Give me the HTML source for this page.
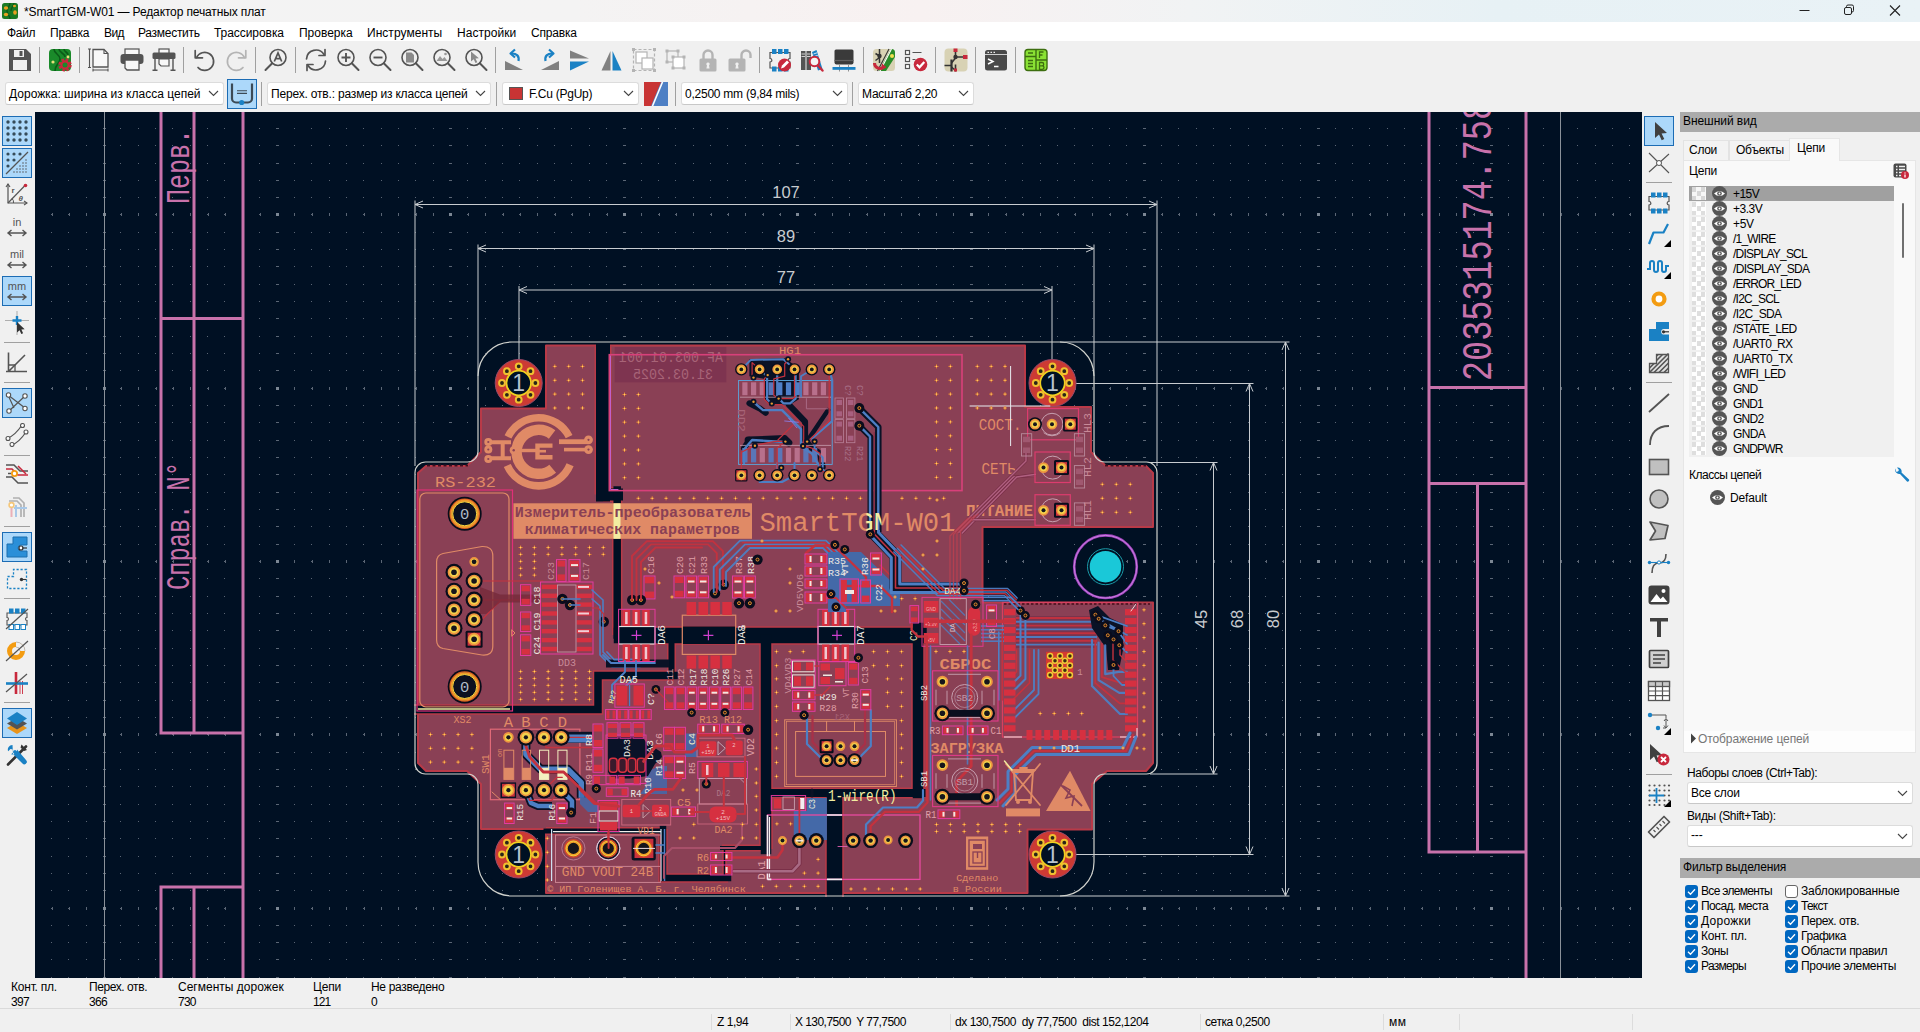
<!DOCTYPE html>
<html lang="ru"><head><meta charset="utf-8"><title>SmartTGM-W01</title>
<style>
*{box-sizing:border-box;margin:0;padding:0}
html,body{width:1920px;height:1032px;overflow:hidden;background:#f0f0f0;font-family:"Liberation Sans",sans-serif;font-size:12px;color:#000}
.abs{position:absolute}
#title{position:absolute;left:0;top:0;width:1920px;height:22px;background:linear-gradient(90deg,#f3f3f3 0%,#f4f3f3 30%,#f8f1f1 48%,#f1f3f4 62%,#e7f1f5 78%,#e9f2f6 100%)}
#title .t{position:absolute;left:24px;top:5px;font-size:12px;letter-spacing:-0.1px;white-space:nowrap}
#menu{position:absolute;left:0;top:22px;width:1920px;height:19px;background:#fff}
#menu span{position:absolute;top:4px;font-size:12px;white-space:nowrap;letter-spacing:-0.15px}
#tb1{position:absolute;left:0;top:41px;width:1920px;height:37px;background:#f0f0f0}
#tb2{position:absolute;left:0;top:78px;width:1920px;height:34px;background:#f0f0f0}
.sep{position:absolute;width:1px;background:#a0a0a0}
.ico{position:absolute;width:24px;height:24px}
.combo{position:absolute;top:4px;height:23px;background:#fff;border:1px solid #dcdcdc;border-bottom-color:#c8c8c8;border-radius:3px;font-size:12px;line-height:22px;padding-left:3px;white-space:nowrap;letter-spacing:-0.15px}
.combo svg{position:absolute;right:4px;top:7px}
#ltb{position:absolute;left:0;top:112px;width:35px;height:866px;background:#f0f0f0}
#rtb{position:absolute;left:1642px;top:112px;width:35px;height:866px;background:#f0f0f0}
.tbtn{position:absolute;width:30px;height:30px;border:1px solid #1c6cb4;background:#acd8fa}
#canvas{position:absolute;left:35px;top:112px;width:1607px;height:866px;background:#001023;overflow:hidden}
#rp{position:absolute;left:1677px;top:112px;width:243px;height:866px;background:#f0f0f0}
.hdr{position:absolute;left:3px;width:240px;height:20px;background:#ababab;font-size:12px;line-height:19px;padding-left:3px;letter-spacing:-0.1px}
.row{position:absolute;left:0;height:15px;width:205px;font-size:12px;line-height:15px;white-space:nowrap;letter-spacing:-0.2px}
.row .sw{position:absolute;left:3px;top:1px;width:14px;height:13px;background:
 conic-gradient(#fff 25%,#dcdcdc 0 50%,#fff 0 75%,#dcdcdc 0) 0 0/9px 9px;opacity:.9}
.row .eye{position:absolute;left:23px;top:0}
.row .tx{position:absolute;left:44px;top:1px}
#msg{position:absolute;left:0;top:978px;width:1920px;height:32px;background:#f0f0f0;font-size:12px;letter-spacing:-0.15px}
#msg span{position:absolute;white-space:nowrap}
#status{position:absolute;left:0;top:1008px;width:1920px;height:24px;background:#f0f0f0;border-top:1px solid #dadada;font-size:12px;letter-spacing:-0.15px}
#status span{position:absolute;top:6px;white-space:nowrap}
.cb{position:absolute;width:13px;height:13px;border-radius:3px;background:#0067c0}
.cb.off{background:#fff;border:1px solid #666}
.cbl{position:absolute;font-size:12px;white-space:nowrap;letter-spacing:-0.1px}
</style></head><body>
<div id="title">
<svg class="abs" style="left:2px;top:3px" width="16" height="16" viewBox="0 0 16 16"><rect x="0" y="0" width="16" height="16" rx="2.500" fill="#1b7a25"/><path d="M8 0c0 4-3 4-3 8s3 4 3 8M12 0c0 3-3 4-3 8" stroke="#0e5a18" stroke-width="1.300" fill="none"/><ellipse cx="4" cy="5" rx="2.200" ry="1.800" fill="#e8a020"/><ellipse cx="4" cy="11.500" rx="2.200" ry="1.800" fill="#e8a020"/><ellipse cx="13" cy="9.500" rx="1.800" ry="2.200" fill="#e8a020"/><ellipse cx="12.500" cy="3" rx="1.500" ry="1.300" fill="#e8a020"/></svg>
<div class="t" style="letter-spacing:-0.13px">*SmartTGM-W01 — Редактор печатных плат</div>
<svg class="abs" style="left:1795px;top:0" width="125" height="22" viewBox="0 0 125 22"><path d="M4.500 10.500h10" stroke="#222" stroke-width="1"/><rect x="49.500" y="7.500" width="7" height="7" rx="1.500" fill="none" stroke="#222" stroke-width="1"/><path d="M51.500 7.500v-1a1.500 1.500 0 0 1 1.500-1.500h4a1.500 1.500 0 0 1 1.500 1.500v4a1.500 1.500 0 0 1-1.500 1.500h-.5" fill="none" stroke="#222" stroke-width="1"/><path d="M95 5.500l10 10M105 5.500l-10 10" stroke="#222" stroke-width="1.100"/></svg>
</div>
<div id="menu">
<span style="left:7px;letter-spacing:-0.3px">Файл</span>
<span style="left:50px;letter-spacing:-0.21px">Правка</span>
<span style="left:104px;letter-spacing:-0.57px">Вид</span>
<span style="left:138px;letter-spacing:-0.28px">Разместить</span>
<span style="left:214px;letter-spacing:-0.06px">Трассировка</span>
<span style="left:299px;letter-spacing:-0.01px">Проверка</span>
<span style="left:367px;letter-spacing:0.04px">Инструменты</span>
<span style="left:457px;letter-spacing:0.05px">Настройки</span>
<span style="left:531px;letter-spacing:-0.2px">Справка</span>
</div>
<div id="tb1">
<svg class="abs" style="left:8px;top:7px" width="24" height="24" viewBox="0 0 24 24"><path d="M1 1h17l5 5v17H1z" fill="#545454"/><rect x="6" y="2" width="10" height="7" fill="#f0f0f0"/><rect x="11.5" y="3" width="3" height="5" fill="#545454"/><rect x="5" y="12" width="14" height="10" fill="#f0f0f0"/></svg>
<svg class="abs" style="left:48px;top:7px" width="24" height="24" viewBox="0 0 24 24"><rect x="1" y="1" width="22" height="22" rx="4" fill="#1a8a2a"/><path d="M6 1c0 5 6 5 6 10s-5 5-5 12M11 1c0 4 6 4 6 8M16 1c0 3 4 3 4 6" stroke="#0b5a18" stroke-width="1.6" fill="none"/><circle cx="5" cy="14" r="1.6" fill="#e8e07a"/><circle cx="20" cy="9" r="1.4" fill="#e8e07a"/><circle cx="17" cy="17" r="5.2" fill="none" stroke="#c8283c" stroke-width="3" stroke-dasharray="2.4 1.7"/><circle cx="17" cy="17" r="3.6" fill="none" stroke="#c8283c" stroke-width="2.2"/><circle cx="17" cy="17" r="1.6" fill="#1a8a2a"/></svg>
<svg class="abs" style="left:87px;top:7px" width="24" height="24" viewBox="0 0 24 24"><path d="M6 1.5h11l4 4V19H6z" fill="#f8f8f8" stroke="#545454" stroke-width="1.3"/><path d="M17 1.5v4h4" fill="none" stroke="#545454" stroke-width="1.1"/><path d="M2.5 1v18.5M1 1h3M1 19.5h3M6 22h15M6 20.5v3M21 20.5v3" stroke="#545454" stroke-width="1.1"/></svg>
<svg class="abs" style="left:120px;top:7px" width="24" height="24" viewBox="0 0 24 24"><rect x="5" y="1" width="14" height="6" fill="#f8f8f8" stroke="#545454" stroke-width="1.2"/><rect x="0.5" y="6" width="23" height="10" rx="3" fill="#545454"/><path d="M5 12h14v10h-12l-2-2z" fill="#f8f8f8" stroke="#545454" stroke-width="1.3"/></svg>
<svg class="abs" style="left:152px;top:7px" width="24" height="24" viewBox="0 0 24 24"><rect x="7" y="1" width="10" height="5" fill="#f8f8f8" stroke="#545454" stroke-width="1.2"/><rect x="0.5" y="4.5" width="23" height="6.5" rx="1.5" fill="#545454"/><path d="M7 11h10v7h-8l-2-2z" fill="#f8f8f8" stroke="#545454" stroke-width="1.2"/><path d="M3 11v11M21 11v11M0.5 22.3h5M18.5 22.3h5" stroke="#545454" stroke-width="1.4"/></svg>
<svg class="abs" style="left:192px;top:7px" width="24" height="24" viewBox="0 0 24 24"><path d="M4.5 9.5A9 9 0 1 1 6 19.5" fill="none" stroke="#545454" stroke-width="1.7" stroke-linecap="round"/><path d="M3.2 2.5v7.3h7.3" fill="none" stroke="#545454" stroke-width="1.7" stroke-linecap="round" stroke-linejoin="round"/></svg>
<svg class="abs" style="left:225px;top:7px" width="24" height="24" viewBox="0 0 24 24"><path d="M19.5 9.5A9 9 0 1 0 18 19.5" fill="none" stroke="#b4b4b4" stroke-width="1.7" stroke-linecap="round"/><path d="M20.8 2.5v7.3h-7.3" fill="none" stroke="#b4b4b4" stroke-width="1.7" stroke-linecap="round" stroke-linejoin="round"/></svg>
<svg class="abs" style="left:264px;top:7px" width="24" height="24" viewBox="0 0 24 24"><circle cx="14" cy="9.5" r="8" fill="none" stroke="#545454" stroke-width="1.6"/><path d="M8.2 15.3L1.5 22" stroke="#545454" stroke-width="2" stroke-linecap="round"/><path d="M10.3 13.5L14 5l3.7 8.5M11.6 10.6h4.8" fill="none" stroke="#545454" stroke-width="1.7"/></svg>
<svg class="abs" style="left:304px;top:7px" width="24" height="24" viewBox="0 0 24 24"><path d="M2.5 11A9.5 9.5 0 0 1 20 6.5M21.5 13A9.5 9.5 0 0 1 4 17.5" fill="none" stroke="#545454" stroke-width="1.7" stroke-linecap="round"/><path d="M21 1.5v6h-6M3 22.5v-6h6" fill="none" stroke="#545454" stroke-width="1.7" stroke-linecap="round" stroke-linejoin="round"/></svg>
<svg class="abs" style="left:336px;top:7px" width="24" height="24" viewBox="0 0 24 24"><circle cx="10" cy="9.5" r="8" fill="none" stroke="#545454" stroke-width="1.6"/><path d="M15.8 15.3L22.5 22" stroke="#545454" stroke-width="2" stroke-linecap="round"/><path d="M5.5 9.5h9M10 5v9" stroke="#545454" stroke-width="1.9"/></svg>
<svg class="abs" style="left:368px;top:7px" width="24" height="24" viewBox="0 0 24 24"><circle cx="10" cy="9.5" r="8" fill="none" stroke="#545454" stroke-width="1.6"/><path d="M15.8 15.3L22.5 22" stroke="#545454" stroke-width="2" stroke-linecap="round"/><path d="M5.5 9.5h9" stroke="#545454" stroke-width="1.9"/></svg>
<svg class="abs" style="left:400px;top:7px" width="24" height="24" viewBox="0 0 24 24"><circle cx="10" cy="9.5" r="8" fill="none" stroke="#545454" stroke-width="1.6"/><path d="M15.8 15.3L22.5 22" stroke="#545454" stroke-width="2" stroke-linecap="round"/><path d="M6 4.5h5.5l2.5 2.5v7.5H6z" fill="#8a8a8a"/></svg>
<svg class="abs" style="left:432px;top:7px" width="24" height="24" viewBox="0 0 24 24"><circle cx="10" cy="9.5" r="8" fill="none" stroke="#545454" stroke-width="1.6"/><path d="M15.8 15.3L22.5 22" stroke="#545454" stroke-width="2" stroke-linecap="round"/><path d="M4.5 13l3.5-5 2.5 3 2-2 3 4z" fill="#9a9a9a"/><circle cx="13.5" cy="6" r="1.3" fill="#9a9a9a"/></svg>
<svg class="abs" style="left:464px;top:7px" width="24" height="24" viewBox="0 0 24 24"><circle cx="10" cy="9.5" r="8" fill="none" stroke="#545454" stroke-width="1.6"/><path d="M15.8 15.3L22.5 22" stroke="#545454" stroke-width="2" stroke-linecap="round"/><path d="M7 3.5v10l2.7-2.2 1.8 3.7 1.8-.8-1.8-3.6 3.4-.3z" fill="#8a8a8a"/></svg>
<svg class="abs" style="left:504px;top:7px" width="24" height="24" viewBox="0 0 24 24"><path d="M1 13l18 9H1z" fill="#808080"/><path d="M14.5 13c1-5-2-7.5-6.5-7.5" fill="none" stroke="#1a81c4" stroke-width="2.2"/><path d="M11 1.5L6.5 5.5 11 9.5" fill="none" stroke="#1a81c4" stroke-width="2.2" stroke-linejoin="round"/></svg>
<svg class="abs" style="left:536px;top:7px" width="24" height="24" viewBox="0 0 24 24"><path d="M23 13L5 22h18z" fill="#808080"/><path d="M9.5 13c-1-5 2-7.5 6.5-7.5" fill="none" stroke="#1a81c4" stroke-width="2.2"/><path d="M13 1.5l4.500 4L13 9.5" fill="none" stroke="#1a81c4" stroke-width="2.2" stroke-linejoin="round"/></svg>
<svg class="abs" style="left:568px;top:7px" width="24" height="24" viewBox="0 0 24 24"><path d="M2 2.500l19 8H2z" fill="#808080"/><path d="M2 22.500l19-9H2z" fill="#1a81c4"/></svg>
<svg class="abs" style="left:600px;top:7px" width="24" height="24" viewBox="0 0 24 24"><path d="M10.5 3v19.500H1.500z" fill="#808080"/><path d="M12.500 3v19.500h9z" fill="#1a81c4"/></svg>
<svg class="abs" style="left:632px;top:7px" width="24" height="24" viewBox="0 0 24 24"><rect x="1.5" y="1.5" width="21" height="21" fill="none" stroke="#b4b4b4" stroke-width="1.2" stroke-dasharray="3 2"/><rect x="0" y="0" width="3" height="3" fill="#b4b4b4"/><rect x="21" y="0" width="3" height="3" fill="#b4b4b4"/><rect x="0" y="21" width="3" height="3" fill="#b4b4b4"/><rect x="21" y="21" width="3" height="3" fill="#b4b4b4"/><rect x="4" y="4" width="11" height="11" fill="#fff" stroke="#b4b4b4" stroke-width="1.2"/><rect x="10" y="10" width="11" height="11" fill="#fff" stroke="#b4b4b4" stroke-width="1.2"/></svg>
<svg class="abs" style="left:664px;top:7px" width="24" height="24" viewBox="0 0 24 24"><rect x="3" y="3" width="11" height="11" fill="none" stroke="#b4b4b4" stroke-width="1.2"/><rect x="9" y="9" width="11" height="11" fill="#fff" stroke="#b4b4b4" stroke-width="1.2"/><rect x="1.5" y="1.5" width="3" height="3" fill="#b4b4b4"/><rect x="12.5" y="1.5" width="3" height="3" fill="#b4b4b4"/><rect x="1.5" y="12.5" width="3" height="3" fill="#b4b4b4"/><rect x="7.5" y="7.5" width="3" height="3" fill="#b4b4b4"/><rect x="18.5" y="7.5" width="3" height="3" fill="#b4b4b4"/><rect x="7.5" y="18.5" width="3" height="3" fill="#b4b4b4"/><rect x="18.5" y="18.5" width="3" height="3" fill="#b4b4b4"/></svg>
<svg class="abs" style="left:696px;top:7px" width="24" height="24" viewBox="0 0 24 24"><path d="M7.500 11V7a4.500 4.500 0 0 1 9 0v4" fill="none" stroke="#b4b4b4" stroke-width="2.400"/><rect x="3.500" y="10.500" width="17" height="13" rx="1.500" fill="#b4b4b4"/><path d="M12 14.500a1.600 1.600 0 0 1 1 2.900l.6 3h-3.200l.6-3a1.600 1.600 0 0 1 1-2.900z" fill="#f0f0f0"/></svg>
<svg class="abs" style="left:728px;top:7px" width="24" height="24" viewBox="0 0 24 24"><path d="M13.500 11V7a4.500 4.500 0 0 1 9 0v3" fill="none" stroke="#b4b4b4" stroke-width="2.400"/><rect x="0.500" y="10.500" width="17" height="13" rx="1.500" fill="#b4b4b4"/><path d="M9 14.500a1.600 1.600 0 0 1 1 2.900l.6 3H7.400l.6-3a1.600 1.600 0 0 1 1-2.900z" fill="#f0f0f0"/></svg>
<svg class="abs" style="left:768px;top:7px" width="24" height="24" viewBox="0 0 24 24"><path d="M2 4.500h20v6c-2.500 0-2.500 3.500 0 3.500v6H2v-6c2.500 0 2.500-3.500 0-3.500z" fill="none" stroke="#545454" stroke-width="1.200"/><rect x="4" y="1" width="4.500" height="5" fill="#1a81c4"/><rect x="4" y="18.5" width="4.500" height="5" fill="#1a81c4"/><rect x="10" y="1" width="4.500" height="5" fill="#1a81c4"/><rect x="10" y="18.5" width="4.500" height="5" fill="#1a81c4"/><rect x="16" y="1" width="4.500" height="5" fill="#1a81c4"/><rect x="16" y="18.5" width="4.500" height="5" fill="#1a81c4"/><circle cx="16.500" cy="17" r="6.500" fill="#c8283c"/><path d="M13 20.500l1-3 5-5 2 2-5 5z" fill="#fff"/></svg>
<svg class="abs" style="left:800px;top:7px" width="24" height="24" viewBox="0 0 24 24"><rect x="1" y="3" width="4.500" height="19" fill="#545454"/><rect x="6.500" y="3" width="4.500" height="19" fill="#545454"/><path d="M1.500 6h3.500M1.500 8.500h3.500M7 6h3.500M7 8.500h3.500" stroke="#d0d0d0" stroke-width="1"/><path d="M12 4l4.500-2 6 19-4.500 1.500z" fill="#1a81c4"/><path d="M13.500 6l3.500-1.200M14.300 8.500l3.500-1.200" stroke="#cfe4f4" stroke-width="1"/><circle cx="14.500" cy="13.500" r="4.800" fill="#f4f4f4" stroke="#c8283c" stroke-width="2"/><path d="M18 17.500l4.500 5" stroke="#c8283c" stroke-width="2.400" stroke-linecap="round"/></svg>
<svg class="abs" style="left:832px;top:7px" width="24" height="24" viewBox="0 0 24 24"><path d="M4 1.500h16a1.500 1.500 0 0 1 1.500 1.500v11.500a2 2 0 0 1-2 2h-15a2 2 0 0 1-2-2V3a1.500 1.500 0 0 1 1.500-1.500z" fill="#3a3a3a"/><path d="M2.500 12.500h19" stroke="#606060" stroke-width="1.200"/><path d="M7.500 16.500v7M16.500 16.500v7" stroke="#909090" stroke-width="1"/><rect x="0.500" y="19" width="23" height="2.800" fill="#1a81c4"/></svg>
<svg class="abs" style="left:872px;top:7px" width="24" height="24" viewBox="0 0 24 24"><rect x="1" y="1" width="22" height="22" rx="3.500" fill="#d8d2b4"/><path d="M14 23L23 9V4.500a3.500 3.500 0 0 0-3.500-3.500H19L7 23z" fill="#2a8c2a"/><path d="M19.500 1L8 23" stroke="#fff" stroke-width="1.100"/><path d="M17 1L5.500 23" stroke="#333" stroke-width="1.100"/><circle cx="20" cy="8" r="2" fill="#f0e050"/><circle cx="7.500" cy="8" r="2.200" fill="#333"/><path d="M7.500 1v14M3.500 5.500l4 2.500M3.500 12.500l4-3" stroke="#333" stroke-width="1.500"/><path d="M2.500 15c0 5 5 6.500 9 4.500" fill="none" stroke="#c8283c" stroke-width="3"/><path d="M10 15.500l4.500 3.800-5.500 3z" fill="#c8283c"/></svg>
<svg class="abs" style="left:904px;top:7px" width="24" height="24" viewBox="0 0 24 24"><rect x="1.500" y="2.500" width="4" height="4" fill="#fff" stroke="#545454" stroke-width="1.200"/><rect x="1.500" y="9.500" width="4" height="4" fill="#fff" stroke="#545454" stroke-width="1.200"/><rect x="1.500" y="16.500" width="4" height="4" fill="#fff" stroke="#545454" stroke-width="1.200"/><path d="M8.500 4.500h9M8.500 11.500h3" stroke="#545454" stroke-width="1.200"/><circle cx="16.500" cy="16.500" r="6.800" fill="#c8283c"/><path d="M12.800 16.500l2.700 2.800 4.800-5.300" fill="none" stroke="#fff" stroke-width="2.200"/></svg>
<svg class="abs" style="left:944px;top:7px" width="24" height="24" viewBox="0 0 24 24"><rect x="0.500" y="0.500" width="23" height="23" rx="4" fill="#d8d2b4"/><path d="M0.500 17.500h7M11.500 1v7M11.500 16.500v7M11.500 9h10" stroke="#333" stroke-width="1.600"/><path d="M7.500 11.500v12" stroke="#333" stroke-width="2.200"/><path d="M7.500 15l4-5M7.500 19l4 3.500" stroke="#333" stroke-width="1.500"/><circle cx="11.500" cy="9" r="2.200" fill="#333"/><rect x="9.500" y="0.500" width="4" height="3.500" fill="#c8283c"/><rect x="19" y="7" width="4.500" height="4" fill="#c8283c"/><rect x="10" y="20.500" width="3" height="3" fill="#c8283c"/></svg>
<svg class="abs" style="left:984px;top:7px" width="24" height="24" viewBox="0 0 24 24"><rect x="1" y="2" width="22" height="20.500" rx="2.500" fill="#4a4a4a"/><path d="M1 6.500h22" stroke="#f0f0f0" stroke-width="0.800"/><path d="M3.500 4.300h1.500M6.500 4.300H8M9.500 4.300H11" stroke="#eee" stroke-width="1.200"/><path d="M4 11l5 2.500L4 16M10 18.500h4.500" fill="none" stroke="#fff" stroke-width="1.500"/></svg>
<svg class="abs" style="left:1024px;top:7px" width="24" height="24" viewBox="0 0 24 24"><rect x="1" y="1.500" width="22" height="21" rx="3" fill="#8ae234" stroke="#3d6e10" stroke-width="1.400"/><path d="M12 1.500v21M1 8.500h11M12 12h11" stroke="#3d6e10" stroke-width="1.400"/><path d="M4 5h5M4 12.500h5M4 15.500h5M4 18.500h5" stroke="#3d6e10" stroke-width="1.300"/><path d="M15.500 10V4h4M15.500 7h3" fill="none" stroke="#3d6e10" stroke-width="1.300"/><path d="M15.500 14.500h2.500a1.700 1.700 0 0 1 0 3.400h-2.500zM15.500 17.900h2.800a1.700 1.700 0 0 1 0 3.400h-2.800z" fill="none" stroke="#3d6e10" stroke-width="1.300"/></svg>
<div class="sep" style="left:39.0px;top:6px;height:26px"></div>
<div class="sep" style="left:79.0px;top:6px;height:26px"></div>
<div class="sep" style="left:183.0px;top:6px;height:26px"></div>
<div class="sep" style="left:255.0px;top:6px;height:26px"></div>
<div class="sep" style="left:295.0px;top:6px;height:26px"></div>
<div class="sep" style="left:495.0px;top:6px;height:26px"></div>
<div class="sep" style="left:759.0px;top:6px;height:26px"></div>
<div class="sep" style="left:863.0px;top:6px;height:26px"></div>
<div class="sep" style="left:935.0px;top:6px;height:26px"></div>
<div class="sep" style="left:975.0px;top:6px;height:26px"></div>
<div class="sep" style="left:1015.0px;top:6px;height:26px"></div>
</div>
<div id="tb2">
<div class="combo" style="left:5px;width:219px;letter-spacing:0.01px">Дорожка: ширина из класса цепей<svg width="11" height="7" viewBox="0 0 11 7"><path d="M1 1l4.500 4.500L10 1" fill="none" stroke="#444" stroke-width="1.100"/></svg></div>
<div class="tbtn" style="left:227px;top:1px"></div>
<svg class="abs" style="left:230px;top:4px" width="24" height="24" viewBox="0 0 24 24"><path d="M2 1.500v15a4 4 0 0 0 4 4h12a4 4 0 0 0 4-4V1.500" fill="none" stroke="#3c4a56" stroke-width="2.200"/><path d="M7 8.700h10M7 11.400h10" stroke="#3c4a56" stroke-width="1.100"/><circle cx="11.700" cy="20.500" r="2.600" fill="#1a81c4"/></svg>
<div class="sep" style="left:261px;top:4px;height:24px"></div>
<div class="combo" style="left:267px;width:224px;letter-spacing:-0.18px">Перех. отв.: размер из класса цепей<svg width="11" height="7" viewBox="0 0 11 7"><path d="M1 1l4.500 4.500L10 1" fill="none" stroke="#444" stroke-width="1.100"/></svg></div>
<div class="sep" style="left:496px;top:4px;height:24px"></div>
<div class="combo" style="left:502px;width:137px;letter-spacing:-0.25px"><span style="display:inline-block;width:14px;height:13px;background:#c83434;border:1px solid #555;vertical-align:-2px;margin:0 6px 0 3px"></span>F.Cu (PgUp)<svg width="11" height="7" viewBox="0 0 11 7"><path d="M1 1l4.500 4.500L10 1" fill="none" stroke="#444" stroke-width="1.100"/></svg></div>
<svg class="abs" style="left:644px;top:3px" width="24" height="26" viewBox="0 0 24 24"><rect x="0" y="0" width="24" height="24" fill="#4d7fc4"/><path d="M0 0h17L7 24H0z" fill="#c83434"/><path d="M18.500 0L8.500 24" stroke="#fff" stroke-width="1.600"/></svg>
<div class="sep" style="left:675px;top:4px;height:24px"></div>
<div class="combo" style="left:681px;width:167px;letter-spacing:-0.24px">0,2500 mm (9,84 mils)<svg width="11" height="7" viewBox="0 0 11 7"><path d="M1 1l4.500 4.500L10 1" fill="none" stroke="#444" stroke-width="1.100"/></svg></div>
<div class="sep" style="left:852px;top:4px;height:24px"></div>
<div class="combo" style="left:858px;width:116px;letter-spacing:-0.23px">Масштаб 2,20<svg width="11" height="7" viewBox="0 0 11 7"><path d="M1 1l4.500 4.500L10 1" fill="none" stroke="#444" stroke-width="1.100"/></svg></div>
</div>
<div id="ltb">
<div class="tbtn" style="left:2px;top:4px"></div>
<svg class="abs" style="left:5px;top:7px" width="24" height="24" viewBox="0 0 24 24"><circle cx="3" cy="3" r="1.7" fill="#364c5a"/><circle cx="3" cy="9" r="1.7" fill="#364c5a"/><circle cx="3" cy="15" r="1.7" fill="#364c5a"/><circle cx="3" cy="21" r="1.7" fill="#364c5a"/><circle cx="9" cy="3" r="1.7" fill="#364c5a"/><circle cx="9" cy="9" r="1.7" fill="#364c5a"/><circle cx="9" cy="15" r="1.7" fill="#364c5a"/><circle cx="9" cy="21" r="1.7" fill="#364c5a"/><circle cx="15" cy="3" r="1.7" fill="#364c5a"/><circle cx="15" cy="9" r="1.7" fill="#364c5a"/><circle cx="15" cy="15" r="1.7" fill="#364c5a"/><circle cx="15" cy="21" r="1.7" fill="#364c5a"/><circle cx="21" cy="3" r="1.7" fill="#364c5a"/><circle cx="21" cy="9" r="1.7" fill="#364c5a"/><circle cx="21" cy="15" r="1.7" fill="#364c5a"/><circle cx="21" cy="21" r="1.7" fill="#364c5a"/></svg>
<div class="tbtn" style="left:2px;top:36px"></div>
<svg class="abs" style="left:5px;top:39px" width="24" height="24" viewBox="0 0 24 24"><path d="M1 23L23 1" stroke="#545454" stroke-width="1.2"/><circle cx="3" cy="3" r="1.6" fill="#364c5a"/><circle cx="3" cy="9" r="1.6" fill="#364c5a"/><circle cx="3" cy="15" r="1.6" fill="#364c5a"/><circle cx="9" cy="3" r="1.6" fill="#364c5a"/><circle cx="9" cy="9" r="1.6" fill="#364c5a"/><circle cx="15" cy="3" r="1.6" fill="#364c5a"/><circle cx="9" cy="21" r="0.75" fill="#545454"/><circle cx="12" cy="18" r="0.75" fill="#545454"/><circle cx="12" cy="21" r="0.75" fill="#545454"/><circle cx="15" cy="15" r="0.75" fill="#545454"/><circle cx="15" cy="18" r="0.75" fill="#545454"/><circle cx="15" cy="21" r="0.75" fill="#545454"/><circle cx="18" cy="12" r="0.75" fill="#545454"/><circle cx="18" cy="15" r="0.75" fill="#545454"/><circle cx="18" cy="18" r="0.75" fill="#545454"/><circle cx="18" cy="21" r="0.75" fill="#545454"/><circle cx="21" cy="9" r="0.75" fill="#545454"/><circle cx="21" cy="12" r="0.75" fill="#545454"/><circle cx="21" cy="15" r="0.75" fill="#545454"/><circle cx="21" cy="18" r="0.75" fill="#545454"/><circle cx="21" cy="21" r="0.75" fill="#545454"/></svg>
<svg class="abs" style="left:5px;top:71px" width="24" height="24" viewBox="0 0 24 24"><path d="M3 1v19h19" fill="none" stroke="#545454" stroke-width="1.2"/><path d="M1 4l2-3 2 3M19 18l3 2-3 2" fill="none" stroke="#545454" stroke-width="1.1"/><path d="M3 20L19.500 3" stroke="#545454" stroke-width="1.200"/><circle cx="20.500" cy="2.500" r="1.800" fill="#c8283c"/><path d="M7 15.500a5 5 0 0 1 1.500 4.500" fill="none" stroke="#545454" stroke-width="1"/><text x="6.500" y="9.500" font-size="8" font-family="Liberation Sans" font-weight="bold" fill="#545454">r</text><text x="13.500" y="17.500" font-size="8" font-style="italic" font-family="Liberation Sans" font-weight="bold" fill="#545454">θ</text></svg>
<svg class="abs" style="left:5px;top:103px" width="24" height="24" viewBox="0 0 24 24"><text x="12" y="11" font-size="11" text-anchor="middle" font-family="Liberation Sans" fill="#545454">in</text><path d="M3 18h18M6.500 15L3 18l3.500 3M17.500 15l3.500 3-3.500 3" fill="none" stroke="#545454" stroke-width="1.400"/></svg>
<svg class="abs" style="left:5px;top:135px" width="24" height="24" viewBox="0 0 24 24"><text x="12" y="11" font-size="11" text-anchor="middle" font-family="Liberation Sans" fill="#545454">mil</text><path d="M3 18h18M6.500 15L3 18l3.500 3M17.500 15l3.500 3-3.500 3" fill="none" stroke="#545454" stroke-width="1.400"/></svg>
<div class="tbtn" style="left:2px;top:164px"></div>
<svg class="abs" style="left:5px;top:167px" width="24" height="24" viewBox="0 0 24 24"><text x="12" y="10.500" font-size="11" text-anchor="middle" font-family="Liberation Sans" fill="#545454">mm</text><path d="M3 18h18M6.500 15L3 18l3.500 3M17.500 15l3.500 3-3.500 3" fill="none" stroke="#545454" stroke-width="1.400"/></svg>
<svg class="abs" style="left:5px;top:199px" width="24" height="24" viewBox="0 0 24 24"><path d="M12 0v24M0 9.500h24" stroke="#909090" stroke-width="0.700"/><path d="M12 5v9M7.500 9.500h9" stroke="#1a81c4" stroke-width="2.400"/><path d="M12 11v10.500l2.600-2.200 1.700 3.700 1.800-.8-1.700-3.600 3.300-.3z" fill="#333"/></svg>
<svg class="abs" style="left:5px;top:239px" width="24" height="24" viewBox="0 0 24 24"><path d="M3.500 1.500v19M1 20.500h21M3.500 20.500L20 4" fill="none" stroke="#545454" stroke-width="1.600"/><path d="M3.500 14h6.500v6.500" fill="none" stroke="#545454" stroke-width="1.300"/></svg>
<div class="tbtn" style="left:2px;top:276px"></div>
<svg class="abs" style="left:5px;top:279px" width="24" height="24" viewBox="0 0 24 24"><path d="M3 4l17 13M4 20L20 5M3 4l6 13" stroke="#545454" stroke-width="1.200"/><circle cx="3.500" cy="4" r="2.200" fill="#fff" stroke="#545454" stroke-width="1.100"/><circle cx="20" cy="5" r="2.200" fill="#fff" stroke="#545454" stroke-width="1.100"/><circle cx="4" cy="20" r="2.200" fill="#fff" stroke="#545454" stroke-width="1.100"/><circle cx="20" cy="17.500" r="2.200" fill="#fff" stroke="#545454" stroke-width="1.100"/></svg>
<svg class="abs" style="left:5px;top:311px" width="24" height="24" viewBox="0 0 24 24"><path d="M3 15C8 13 13 8 17 2M7 22c5-2 10-7 14-13" fill="none" stroke="#545454" stroke-width="1.200"/><circle cx="3" cy="15.500" r="2" fill="#fff" stroke="#545454" stroke-width="1.100"/><circle cx="17.500" cy="2.500" r="2" fill="#fff" stroke="#545454" stroke-width="1.100"/><circle cx="7" cy="21.500" r="2" fill="#fff" stroke="#545454" stroke-width="1.100"/><circle cx="21" cy="9" r="2" fill="#fff" stroke="#545454" stroke-width="1.100"/></svg>
<svg class="abs" style="left:5px;top:351px" width="24" height="24" viewBox="0 0 24 24"><path d="M1 6h6l6 6h10" fill="none" stroke="#c8283c" stroke-width="1.600"/><path d="M1 2h8l6 6h8" fill="none" stroke="#545454" stroke-width="1.500"/><path d="M1 14h6l6 6h10M3 10.500h3" fill="none" stroke="#545454" stroke-width="1.500"/><path d="M13 3l8 8" stroke="#c8283c" stroke-width="1.600"/><circle cx="9.500" cy="10.500" r="2.600" fill="#fff" stroke="#f39c12" stroke-width="1.800"/></svg>
<svg class="abs" style="left:5px;top:383px" width="24" height="24" viewBox="0 0 24 24"><path d="M8 3h6l5 5v14M4 6h8l4 4v12" fill="none" stroke="#b0b0b0" stroke-width="1.700"/><path d="M6.500 12v10" stroke="#eab0b8" stroke-width="2"/><path d="M11 10v12M9 13h13" stroke="#a8c8e8" stroke-width="2"/><circle cx="6.500" cy="10" r="2.400" fill="#fff" stroke="#f5c77a" stroke-width="1.600"/></svg>
<div class="tbtn" style="left:2px;top:420px"></div>
<svg class="abs" style="left:5px;top:423px" width="24" height="24" viewBox="0 0 24 24"><path d="M2 22V9h6V2h14v8h-6a3 3 0 0 0 0 6h6v6z" fill="#2a8fd8" stroke="#1a6fae" stroke-width="1"/><circle cx="16" cy="13" r="2" fill="#fff" stroke="#333" stroke-width="1.200"/><path d="M17 13h5" stroke="#333" stroke-width="1.200"/></svg>
<svg class="abs" style="left:5px;top:455px" width="24" height="24" viewBox="0 0 24 24"><path d="M2.500 21.500V9.500h6v-7h13v19z" fill="none" stroke="#1a81c4" stroke-width="1.300" stroke-dasharray="2.200 1.800"/><circle cx="16.500" cy="12.500" r="1.700" fill="#333"/><path d="M17 12.500h4.500" stroke="#333" stroke-width="1.100"/></svg>
<svg class="abs" style="left:5px;top:495px" width="24" height="24" viewBox="0 0 24 24"><path d="M2 6h20v4.500c-2 0-2 3 0 3V18H2v-4.500c2 0 2-3 0-3z" fill="none" stroke="#545454" stroke-width="1.100"/><rect x="4" y="1.500" width="4.500" height="5" fill="#1a81c4"/><rect x="10" y="1.500" width="4.500" height="5" fill="#1a81c4"/><rect x="16" y="1.500" width="4.500" height="5" fill="#1a81c4"/><rect x="4" y="17.500" width="4.500" height="5" fill="#fff" stroke="#1a81c4" stroke-width="1"/><rect x="10" y="17.500" width="4.500" height="5" fill="#fff" stroke="#1a81c4" stroke-width="1"/><rect x="16" y="17.500" width="4.500" height="5" fill="#fff" stroke="#1a81c4" stroke-width="1"/><path d="M1 22L23 2" stroke="#545454" stroke-width="1.200"/></svg>
<svg class="abs" style="left:5px;top:527px" width="24" height="24" viewBox="0 0 24 24"><circle cx="11" cy="12" r="6.500" fill="none" stroke="#f39c12" stroke-width="5"/><path d="M11 12m0-9a9 9 0 0 1 9 9l-5 0a4 4 0 0 0-4-4z" fill="#f0f0f0"/><path d="M20 12a9 9 0 0 0-9-9M15 12a4 4 0 0 0-4-4" fill="none" stroke="#b0b0b0" stroke-width="0.800"/><path d="M1 22L23 2" stroke="#545454" stroke-width="1.200"/></svg>
<svg class="abs" style="left:5px;top:559px" width="24" height="24" viewBox="0 0 24 24"><path d="M11 1v22" stroke="#c8283c" stroke-width="2.600"/><path d="M15 10v13M17.500 10v13" stroke="#c8283c" stroke-width="0.900"/><path d="M1 12.500h22" stroke="#1a81c4" stroke-width="2.600"/><path d="M1 21L22 3" stroke="#545454" stroke-width="1.200"/></svg>
<div class="tbtn" style="left:2px;top:596px"></div>
<svg class="abs" style="left:5px;top:599px" width="24" height="24" viewBox="0 0 24 24"><path d="M12 11l10 6-10 6L2 17z" fill="#e8941a"/><path d="M12 6.500l10 6-10 6-10-6z" fill="#545454"/><path d="M12 1l10 6.500L12 14 2 7.500z" fill="#1a81c4"/></svg>
<svg class="abs" style="left:5px;top:631px" width="24" height="24" viewBox="0 0 24 24"><path d="M3 21.500l8.500-8.500M21 3.500l-8 8" stroke="#333" stroke-width="2.600" stroke-linecap="round"/><path d="M16.500 1.500l5.500 5.500-3 1-3.500-3.500z" fill="#333"/><path d="M7.500 2a4.500 4.500 0 0 0-4.300 6.300L5.500 6l2.500.5.500 2.500L6.200 11.300A4.500 4.500 0 0 0 12 6.500L21 17a2.300 2.300 0 0 1-3.500 3.500L8 11" fill="#1a81c4"/><path d="M10 9l9.500 10" stroke="#1a81c4" stroke-width="3.600" stroke-linecap="round"/></svg>
<div class="abs" style="left:4px;top:230px;width:26px;height:1px;background:#a0a0a0"></div>
<div class="abs" style="left:4px;top:270px;width:26px;height:1px;background:#a0a0a0"></div>
<div class="abs" style="left:4px;top:343px;width:26px;height:1px;background:#a0a0a0"></div>
<div class="abs" style="left:4px;top:414px;width:26px;height:1px;background:#a0a0a0"></div>
<div class="abs" style="left:4px;top:486px;width:26px;height:1px;background:#a0a0a0"></div>
<div class="abs" style="left:4px;top:590px;width:26px;height:1px;background:#a0a0a0"></div>
</div>
<div id="rtb">
<div class="tbtn" style="left:2px;top:4px"></div>
<svg class="abs" style="left:5px;top:7px" width="24" height="24" viewBox="0 0 24 24"><path d="M8 3v16l4-3.500 2.700 5.800 2.600-1.200-2.700-5.700 5.400-.4z" fill="#404040"/></svg>
<svg class="abs" style="left:5px;top:39px" width="24" height="24" viewBox="0 0 24 24"><path d="M2 2l20 20M22 3L2 21" stroke="#545454" stroke-width="1.100"/><circle cx="12" cy="12" r="2.500" fill="#fff" stroke="#545454" stroke-width="1"/></svg>
<svg class="abs" style="left:5px;top:79px" width="24" height="24" viewBox="0 0 24 24"><path d="M2 5.500h20v5c-2.500 0-2.500 3.500 0 3.500v5H2v-5c2.500 0 2.500-3.500 0-3.500z" fill="none" stroke="#545454" stroke-width="1.200"/><rect x="4" y="1.5" width="4.500" height="5" fill="#1a81c4"/><rect x="4" y="17.5" width="4.500" height="5" fill="#1a81c4"/><rect x="10" y="1.5" width="4.500" height="5" fill="#1a81c4"/><rect x="10" y="17.5" width="4.500" height="5" fill="#1a81c4"/><rect x="16" y="1.5" width="4.500" height="5" fill="#1a81c4"/><rect x="16" y="17.5" width="4.500" height="5" fill="#1a81c4"/></svg>
<svg class="abs" style="left:5px;top:111px" width="24" height="24" viewBox="0 0 24 24"><path d="M2 21L6.500 9.500h10L21 1" fill="none" stroke="#1a81c4" stroke-width="2.200" stroke-linejoin="round"/><path d="M24 17v7h-7z" fill="#000"/></svg>
<svg class="abs" style="left:5px;top:143px" width="24" height="24" viewBox="0 0 24 24"><path d="M0 14h3V8a2 2 0 0 1 4 0v7a2 2 0 0 0 4 0V8a2 2 0 0 1 4 0v7a2 2 0 0 0 4 0v-4h3" fill="none" stroke="#1a81c4" stroke-width="2"/><path d="M24 17v7h-7z" fill="#000"/></svg>
<svg class="abs" style="left:5px;top:175px" width="24" height="24" viewBox="0 0 24 24"><circle cx="12" cy="12" r="5.500" fill="#fff" stroke="#f39c12" stroke-width="4.200"/></svg>
<svg class="abs" style="left:5px;top:207px" width="24" height="24" viewBox="0 0 24 24"><path d="M2 22V10h7V3h13v7h-5a2.800 2.800 0 0 0 0 5.600h5V22z" fill="#1a81c4"/><circle cx="16.500" cy="12.800" r="1.600" fill="#333"/><path d="M17 12.800h5" stroke="#333" stroke-width="1.200"/></svg>
<svg class="abs" style="left:5px;top:239px" width="24" height="24" viewBox="0 0 24 24"><path d="M2.500 21.500v-9h7v-9h12v18z" fill="#e0e0e0" stroke="#545454" stroke-width="1.300"/><path d="M2.500 17l4.500-4.500M2.500 21.500l19-19M7 21.500L21.500 7M12 21.500l9.500-9.500M17 21.500l4.500-4.500M9.500 9.500l6-6M9.500 5l1.500-1.500" stroke="#545454" stroke-width="1.600"/></svg>
<svg class="abs" style="left:5px;top:279px" width="24" height="24" viewBox="0 0 24 24"><path d="M2 21L22 3" stroke="#545454" stroke-width="1.800"/></svg>
<svg class="abs" style="left:5px;top:311px" width="24" height="24" viewBox="0 0 24 24"><path d="M3 22C3 10 10 3 22 3" fill="none" stroke="#545454" stroke-width="1.800"/></svg>
<svg class="abs" style="left:5px;top:343px" width="24" height="24" viewBox="0 0 24 24"><rect x="2.500" y="4.500" width="19" height="15" fill="#c0c0c0" stroke="#545454" stroke-width="1.600"/></svg>
<svg class="abs" style="left:5px;top:375px" width="24" height="24" viewBox="0 0 24 24"><circle cx="12" cy="12" r="9" fill="#c0c0c0" stroke="#545454" stroke-width="1.600"/></svg>
<svg class="abs" style="left:5px;top:407px" width="24" height="24" viewBox="0 0 24 24"><path d="M3 3l18 3.500-3 13L3 21l5.500-9z" fill="#c0c0c0" stroke="#545454" stroke-width="1.700" stroke-linejoin="round"/></svg>
<svg class="abs" style="left:5px;top:439px" width="24" height="24" viewBox="0 0 24 24"><path d="M5 22c0-8 3-10 7-10s7-3 7-9" fill="none" stroke="#545454" stroke-width="1.600"/><path d="M1 11.500h22" stroke="#1a81c4" stroke-width="1.100"/><circle cx="2.500" cy="11.500" r="1.700" fill="#1a81c4"/><circle cx="21.500" cy="11.500" r="1.700" fill="#1a81c4"/><circle cx="12" cy="11.500" r="1.600" fill="#fff" stroke="#1a81c4" stroke-width="1"/></svg>
<svg class="abs" style="left:5px;top:471px" width="24" height="24" viewBox="0 0 24 24"><rect x="1.500" y="2.500" width="21" height="19" rx="3" fill="#404040"/><path d="M3.500 19l6-8 4 5 2.500-2.500 4.500 5.500z" fill="#fff"/><circle cx="16.500" cy="8" r="2" fill="#fff"/></svg>
<svg class="abs" style="left:5px;top:503px" width="24" height="24" viewBox="0 0 24 24"><path d="M3 3h18v3.500H14V22h-4V6.500H3z" fill="#404040"/></svg>
<svg class="abs" style="left:5px;top:535px" width="24" height="24" viewBox="0 0 24 24"><rect x="2.500" y="3.500" width="19" height="17" rx="1" fill="#d0d0d0" stroke="#404040" stroke-width="1.700"/><path d="M6 8h12M6 12h12M6 16h8" stroke="#404040" stroke-width="1.400"/></svg>
<svg class="abs" style="left:5px;top:567px" width="24" height="24" viewBox="0 0 24 24"><rect x="1.500" y="2.500" width="21" height="19" fill="#fff" stroke="#545454" stroke-width="1.300"/><rect x="1.500" y="2.500" width="21" height="5" fill="#c8c8c8" stroke="#545454" stroke-width="1.300"/><path d="M1.500 12h21M1.500 16.700h21M8.500 2.500v19M15.500 2.500v19" stroke="#545454" stroke-width="1.200"/></svg>
<svg class="abs" style="left:5px;top:599px" width="24" height="24" viewBox="0 0 24 24"><path d="M3 4h16v3M19 17h-3" fill="none" stroke="#545454" stroke-width="1"/><path d="M19 8v8M17 10l2-2.500 2 2.500M17 14.500l2 2.500 2-2.500" fill="none" stroke="#545454" stroke-width="1"/><circle cx="3" cy="4" r="2.200" fill="#1a81c4"/><circle cx="11" cy="17" r="2.200" fill="#1a81c4"/><path d="M24 17v7h-7z" fill="#000"/></svg>
<svg class="abs" style="left:5px;top:631px" width="24" height="24" viewBox="0 0 24 24"><path d="M3 1v16l4-3.500 2.700 5.800 2.600-1.200-2.700-5.700 5.400-.4z" fill="#404040"/><circle cx="16.500" cy="16.500" r="6" fill="#c8283c"/><path d="M14 14l5 5M19 14l-5 5" stroke="#fff" stroke-width="1.800"/></svg>
<svg class="abs" style="left:5px;top:671px" width="24" height="24" viewBox="0 0 24 24"><circle cx="2.5" cy="2.5" r="1.1" fill="#545454"/><circle cx="2.5" cy="7.5" r="1.1" fill="#545454"/><circle cx="2.5" cy="17.5" r="1.1" fill="#545454"/><circle cx="2.5" cy="22" r="1.1" fill="#545454"/><circle cx="7.5" cy="2.5" r="1.1" fill="#545454"/><circle cx="7.5" cy="7.5" r="1.1" fill="#545454"/><circle cx="7.5" cy="17.5" r="1.1" fill="#545454"/><circle cx="7.5" cy="22" r="1.1" fill="#545454"/><circle cx="12.5" cy="2.5" r="1.1" fill="#545454"/><circle cx="12.5" cy="7.5" r="1.1" fill="#545454"/><circle cx="12.5" cy="17.5" r="1.1" fill="#545454"/><circle cx="12.5" cy="22" r="1.1" fill="#545454"/><circle cx="17.5" cy="2.5" r="1.1" fill="#545454"/><circle cx="17.5" cy="7.5" r="1.1" fill="#545454"/><circle cx="17.5" cy="17.5" r="1.1" fill="#545454"/><circle cx="17.5" cy="22" r="1.1" fill="#545454"/><circle cx="22" cy="2.5" r="1.1" fill="#545454"/><circle cx="22" cy="7.5" r="1.1" fill="#545454"/><circle cx="22" cy="17.5" r="1.1" fill="#545454"/><circle cx="22" cy="22" r="1.1" fill="#545454"/><circle cx="2.5" cy="12.5" r="1.1" fill="#545454"/><circle cx="17.5" cy="12.5" r="1.1" fill="#545454"/><circle cx="22" cy="12.5" r="1.1" fill="#545454"/><path d="M9.500 5v15M2 12.500h15" stroke="#1a81c4" stroke-width="1.800"/><path d="M24 17v7h-7z" fill="#000"/></svg>
<svg class="abs" style="left:5px;top:703px" width="24" height="24" viewBox="0 0 24 24"><path d="M1.500 17L17 1.500l5.500 5.500L7 22.500z" fill="none" stroke="#545454" stroke-width="1.700" stroke-linejoin="round"/><path d="M6.500 15l2 2M9.500 12l2.500 2.500M12.500 9l2 2M15.500 6l2.500 2.500" stroke="#545454" stroke-width="1.200"/></svg>
<div class="abs" style="left:4px;top:70px;width:26px;height:1px;background:#a0a0a0"></div>
<div class="abs" style="left:4px;top:270px;width:26px;height:1px;background:#a0a0a0"></div>
<div class="abs" style="left:4px;top:662px;width:26px;height:1px;background:#a0a0a0"></div>
</div>
<div id="rp">
<div class="hdr" style="top:0;letter-spacing:-0.06px">Внешний вид</div>
<div class="abs" style="left:6px;top:48px;width:233px;height:593px;background:#f9f9f9;border:1px solid #e6e6e6"></div>
<div class="abs" style="left:6px;top:28px;width:46px;height:20px;background:#f3f3f3;border:1px solid #e3e3e3;border-bottom:none"></div>
<div class="abs" style="left:52px;top:28px;width:61px;height:20px;background:#f3f3f3;border:1px solid #e3e3e3;border-bottom:none"></div>
<div class="abs" style="left:112px;top:26px;width:51px;height:23px;background:#f9f9f9;border:1px solid #e6e6e6;border-bottom:none"></div>
<div class="abs" style="left:12px;top:31px;letter-spacing:-0.29px">Слои</div><div class="abs" style="left:59px;top:31px;letter-spacing:-0.21px">Объекты</div><div class="abs" style="left:120px;top:29px;letter-spacing:-0.19px">Цепи</div>
<div class="abs" style="left:12px;top:52px;letter-spacing:-0.19px">Цепи</div>
<svg class="abs" style="left:216px;top:51px" width="16" height="16" viewBox="0 0 16 16"><rect x="0.500" y="0.500" width="13" height="14" rx="2" fill="#4a4a4a"/><path d="M3 3.500h1.500M6 3.500h6M3 6.500h1.500M6 6.500h6M3 9.500h1.500M6 9.500h4M3 12.500h1.500M6 12.500h3" stroke="#f0f0f0" stroke-width="1.300"/><circle cx="12" cy="12" r="4" fill="#c8283c"/><path d="M12 9.500v1M12 11.500v3" stroke="#fff" stroke-width="1.300"/></svg>
<div class="abs" style="left:12px;top:74px;width:205px;height:271px;background:#f0f0f0;overflow:hidden">
<div class="row" style="top:0px;background:#a0a0a0"><div class="sw"></div><svg class="eye" width="15" height="15" viewBox="0 0 15 15"><circle cx="7.500" cy="7.500" r="7.500" fill="#555"/><path d="M2 7.500Q7.500 2.300 13 7.500Q7.500 12.700 2 7.500z" fill="#fff"/><circle cx="7.500" cy="7.500" r="2.300" fill="#555"/><circle cx="7.500" cy="7.500" r="1" fill="#fff"/></svg><div class="tx" style="letter-spacing:-0.54px">+15V</div></div>
<div class="row" style="top:15px"><div class="sw"></div><svg class="eye" width="15" height="15" viewBox="0 0 15 15"><circle cx="7.500" cy="7.500" r="7.500" fill="#555"/><path d="M2 7.500Q7.500 2.300 13 7.500Q7.500 12.700 2 7.500z" fill="#fff"/><circle cx="7.500" cy="7.500" r="2.300" fill="#555"/><circle cx="7.500" cy="7.500" r="1" fill="#fff"/></svg><div class="tx" style="letter-spacing:-0.48px">+3.3V</div></div>
<div class="row" style="top:30px"><div class="sw"></div><svg class="eye" width="15" height="15" viewBox="0 0 15 15"><circle cx="7.500" cy="7.500" r="7.500" fill="#555"/><path d="M2 7.500Q7.500 2.300 13 7.500Q7.500 12.700 2 7.500z" fill="#fff"/><circle cx="7.500" cy="7.500" r="2.300" fill="#555"/><circle cx="7.500" cy="7.500" r="1" fill="#fff"/></svg><div class="tx" style="letter-spacing:-0.36px">+5V</div></div>
<div class="row" style="top:45px"><div class="sw"></div><svg class="eye" width="15" height="15" viewBox="0 0 15 15"><circle cx="7.500" cy="7.500" r="7.500" fill="#555"/><path d="M2 7.500Q7.500 2.300 13 7.500Q7.500 12.700 2 7.500z" fill="#fff"/><circle cx="7.500" cy="7.500" r="2.300" fill="#555"/><circle cx="7.500" cy="7.500" r="1" fill="#fff"/></svg><div class="tx" style="letter-spacing:-0.79px">/1_WIRE</div></div>
<div class="row" style="top:60px"><div class="sw"></div><svg class="eye" width="15" height="15" viewBox="0 0 15 15"><circle cx="7.500" cy="7.500" r="7.500" fill="#555"/><path d="M2 7.500Q7.500 2.300 13 7.500Q7.500 12.700 2 7.500z" fill="#fff"/><circle cx="7.500" cy="7.500" r="2.300" fill="#555"/><circle cx="7.500" cy="7.500" r="1" fill="#fff"/></svg><div class="tx" style="letter-spacing:-0.77px">/DISPLAY_SCL</div></div>
<div class="row" style="top:75px"><div class="sw"></div><svg class="eye" width="15" height="15" viewBox="0 0 15 15"><circle cx="7.500" cy="7.500" r="7.500" fill="#555"/><path d="M2 7.500Q7.500 2.300 13 7.500Q7.500 12.700 2 7.500z" fill="#fff"/><circle cx="7.500" cy="7.500" r="2.300" fill="#555"/><circle cx="7.500" cy="7.500" r="1" fill="#fff"/></svg><div class="tx" style="letter-spacing:-0.67px">/DISPLAY_SDA</div></div>
<div class="row" style="top:90px"><div class="sw"></div><svg class="eye" width="15" height="15" viewBox="0 0 15 15"><circle cx="7.500" cy="7.500" r="7.500" fill="#555"/><path d="M2 7.500Q7.500 2.300 13 7.500Q7.500 12.700 2 7.500z" fill="#fff"/><circle cx="7.500" cy="7.500" r="2.300" fill="#555"/><circle cx="7.500" cy="7.500" r="1" fill="#fff"/></svg><div class="tx" style="letter-spacing:-0.9px">/ERROR_LED</div></div>
<div class="row" style="top:105px"><div class="sw"></div><svg class="eye" width="15" height="15" viewBox="0 0 15 15"><circle cx="7.500" cy="7.500" r="7.500" fill="#555"/><path d="M2 7.500Q7.500 2.300 13 7.500Q7.500 12.700 2 7.500z" fill="#fff"/><circle cx="7.500" cy="7.500" r="2.300" fill="#555"/><circle cx="7.500" cy="7.500" r="1" fill="#fff"/></svg><div class="tx" style="letter-spacing:-0.75px">/I2C_SCL</div></div>
<div class="row" style="top:120px"><div class="sw"></div><svg class="eye" width="15" height="15" viewBox="0 0 15 15"><circle cx="7.500" cy="7.500" r="7.500" fill="#555"/><path d="M2 7.500Q7.500 2.300 13 7.500Q7.500 12.700 2 7.500z" fill="#fff"/><circle cx="7.500" cy="7.500" r="2.300" fill="#555"/><circle cx="7.500" cy="7.500" r="1" fill="#fff"/></svg><div class="tx" style="letter-spacing:-0.61px">/I2C_SDA</div></div>
<div class="row" style="top:135px"><div class="sw"></div><svg class="eye" width="15" height="15" viewBox="0 0 15 15"><circle cx="7.500" cy="7.500" r="7.500" fill="#555"/><path d="M2 7.500Q7.500 2.300 13 7.500Q7.500 12.700 2 7.500z" fill="#fff"/><circle cx="7.500" cy="7.500" r="2.300" fill="#555"/><circle cx="7.500" cy="7.500" r="1" fill="#fff"/></svg><div class="tx" style="letter-spacing:-0.67px">/STATE_LED</div></div>
<div class="row" style="top:150px"><div class="sw"></div><svg class="eye" width="15" height="15" viewBox="0 0 15 15"><circle cx="7.500" cy="7.500" r="7.500" fill="#555"/><path d="M2 7.500Q7.500 2.300 13 7.500Q7.500 12.700 2 7.500z" fill="#fff"/><circle cx="7.500" cy="7.500" r="2.300" fill="#555"/><circle cx="7.500" cy="7.500" r="1" fill="#fff"/></svg><div class="tx" style="letter-spacing:-0.72px">/UART0_RX</div></div>
<div class="row" style="top:165px"><div class="sw"></div><svg class="eye" width="15" height="15" viewBox="0 0 15 15"><circle cx="7.500" cy="7.500" r="7.500" fill="#555"/><path d="M2 7.500Q7.500 2.300 13 7.500Q7.500 12.700 2 7.500z" fill="#fff"/><circle cx="7.500" cy="7.500" r="2.300" fill="#555"/><circle cx="7.500" cy="7.500" r="1" fill="#fff"/></svg><div class="tx" style="letter-spacing:-0.57px">/UART0_TX</div></div>
<div class="row" style="top:180px"><div class="sw"></div><svg class="eye" width="15" height="15" viewBox="0 0 15 15"><circle cx="7.500" cy="7.500" r="7.500" fill="#555"/><path d="M2 7.500Q7.500 2.300 13 7.500Q7.500 12.700 2 7.500z" fill="#fff"/><circle cx="7.500" cy="7.500" r="2.300" fill="#555"/><circle cx="7.500" cy="7.500" r="1" fill="#fff"/></svg><div class="tx" style="letter-spacing:-0.71px">/WIFI_LED</div></div>
<div class="row" style="top:195px"><div class="sw"></div><svg class="eye" width="15" height="15" viewBox="0 0 15 15"><circle cx="7.500" cy="7.500" r="7.500" fill="#555"/><path d="M2 7.500Q7.500 2.300 13 7.500Q7.500 12.700 2 7.500z" fill="#fff"/><circle cx="7.500" cy="7.500" r="2.300" fill="#555"/><circle cx="7.500" cy="7.500" r="1" fill="#fff"/></svg><div class="tx" style="letter-spacing:-0.76px">GND</div></div>
<div class="row" style="top:210px"><div class="sw"></div><svg class="eye" width="15" height="15" viewBox="0 0 15 15"><circle cx="7.500" cy="7.500" r="7.500" fill="#555"/><path d="M2 7.500Q7.500 2.300 13 7.500Q7.500 12.700 2 7.500z" fill="#fff"/><circle cx="7.500" cy="7.500" r="2.300" fill="#555"/><circle cx="7.500" cy="7.500" r="1" fill="#fff"/></svg><div class="tx" style="letter-spacing:-0.9px">GND1</div></div>
<div class="row" style="top:225px"><div class="sw"></div><svg class="eye" width="15" height="15" viewBox="0 0 15 15"><circle cx="7.500" cy="7.500" r="7.500" fill="#555"/><path d="M2 7.500Q7.500 2.300 13 7.500Q7.500 12.700 2 7.500z" fill="#fff"/><circle cx="7.500" cy="7.500" r="2.300" fill="#555"/><circle cx="7.500" cy="7.500" r="1" fill="#fff"/></svg><div class="tx" style="letter-spacing:-0.76px">GND2</div></div>
<div class="row" style="top:240px"><div class="sw"></div><svg class="eye" width="15" height="15" viewBox="0 0 15 15"><circle cx="7.500" cy="7.500" r="7.500" fill="#555"/><path d="M2 7.500Q7.500 2.300 13 7.500Q7.500 12.700 2 7.500z" fill="#fff"/><circle cx="7.500" cy="7.500" r="2.300" fill="#555"/><circle cx="7.500" cy="7.500" r="1" fill="#fff"/></svg><div class="tx" style="letter-spacing:-0.67px">GNDA</div></div>
<div class="row" style="top:255px"><div class="sw"></div><svg class="eye" width="15" height="15" viewBox="0 0 15 15"><circle cx="7.500" cy="7.500" r="7.500" fill="#555"/><path d="M2 7.500Q7.500 2.300 13 7.500Q7.500 12.700 2 7.500z" fill="#fff"/><circle cx="7.500" cy="7.500" r="2.300" fill="#555"/><circle cx="7.500" cy="7.500" r="1" fill="#fff"/></svg><div class="tx" style="letter-spacing:-0.86px">GNDPWR</div></div>
</div>
<div class="abs" style="left:225px;top:91px;width:2px;height:55px;background:#707070;border-radius:1px"></div>
<div class="abs" style="left:12px;top:356px;letter-spacing:-0.48px">Классы цепей</div>
<svg class="abs" style="left:217px;top:355px" width="16" height="16" viewBox="0 0 16 16"><path d="M1.500 1.500a4 4 0 0 0 4.500 5.500l7 7.500a1.500 1.500 0 0 0 2-2L7.500 5.500A4 4 0 0 0 3 .500l2 2.500-1 1.500-2 .2z" fill="#1a81c4"/></svg>
<div class="abs" style="left:10px;top:378px;width:200px;height:15px"><div class="row" style="top:0;letter-spacing:-0.1px"><svg class="eye" style="left:23px" width="15" height="15" viewBox="0 0 15 15"><circle cx="7.500" cy="7.500" r="7.500" fill="#555"/><path d="M2 7.500Q7.500 2.300 13 7.500Q7.500 12.700 2 7.500z" fill="#fff"/><circle cx="7.500" cy="7.500" r="2.300" fill="#555"/><circle cx="7.500" cy="7.500" r="1" fill="#fff"/></svg><div class="tx" style="left:43px;letter-spacing:-0.15px">Default</div></div></div>
<div class="abs" style="left:7px;top:619px;width:231px;height:21px;background:#fdfdfd"></div>
<svg class="abs" style="left:13px;top:621px" width="7" height="11" viewBox="0 0 7 11"><path d="M1 0.500l5 5-5 5z" fill="#444"/></svg>
<div class="abs" style="left:21px;top:620px;color:#777;letter-spacing:-0.1px">Отображение цепей</div>
<div class="abs" style="left:10px;top:654px;letter-spacing:-0.41px">Наборы слоев (Ctrl+Tab):</div>
<div class="combo" style="left:10px;top:670px;width:226px;height:22px;line-height:20px;letter-spacing:-0.24px">Все слои<svg width="11" height="7" viewBox="0 0 11 7"><path d="M1 1l4.500 4.500L10 1" fill="none" stroke="#444" stroke-width="1.100"/></svg></div>
<div class="abs" style="left:10px;top:697px;letter-spacing:-0.4px">Виды (Shift+Tab):</div>
<div class="combo" style="left:10px;top:713px;width:226px;height:22px;line-height:19px">---<svg width="11" height="7" viewBox="0 0 11 7"><path d="M1 1l4.500 4.500L10 1" fill="none" stroke="#444" stroke-width="1.100"/></svg></div>
<div class="hdr" style="top:746px;letter-spacing:-0.15px">Фильтр выделения</div>
<div class="cb" style="left:8px;top:773px"><svg width="13" height="13" viewBox="0 0 13 13"><path d="M3 6.700l2.500 2.500L10 4.300" fill="none" stroke="#fff" stroke-width="1.300"/></svg></div><div class="cbl" style="left:24px;top:772px;letter-spacing:-0.68px">Все элементы</div>
<div class="cb off" style="left:108px;top:773px"></div><div class="cbl" style="left:124px;top:772px;letter-spacing:-0.16px">Заблокированные</div>
<div class="cb" style="left:8px;top:788px"><svg width="13" height="13" viewBox="0 0 13 13"><path d="M3 6.700l2.500 2.500L10 4.300" fill="none" stroke="#fff" stroke-width="1.300"/></svg></div><div class="cbl" style="left:24px;top:787px;letter-spacing:-0.63px">Посад. места</div>
<div class="cb" style="left:108px;top:788px"><svg width="13" height="13" viewBox="0 0 13 13"><path d="M3 6.700l2.500 2.500L10 4.300" fill="none" stroke="#fff" stroke-width="1.300"/></svg></div><div class="cbl" style="left:124px;top:787px;letter-spacing:-0.74px">Текст</div>
<div class="cb" style="left:8px;top:803px"><svg width="13" height="13" viewBox="0 0 13 13"><path d="M3 6.700l2.500 2.500L10 4.300" fill="none" stroke="#fff" stroke-width="1.300"/></svg></div><div class="cbl" style="left:24px;top:802px;letter-spacing:0.27px">Дорожки</div>
<div class="cb" style="left:108px;top:803px"><svg width="13" height="13" viewBox="0 0 13 13"><path d="M3 6.700l2.500 2.500L10 4.300" fill="none" stroke="#fff" stroke-width="1.300"/></svg></div><div class="cbl" style="left:124px;top:802px;letter-spacing:-0.42px">Перех. отв.</div>
<div class="cb" style="left:8px;top:818px"><svg width="13" height="13" viewBox="0 0 13 13"><path d="M3 6.700l2.500 2.500L10 4.300" fill="none" stroke="#fff" stroke-width="1.300"/></svg></div><div class="cbl" style="left:24px;top:817px;letter-spacing:-0.22px">Конт. пл.</div>
<div class="cb" style="left:108px;top:818px"><svg width="13" height="13" viewBox="0 0 13 13"><path d="M3 6.700l2.500 2.500L10 4.300" fill="none" stroke="#fff" stroke-width="1.300"/></svg></div><div class="cbl" style="left:124px;top:817px;letter-spacing:-0.42px">Графика</div>
<div class="cb" style="left:8px;top:833px"><svg width="13" height="13" viewBox="0 0 13 13"><path d="M3 6.700l2.500 2.500L10 4.300" fill="none" stroke="#fff" stroke-width="1.300"/></svg></div><div class="cbl" style="left:24px;top:832px;letter-spacing:-0.54px">Зоны</div>
<div class="cb" style="left:108px;top:833px"><svg width="13" height="13" viewBox="0 0 13 13"><path d="M3 6.700l2.500 2.500L10 4.300" fill="none" stroke="#fff" stroke-width="1.300"/></svg></div><div class="cbl" style="left:124px;top:832px;letter-spacing:-0.34px">Области правил</div>
<div class="cb" style="left:8px;top:848px"><svg width="13" height="13" viewBox="0 0 13 13"><path d="M3 6.700l2.500 2.500L10 4.300" fill="none" stroke="#fff" stroke-width="1.300"/></svg></div><div class="cbl" style="left:24px;top:847px;letter-spacing:-0.7px">Размеры</div>
<div class="cb" style="left:108px;top:848px"><svg width="13" height="13" viewBox="0 0 13 13"><path d="M3 6.700l2.500 2.500L10 4.300" fill="none" stroke="#fff" stroke-width="1.300"/></svg></div><div class="cbl" style="left:124px;top:847px;letter-spacing:-0.33px">Прочие элементы</div>
</div>
<div id="msg">
<span style="left:11px;top:2px;letter-spacing:-0.22px">Конт. пл.</span><span style="left:11px;top:17px;letter-spacing:-0.67px">397</span>
<span style="left:89px;top:2px;letter-spacing:-0.42px">Перех. отв.</span><span style="left:89px;top:17px;letter-spacing:-0.67px">366</span>
<span style="left:178px;top:2px;letter-spacing:0.01px">Сегменты дорожек</span><span style="left:178px;top:17px;letter-spacing:-0.77px">730</span>
<span style="left:313px;top:2px;letter-spacing:-0.19px">Цепи</span><span style="left:313px;top:17px;letter-spacing:-0.9px">121</span>
<span style="left:371px;top:2px;letter-spacing:-0.31px">Не разведено</span><span style="left:371px;top:17px;letter-spacing:-0.9px">0</span>
</div>
<div id="status">
<span style="left:717px;letter-spacing:-0.45px">Z 1,94</span>
<span style="left:795px;letter-spacing:-0.55px">X 130,7500&nbsp; Y 77,7500</span>
<span style="left:955px;letter-spacing:-0.46px">dx 130,7500&nbsp; dy 77,7500&nbsp; dist 152,1204</span>
<span style="left:1205px;letter-spacing:-0.44px">сетка 0,2500</span>
<span style="left:1389px;letter-spacing:0.6px">мм</span>
<div class="abs" style="left:711px;top:5px;width:1px;height:16px;background:#dcdcdc"></div>
<div class="abs" style="left:790px;top:5px;width:1px;height:16px;background:#dcdcdc"></div>
<div class="abs" style="left:950px;top:5px;width:1px;height:16px;background:#dcdcdc"></div>
<div class="abs" style="left:1200px;top:5px;width:1px;height:16px;background:#dcdcdc"></div>
<div class="abs" style="left:1383px;top:5px;width:1px;height:16px;background:#dcdcdc"></div>
<div class="abs" style="left:1459px;top:5px;width:1px;height:16px;background:#dcdcdc"></div>
<div class="abs" style="left:1632px;top:5px;width:1px;height:16px;background:#dcdcdc"></div>
</div>
<div id="canvas"><svg width="1607" height="866" viewBox="35 112 1607 866" style="position:absolute;left:0;top:0" font-family="Liberation Sans">
<path d="M33.7 128.5H1642M33.7 145.5H1642M33.7 163.5H1642M33.7 180.5H1642M33.7 197.5H1642M33.7 214.5H1642M33.7 232.5H1642M33.7 249.5H1642M33.7 266.5H1642M33.7 284.5H1642M33.7 301.5H1642M33.7 318.5H1642M33.7 336.5H1642M33.7 353.5H1642M33.7 370.5H1642M33.7 388.5H1642M33.7 405.5H1642M33.7 422.5H1642M33.7 440.5H1642M33.7 457.5H1642M33.7 474.5H1642M33.7 492.5H1642M33.7 509.5H1642M33.7 526.5H1642M33.7 544.5H1642M33.7 561.5H1642M33.7 578.5H1642M33.7 596.5H1642M33.7 613.5H1642M33.7 630.5H1642M33.7 648.5H1642M33.7 665.5H1642M33.7 682.5H1642M33.7 700.5H1642M33.7 717.5H1642M33.7 734.5H1642M33.7 752.5H1642M33.7 769.5H1642M33.7 786.5H1642M33.7 804.5H1642M33.7 821.5H1642M33.7 838.5H1642M33.7 856.5H1642M33.7 873.5H1642M33.7 890.5H1642M33.7 908.5H1642M33.7 925.5H1642M33.7 942.5H1642M33.7 959.5H1642M33.7 977.5H1642" stroke="#5b6675" stroke-width="1" stroke-dasharray="1 16.344" fill="none" shape-rendering="crispEdges"/>
<rect x="52" y="213" width="1" height="3" fill="#5b6675"/><rect x="52" y="387" width="1" height="3" fill="#5b6675"/><rect x="52" y="560" width="1" height="3" fill="#5b6675"/><rect x="52" y="733" width="1" height="3" fill="#5b6675"/><rect x="52" y="907" width="1" height="3" fill="#5b6675"/><rect x="69" y="213" width="1" height="3" fill="#5b6675"/><rect x="69" y="387" width="1" height="3" fill="#5b6675"/><rect x="69" y="560" width="1" height="3" fill="#5b6675"/><rect x="69" y="733" width="1" height="3" fill="#5b6675"/><rect x="69" y="907" width="1" height="3" fill="#5b6675"/><rect x="86" y="213" width="1" height="3" fill="#5b6675"/><rect x="86" y="387" width="1" height="3" fill="#5b6675"/><rect x="86" y="560" width="1" height="3" fill="#5b6675"/><rect x="86" y="733" width="1" height="3" fill="#5b6675"/><rect x="86" y="907" width="1" height="3" fill="#5b6675"/><rect x="103" y="128" width="3" height="1" fill="#5b6675"/><rect x="103" y="145" width="3" height="1" fill="#5b6675"/><rect x="103" y="163" width="3" height="1" fill="#5b6675"/><rect x="103" y="180" width="3" height="1" fill="#5b6675"/><rect x="103" y="197" width="3" height="1" fill="#5b6675"/><rect x="103" y="213" width="3" height="3" fill="#7c8794"/><rect x="103" y="232" width="3" height="1" fill="#5b6675"/><rect x="103" y="249" width="3" height="1" fill="#5b6675"/><rect x="103" y="266" width="3" height="1" fill="#5b6675"/><rect x="103" y="284" width="3" height="1" fill="#5b6675"/><rect x="103" y="301" width="3" height="1" fill="#5b6675"/><rect x="103" y="318" width="3" height="1" fill="#5b6675"/><rect x="103" y="336" width="3" height="1" fill="#5b6675"/><rect x="103" y="353" width="3" height="1" fill="#5b6675"/><rect x="103" y="370" width="3" height="1" fill="#5b6675"/><rect x="103" y="387" width="3" height="3" fill="#7c8794"/><rect x="103" y="405" width="3" height="1" fill="#5b6675"/><rect x="103" y="422" width="3" height="1" fill="#5b6675"/><rect x="103" y="440" width="3" height="1" fill="#5b6675"/><rect x="103" y="457" width="3" height="1" fill="#5b6675"/><rect x="103" y="474" width="3" height="1" fill="#5b6675"/><rect x="103" y="492" width="3" height="1" fill="#5b6675"/><rect x="103" y="509" width="3" height="1" fill="#5b6675"/><rect x="103" y="526" width="3" height="1" fill="#5b6675"/><rect x="103" y="544" width="3" height="1" fill="#5b6675"/><rect x="103" y="560" width="3" height="3" fill="#7c8794"/><rect x="103" y="578" width="3" height="1" fill="#5b6675"/><rect x="103" y="596" width="3" height="1" fill="#5b6675"/><rect x="103" y="613" width="3" height="1" fill="#5b6675"/><rect x="103" y="630" width="3" height="1" fill="#5b6675"/><rect x="103" y="648" width="3" height="1" fill="#5b6675"/><rect x="103" y="665" width="3" height="1" fill="#5b6675"/><rect x="103" y="682" width="3" height="1" fill="#5b6675"/><rect x="103" y="700" width="3" height="1" fill="#5b6675"/><rect x="103" y="717" width="3" height="1" fill="#5b6675"/><rect x="103" y="733" width="3" height="3" fill="#7c8794"/><rect x="103" y="752" width="3" height="1" fill="#5b6675"/><rect x="103" y="769" width="3" height="1" fill="#5b6675"/><rect x="103" y="786" width="3" height="1" fill="#5b6675"/><rect x="103" y="804" width="3" height="1" fill="#5b6675"/><rect x="103" y="821" width="3" height="1" fill="#5b6675"/><rect x="103" y="838" width="3" height="1" fill="#5b6675"/><rect x="103" y="856" width="3" height="1" fill="#5b6675"/><rect x="103" y="873" width="3" height="1" fill="#5b6675"/><rect x="103" y="890" width="3" height="1" fill="#5b6675"/><rect x="103" y="907" width="3" height="3" fill="#7c8794"/><rect x="103" y="925" width="3" height="1" fill="#5b6675"/><rect x="103" y="942" width="3" height="1" fill="#5b6675"/><rect x="103" y="959" width="3" height="1" fill="#5b6675"/><rect x="103" y="977" width="3" height="1" fill="#5b6675"/><rect x="121" y="213" width="1" height="3" fill="#5b6675"/><rect x="121" y="387" width="1" height="3" fill="#5b6675"/><rect x="121" y="560" width="1" height="3" fill="#5b6675"/><rect x="121" y="733" width="1" height="3" fill="#5b6675"/><rect x="121" y="907" width="1" height="3" fill="#5b6675"/><rect x="138" y="213" width="1" height="3" fill="#5b6675"/><rect x="138" y="387" width="1" height="3" fill="#5b6675"/><rect x="138" y="560" width="1" height="3" fill="#5b6675"/><rect x="138" y="733" width="1" height="3" fill="#5b6675"/><rect x="138" y="907" width="1" height="3" fill="#5b6675"/><rect x="156" y="213" width="1" height="3" fill="#5b6675"/><rect x="156" y="387" width="1" height="3" fill="#5b6675"/><rect x="156" y="560" width="1" height="3" fill="#5b6675"/><rect x="156" y="733" width="1" height="3" fill="#5b6675"/><rect x="156" y="907" width="1" height="3" fill="#5b6675"/><rect x="173" y="213" width="1" height="3" fill="#5b6675"/><rect x="173" y="387" width="1" height="3" fill="#5b6675"/><rect x="173" y="560" width="1" height="3" fill="#5b6675"/><rect x="173" y="733" width="1" height="3" fill="#5b6675"/><rect x="173" y="907" width="1" height="3" fill="#5b6675"/><rect x="190" y="213" width="1" height="3" fill="#5b6675"/><rect x="190" y="387" width="1" height="3" fill="#5b6675"/><rect x="190" y="560" width="1" height="3" fill="#5b6675"/><rect x="190" y="733" width="1" height="3" fill="#5b6675"/><rect x="190" y="907" width="1" height="3" fill="#5b6675"/><rect x="208" y="213" width="1" height="3" fill="#5b6675"/><rect x="208" y="387" width="1" height="3" fill="#5b6675"/><rect x="208" y="560" width="1" height="3" fill="#5b6675"/><rect x="208" y="733" width="1" height="3" fill="#5b6675"/><rect x="208" y="907" width="1" height="3" fill="#5b6675"/><rect x="225" y="213" width="1" height="3" fill="#5b6675"/><rect x="225" y="387" width="1" height="3" fill="#5b6675"/><rect x="225" y="560" width="1" height="3" fill="#5b6675"/><rect x="225" y="733" width="1" height="3" fill="#5b6675"/><rect x="225" y="907" width="1" height="3" fill="#5b6675"/><rect x="242" y="213" width="1" height="3" fill="#5b6675"/><rect x="242" y="387" width="1" height="3" fill="#5b6675"/><rect x="242" y="560" width="1" height="3" fill="#5b6675"/><rect x="242" y="733" width="1" height="3" fill="#5b6675"/><rect x="242" y="907" width="1" height="3" fill="#5b6675"/><rect x="260" y="213" width="1" height="3" fill="#5b6675"/><rect x="260" y="387" width="1" height="3" fill="#5b6675"/><rect x="260" y="560" width="1" height="3" fill="#5b6675"/><rect x="260" y="733" width="1" height="3" fill="#5b6675"/><rect x="260" y="907" width="1" height="3" fill="#5b6675"/><rect x="276" y="128" width="3" height="1" fill="#5b6675"/><rect x="276" y="145" width="3" height="1" fill="#5b6675"/><rect x="276" y="163" width="3" height="1" fill="#5b6675"/><rect x="276" y="180" width="3" height="1" fill="#5b6675"/><rect x="276" y="197" width="3" height="1" fill="#5b6675"/><rect x="276" y="213" width="3" height="3" fill="#7c8794"/><rect x="276" y="232" width="3" height="1" fill="#5b6675"/><rect x="276" y="249" width="3" height="1" fill="#5b6675"/><rect x="276" y="266" width="3" height="1" fill="#5b6675"/><rect x="276" y="284" width="3" height="1" fill="#5b6675"/><rect x="276" y="301" width="3" height="1" fill="#5b6675"/><rect x="276" y="318" width="3" height="1" fill="#5b6675"/><rect x="276" y="336" width="3" height="1" fill="#5b6675"/><rect x="276" y="353" width="3" height="1" fill="#5b6675"/><rect x="276" y="370" width="3" height="1" fill="#5b6675"/><rect x="276" y="387" width="3" height="3" fill="#7c8794"/><rect x="276" y="405" width="3" height="1" fill="#5b6675"/><rect x="276" y="422" width="3" height="1" fill="#5b6675"/><rect x="276" y="440" width="3" height="1" fill="#5b6675"/><rect x="276" y="457" width="3" height="1" fill="#5b6675"/><rect x="276" y="474" width="3" height="1" fill="#5b6675"/><rect x="276" y="492" width="3" height="1" fill="#5b6675"/><rect x="276" y="509" width="3" height="1" fill="#5b6675"/><rect x="276" y="526" width="3" height="1" fill="#5b6675"/><rect x="276" y="544" width="3" height="1" fill="#5b6675"/><rect x="276" y="560" width="3" height="3" fill="#7c8794"/><rect x="276" y="578" width="3" height="1" fill="#5b6675"/><rect x="276" y="596" width="3" height="1" fill="#5b6675"/><rect x="276" y="613" width="3" height="1" fill="#5b6675"/><rect x="276" y="630" width="3" height="1" fill="#5b6675"/><rect x="276" y="648" width="3" height="1" fill="#5b6675"/><rect x="276" y="665" width="3" height="1" fill="#5b6675"/><rect x="276" y="682" width="3" height="1" fill="#5b6675"/><rect x="276" y="700" width="3" height="1" fill="#5b6675"/><rect x="276" y="717" width="3" height="1" fill="#5b6675"/><rect x="276" y="733" width="3" height="3" fill="#7c8794"/><rect x="276" y="752" width="3" height="1" fill="#5b6675"/><rect x="276" y="769" width="3" height="1" fill="#5b6675"/><rect x="276" y="786" width="3" height="1" fill="#5b6675"/><rect x="276" y="804" width="3" height="1" fill="#5b6675"/><rect x="276" y="821" width="3" height="1" fill="#5b6675"/><rect x="276" y="838" width="3" height="1" fill="#5b6675"/><rect x="276" y="856" width="3" height="1" fill="#5b6675"/><rect x="276" y="873" width="3" height="1" fill="#5b6675"/><rect x="276" y="890" width="3" height="1" fill="#5b6675"/><rect x="276" y="907" width="3" height="3" fill="#7c8794"/><rect x="276" y="925" width="3" height="1" fill="#5b6675"/><rect x="276" y="942" width="3" height="1" fill="#5b6675"/><rect x="276" y="959" width="3" height="1" fill="#5b6675"/><rect x="276" y="977" width="3" height="1" fill="#5b6675"/><rect x="294" y="213" width="1" height="3" fill="#5b6675"/><rect x="294" y="387" width="1" height="3" fill="#5b6675"/><rect x="294" y="560" width="1" height="3" fill="#5b6675"/><rect x="294" y="733" width="1" height="3" fill="#5b6675"/><rect x="294" y="907" width="1" height="3" fill="#5b6675"/><rect x="312" y="213" width="1" height="3" fill="#5b6675"/><rect x="312" y="387" width="1" height="3" fill="#5b6675"/><rect x="312" y="560" width="1" height="3" fill="#5b6675"/><rect x="312" y="733" width="1" height="3" fill="#5b6675"/><rect x="312" y="907" width="1" height="3" fill="#5b6675"/><rect x="329" y="213" width="1" height="3" fill="#5b6675"/><rect x="329" y="387" width="1" height="3" fill="#5b6675"/><rect x="329" y="560" width="1" height="3" fill="#5b6675"/><rect x="329" y="733" width="1" height="3" fill="#5b6675"/><rect x="329" y="907" width="1" height="3" fill="#5b6675"/><rect x="346" y="213" width="1" height="3" fill="#5b6675"/><rect x="346" y="387" width="1" height="3" fill="#5b6675"/><rect x="346" y="560" width="1" height="3" fill="#5b6675"/><rect x="346" y="733" width="1" height="3" fill="#5b6675"/><rect x="346" y="907" width="1" height="3" fill="#5b6675"/><rect x="364" y="213" width="1" height="3" fill="#5b6675"/><rect x="364" y="387" width="1" height="3" fill="#5b6675"/><rect x="364" y="560" width="1" height="3" fill="#5b6675"/><rect x="364" y="733" width="1" height="3" fill="#5b6675"/><rect x="364" y="907" width="1" height="3" fill="#5b6675"/><rect x="381" y="213" width="1" height="3" fill="#5b6675"/><rect x="381" y="387" width="1" height="3" fill="#5b6675"/><rect x="381" y="560" width="1" height="3" fill="#5b6675"/><rect x="381" y="733" width="1" height="3" fill="#5b6675"/><rect x="381" y="907" width="1" height="3" fill="#5b6675"/><rect x="398" y="213" width="1" height="3" fill="#5b6675"/><rect x="398" y="387" width="1" height="3" fill="#5b6675"/><rect x="398" y="560" width="1" height="3" fill="#5b6675"/><rect x="398" y="733" width="1" height="3" fill="#5b6675"/><rect x="398" y="907" width="1" height="3" fill="#5b6675"/><rect x="416" y="213" width="1" height="3" fill="#5b6675"/><rect x="416" y="387" width="1" height="3" fill="#5b6675"/><rect x="416" y="560" width="1" height="3" fill="#5b6675"/><rect x="416" y="733" width="1" height="3" fill="#5b6675"/><rect x="416" y="907" width="1" height="3" fill="#5b6675"/><rect x="433" y="213" width="1" height="3" fill="#5b6675"/><rect x="433" y="387" width="1" height="3" fill="#5b6675"/><rect x="433" y="560" width="1" height="3" fill="#5b6675"/><rect x="433" y="733" width="1" height="3" fill="#5b6675"/><rect x="433" y="907" width="1" height="3" fill="#5b6675"/><rect x="449" y="128" width="3" height="1" fill="#5b6675"/><rect x="449" y="145" width="3" height="1" fill="#5b6675"/><rect x="449" y="163" width="3" height="1" fill="#5b6675"/><rect x="449" y="180" width="3" height="1" fill="#5b6675"/><rect x="449" y="197" width="3" height="1" fill="#5b6675"/><rect x="449" y="213" width="3" height="3" fill="#7c8794"/><rect x="449" y="232" width="3" height="1" fill="#5b6675"/><rect x="449" y="249" width="3" height="1" fill="#5b6675"/><rect x="449" y="266" width="3" height="1" fill="#5b6675"/><rect x="449" y="284" width="3" height="1" fill="#5b6675"/><rect x="449" y="301" width="3" height="1" fill="#5b6675"/><rect x="449" y="318" width="3" height="1" fill="#5b6675"/><rect x="449" y="336" width="3" height="1" fill="#5b6675"/><rect x="449" y="353" width="3" height="1" fill="#5b6675"/><rect x="449" y="370" width="3" height="1" fill="#5b6675"/><rect x="449" y="387" width="3" height="3" fill="#7c8794"/><rect x="449" y="405" width="3" height="1" fill="#5b6675"/><rect x="449" y="422" width="3" height="1" fill="#5b6675"/><rect x="449" y="440" width="3" height="1" fill="#5b6675"/><rect x="449" y="457" width="3" height="1" fill="#5b6675"/><rect x="449" y="474" width="3" height="1" fill="#5b6675"/><rect x="449" y="492" width="3" height="1" fill="#5b6675"/><rect x="449" y="509" width="3" height="1" fill="#5b6675"/><rect x="449" y="526" width="3" height="1" fill="#5b6675"/><rect x="449" y="544" width="3" height="1" fill="#5b6675"/><rect x="449" y="560" width="3" height="3" fill="#7c8794"/><rect x="449" y="578" width="3" height="1" fill="#5b6675"/><rect x="449" y="596" width="3" height="1" fill="#5b6675"/><rect x="449" y="613" width="3" height="1" fill="#5b6675"/><rect x="449" y="630" width="3" height="1" fill="#5b6675"/><rect x="449" y="648" width="3" height="1" fill="#5b6675"/><rect x="449" y="665" width="3" height="1" fill="#5b6675"/><rect x="449" y="682" width="3" height="1" fill="#5b6675"/><rect x="449" y="700" width="3" height="1" fill="#5b6675"/><rect x="449" y="717" width="3" height="1" fill="#5b6675"/><rect x="449" y="733" width="3" height="3" fill="#7c8794"/><rect x="449" y="752" width="3" height="1" fill="#5b6675"/><rect x="449" y="769" width="3" height="1" fill="#5b6675"/><rect x="449" y="786" width="3" height="1" fill="#5b6675"/><rect x="449" y="804" width="3" height="1" fill="#5b6675"/><rect x="449" y="821" width="3" height="1" fill="#5b6675"/><rect x="449" y="838" width="3" height="1" fill="#5b6675"/><rect x="449" y="856" width="3" height="1" fill="#5b6675"/><rect x="449" y="873" width="3" height="1" fill="#5b6675"/><rect x="449" y="890" width="3" height="1" fill="#5b6675"/><rect x="449" y="907" width="3" height="3" fill="#7c8794"/><rect x="449" y="925" width="3" height="1" fill="#5b6675"/><rect x="449" y="942" width="3" height="1" fill="#5b6675"/><rect x="449" y="959" width="3" height="1" fill="#5b6675"/><rect x="449" y="977" width="3" height="1" fill="#5b6675"/><rect x="468" y="213" width="1" height="3" fill="#5b6675"/><rect x="468" y="387" width="1" height="3" fill="#5b6675"/><rect x="468" y="560" width="1" height="3" fill="#5b6675"/><rect x="468" y="733" width="1" height="3" fill="#5b6675"/><rect x="468" y="907" width="1" height="3" fill="#5b6675"/><rect x="485" y="213" width="1" height="3" fill="#5b6675"/><rect x="485" y="387" width="1" height="3" fill="#5b6675"/><rect x="485" y="560" width="1" height="3" fill="#5b6675"/><rect x="485" y="733" width="1" height="3" fill="#5b6675"/><rect x="485" y="907" width="1" height="3" fill="#5b6675"/><rect x="503" y="213" width="1" height="3" fill="#5b6675"/><rect x="503" y="387" width="1" height="3" fill="#5b6675"/><rect x="503" y="560" width="1" height="3" fill="#5b6675"/><rect x="503" y="733" width="1" height="3" fill="#5b6675"/><rect x="503" y="907" width="1" height="3" fill="#5b6675"/><rect x="520" y="213" width="1" height="3" fill="#5b6675"/><rect x="520" y="387" width="1" height="3" fill="#5b6675"/><rect x="520" y="560" width="1" height="3" fill="#5b6675"/><rect x="520" y="733" width="1" height="3" fill="#5b6675"/><rect x="520" y="907" width="1" height="3" fill="#5b6675"/><rect x="537" y="213" width="1" height="3" fill="#5b6675"/><rect x="537" y="387" width="1" height="3" fill="#5b6675"/><rect x="537" y="560" width="1" height="3" fill="#5b6675"/><rect x="537" y="733" width="1" height="3" fill="#5b6675"/><rect x="537" y="907" width="1" height="3" fill="#5b6675"/><rect x="555" y="213" width="1" height="3" fill="#5b6675"/><rect x="555" y="387" width="1" height="3" fill="#5b6675"/><rect x="555" y="560" width="1" height="3" fill="#5b6675"/><rect x="555" y="733" width="1" height="3" fill="#5b6675"/><rect x="555" y="907" width="1" height="3" fill="#5b6675"/><rect x="572" y="213" width="1" height="3" fill="#5b6675"/><rect x="572" y="387" width="1" height="3" fill="#5b6675"/><rect x="572" y="560" width="1" height="3" fill="#5b6675"/><rect x="572" y="733" width="1" height="3" fill="#5b6675"/><rect x="572" y="907" width="1" height="3" fill="#5b6675"/><rect x="589" y="213" width="1" height="3" fill="#5b6675"/><rect x="589" y="387" width="1" height="3" fill="#5b6675"/><rect x="589" y="560" width="1" height="3" fill="#5b6675"/><rect x="589" y="733" width="1" height="3" fill="#5b6675"/><rect x="589" y="907" width="1" height="3" fill="#5b6675"/><rect x="607" y="213" width="1" height="3" fill="#5b6675"/><rect x="607" y="387" width="1" height="3" fill="#5b6675"/><rect x="607" y="560" width="1" height="3" fill="#5b6675"/><rect x="607" y="733" width="1" height="3" fill="#5b6675"/><rect x="607" y="907" width="1" height="3" fill="#5b6675"/><rect x="623" y="128" width="3" height="1" fill="#5b6675"/><rect x="623" y="145" width="3" height="1" fill="#5b6675"/><rect x="623" y="163" width="3" height="1" fill="#5b6675"/><rect x="623" y="180" width="3" height="1" fill="#5b6675"/><rect x="623" y="197" width="3" height="1" fill="#5b6675"/><rect x="623" y="213" width="3" height="3" fill="#7c8794"/><rect x="623" y="232" width="3" height="1" fill="#5b6675"/><rect x="623" y="249" width="3" height="1" fill="#5b6675"/><rect x="623" y="266" width="3" height="1" fill="#5b6675"/><rect x="623" y="284" width="3" height="1" fill="#5b6675"/><rect x="623" y="301" width="3" height="1" fill="#5b6675"/><rect x="623" y="318" width="3" height="1" fill="#5b6675"/><rect x="623" y="336" width="3" height="1" fill="#5b6675"/><rect x="623" y="353" width="3" height="1" fill="#5b6675"/><rect x="623" y="370" width="3" height="1" fill="#5b6675"/><rect x="623" y="387" width="3" height="3" fill="#7c8794"/><rect x="623" y="405" width="3" height="1" fill="#5b6675"/><rect x="623" y="422" width="3" height="1" fill="#5b6675"/><rect x="623" y="440" width="3" height="1" fill="#5b6675"/><rect x="623" y="457" width="3" height="1" fill="#5b6675"/><rect x="623" y="474" width="3" height="1" fill="#5b6675"/><rect x="623" y="492" width="3" height="1" fill="#5b6675"/><rect x="623" y="509" width="3" height="1" fill="#5b6675"/><rect x="623" y="526" width="3" height="1" fill="#5b6675"/><rect x="623" y="544" width="3" height="1" fill="#5b6675"/><rect x="623" y="560" width="3" height="3" fill="#7c8794"/><rect x="623" y="578" width="3" height="1" fill="#5b6675"/><rect x="623" y="596" width="3" height="1" fill="#5b6675"/><rect x="623" y="613" width="3" height="1" fill="#5b6675"/><rect x="623" y="630" width="3" height="1" fill="#5b6675"/><rect x="623" y="648" width="3" height="1" fill="#5b6675"/><rect x="623" y="665" width="3" height="1" fill="#5b6675"/><rect x="623" y="682" width="3" height="1" fill="#5b6675"/><rect x="623" y="700" width="3" height="1" fill="#5b6675"/><rect x="623" y="717" width="3" height="1" fill="#5b6675"/><rect x="623" y="733" width="3" height="3" fill="#7c8794"/><rect x="623" y="752" width="3" height="1" fill="#5b6675"/><rect x="623" y="769" width="3" height="1" fill="#5b6675"/><rect x="623" y="786" width="3" height="1" fill="#5b6675"/><rect x="623" y="804" width="3" height="1" fill="#5b6675"/><rect x="623" y="821" width="3" height="1" fill="#5b6675"/><rect x="623" y="838" width="3" height="1" fill="#5b6675"/><rect x="623" y="856" width="3" height="1" fill="#5b6675"/><rect x="623" y="873" width="3" height="1" fill="#5b6675"/><rect x="623" y="890" width="3" height="1" fill="#5b6675"/><rect x="623" y="907" width="3" height="3" fill="#7c8794"/><rect x="623" y="925" width="3" height="1" fill="#5b6675"/><rect x="623" y="942" width="3" height="1" fill="#5b6675"/><rect x="623" y="959" width="3" height="1" fill="#5b6675"/><rect x="623" y="977" width="3" height="1" fill="#5b6675"/><rect x="641" y="213" width="1" height="3" fill="#5b6675"/><rect x="641" y="387" width="1" height="3" fill="#5b6675"/><rect x="641" y="560" width="1" height="3" fill="#5b6675"/><rect x="641" y="733" width="1" height="3" fill="#5b6675"/><rect x="641" y="907" width="1" height="3" fill="#5b6675"/><rect x="659" y="213" width="1" height="3" fill="#5b6675"/><rect x="659" y="387" width="1" height="3" fill="#5b6675"/><rect x="659" y="560" width="1" height="3" fill="#5b6675"/><rect x="659" y="733" width="1" height="3" fill="#5b6675"/><rect x="659" y="907" width="1" height="3" fill="#5b6675"/><rect x="676" y="213" width="1" height="3" fill="#5b6675"/><rect x="676" y="387" width="1" height="3" fill="#5b6675"/><rect x="676" y="560" width="1" height="3" fill="#5b6675"/><rect x="676" y="733" width="1" height="3" fill="#5b6675"/><rect x="676" y="907" width="1" height="3" fill="#5b6675"/><rect x="693" y="213" width="1" height="3" fill="#5b6675"/><rect x="693" y="387" width="1" height="3" fill="#5b6675"/><rect x="693" y="560" width="1" height="3" fill="#5b6675"/><rect x="693" y="733" width="1" height="3" fill="#5b6675"/><rect x="693" y="907" width="1" height="3" fill="#5b6675"/><rect x="711" y="213" width="1" height="3" fill="#5b6675"/><rect x="711" y="387" width="1" height="3" fill="#5b6675"/><rect x="711" y="560" width="1" height="3" fill="#5b6675"/><rect x="711" y="733" width="1" height="3" fill="#5b6675"/><rect x="711" y="907" width="1" height="3" fill="#5b6675"/><rect x="728" y="213" width="1" height="3" fill="#5b6675"/><rect x="728" y="387" width="1" height="3" fill="#5b6675"/><rect x="728" y="560" width="1" height="3" fill="#5b6675"/><rect x="728" y="733" width="1" height="3" fill="#5b6675"/><rect x="728" y="907" width="1" height="3" fill="#5b6675"/><rect x="745" y="213" width="1" height="3" fill="#5b6675"/><rect x="745" y="387" width="1" height="3" fill="#5b6675"/><rect x="745" y="560" width="1" height="3" fill="#5b6675"/><rect x="745" y="733" width="1" height="3" fill="#5b6675"/><rect x="745" y="907" width="1" height="3" fill="#5b6675"/><rect x="763" y="213" width="1" height="3" fill="#5b6675"/><rect x="763" y="387" width="1" height="3" fill="#5b6675"/><rect x="763" y="560" width="1" height="3" fill="#5b6675"/><rect x="763" y="733" width="1" height="3" fill="#5b6675"/><rect x="763" y="907" width="1" height="3" fill="#5b6675"/><rect x="780" y="213" width="1" height="3" fill="#5b6675"/><rect x="780" y="387" width="1" height="3" fill="#5b6675"/><rect x="780" y="560" width="1" height="3" fill="#5b6675"/><rect x="780" y="733" width="1" height="3" fill="#5b6675"/><rect x="780" y="907" width="1" height="3" fill="#5b6675"/><rect x="796" y="128" width="3" height="1" fill="#5b6675"/><rect x="796" y="145" width="3" height="1" fill="#5b6675"/><rect x="796" y="163" width="3" height="1" fill="#5b6675"/><rect x="796" y="180" width="3" height="1" fill="#5b6675"/><rect x="796" y="197" width="3" height="1" fill="#5b6675"/><rect x="796" y="213" width="3" height="3" fill="#7c8794"/><rect x="796" y="232" width="3" height="1" fill="#5b6675"/><rect x="796" y="249" width="3" height="1" fill="#5b6675"/><rect x="796" y="266" width="3" height="1" fill="#5b6675"/><rect x="796" y="284" width="3" height="1" fill="#5b6675"/><rect x="796" y="301" width="3" height="1" fill="#5b6675"/><rect x="796" y="318" width="3" height="1" fill="#5b6675"/><rect x="796" y="336" width="3" height="1" fill="#5b6675"/><rect x="796" y="353" width="3" height="1" fill="#5b6675"/><rect x="796" y="370" width="3" height="1" fill="#5b6675"/><rect x="796" y="387" width="3" height="3" fill="#7c8794"/><rect x="796" y="405" width="3" height="1" fill="#5b6675"/><rect x="796" y="422" width="3" height="1" fill="#5b6675"/><rect x="796" y="440" width="3" height="1" fill="#5b6675"/><rect x="796" y="457" width="3" height="1" fill="#5b6675"/><rect x="796" y="474" width="3" height="1" fill="#5b6675"/><rect x="796" y="492" width="3" height="1" fill="#5b6675"/><rect x="796" y="509" width="3" height="1" fill="#5b6675"/><rect x="796" y="526" width="3" height="1" fill="#5b6675"/><rect x="796" y="544" width="3" height="1" fill="#5b6675"/><rect x="796" y="560" width="3" height="3" fill="#7c8794"/><rect x="796" y="578" width="3" height="1" fill="#5b6675"/><rect x="796" y="596" width="3" height="1" fill="#5b6675"/><rect x="796" y="613" width="3" height="1" fill="#5b6675"/><rect x="796" y="630" width="3" height="1" fill="#5b6675"/><rect x="796" y="648" width="3" height="1" fill="#5b6675"/><rect x="796" y="665" width="3" height="1" fill="#5b6675"/><rect x="796" y="682" width="3" height="1" fill="#5b6675"/><rect x="796" y="700" width="3" height="1" fill="#5b6675"/><rect x="796" y="717" width="3" height="1" fill="#5b6675"/><rect x="796" y="733" width="3" height="3" fill="#7c8794"/><rect x="796" y="752" width="3" height="1" fill="#5b6675"/><rect x="796" y="769" width="3" height="1" fill="#5b6675"/><rect x="796" y="786" width="3" height="1" fill="#5b6675"/><rect x="796" y="804" width="3" height="1" fill="#5b6675"/><rect x="796" y="821" width="3" height="1" fill="#5b6675"/><rect x="796" y="838" width="3" height="1" fill="#5b6675"/><rect x="796" y="856" width="3" height="1" fill="#5b6675"/><rect x="796" y="873" width="3" height="1" fill="#5b6675"/><rect x="796" y="890" width="3" height="1" fill="#5b6675"/><rect x="796" y="907" width="3" height="3" fill="#7c8794"/><rect x="796" y="925" width="3" height="1" fill="#5b6675"/><rect x="796" y="942" width="3" height="1" fill="#5b6675"/><rect x="796" y="959" width="3" height="1" fill="#5b6675"/><rect x="796" y="977" width="3" height="1" fill="#5b6675"/><rect x="815" y="213" width="1" height="3" fill="#5b6675"/><rect x="815" y="387" width="1" height="3" fill="#5b6675"/><rect x="815" y="560" width="1" height="3" fill="#5b6675"/><rect x="815" y="733" width="1" height="3" fill="#5b6675"/><rect x="815" y="907" width="1" height="3" fill="#5b6675"/><rect x="832" y="213" width="1" height="3" fill="#5b6675"/><rect x="832" y="387" width="1" height="3" fill="#5b6675"/><rect x="832" y="560" width="1" height="3" fill="#5b6675"/><rect x="832" y="733" width="1" height="3" fill="#5b6675"/><rect x="832" y="907" width="1" height="3" fill="#5b6675"/><rect x="849" y="213" width="1" height="3" fill="#5b6675"/><rect x="849" y="387" width="1" height="3" fill="#5b6675"/><rect x="849" y="560" width="1" height="3" fill="#5b6675"/><rect x="849" y="733" width="1" height="3" fill="#5b6675"/><rect x="849" y="907" width="1" height="3" fill="#5b6675"/><rect x="867" y="213" width="1" height="3" fill="#5b6675"/><rect x="867" y="387" width="1" height="3" fill="#5b6675"/><rect x="867" y="560" width="1" height="3" fill="#5b6675"/><rect x="867" y="733" width="1" height="3" fill="#5b6675"/><rect x="867" y="907" width="1" height="3" fill="#5b6675"/><rect x="884" y="213" width="1" height="3" fill="#5b6675"/><rect x="884" y="387" width="1" height="3" fill="#5b6675"/><rect x="884" y="560" width="1" height="3" fill="#5b6675"/><rect x="884" y="733" width="1" height="3" fill="#5b6675"/><rect x="884" y="907" width="1" height="3" fill="#5b6675"/><rect x="901" y="213" width="1" height="3" fill="#5b6675"/><rect x="901" y="387" width="1" height="3" fill="#5b6675"/><rect x="901" y="560" width="1" height="3" fill="#5b6675"/><rect x="901" y="733" width="1" height="3" fill="#5b6675"/><rect x="901" y="907" width="1" height="3" fill="#5b6675"/><rect x="919" y="213" width="1" height="3" fill="#5b6675"/><rect x="919" y="387" width="1" height="3" fill="#5b6675"/><rect x="919" y="560" width="1" height="3" fill="#5b6675"/><rect x="919" y="733" width="1" height="3" fill="#5b6675"/><rect x="919" y="907" width="1" height="3" fill="#5b6675"/><rect x="936" y="213" width="1" height="3" fill="#5b6675"/><rect x="936" y="387" width="1" height="3" fill="#5b6675"/><rect x="936" y="560" width="1" height="3" fill="#5b6675"/><rect x="936" y="733" width="1" height="3" fill="#5b6675"/><rect x="936" y="907" width="1" height="3" fill="#5b6675"/><rect x="953" y="213" width="1" height="3" fill="#5b6675"/><rect x="953" y="387" width="1" height="3" fill="#5b6675"/><rect x="953" y="560" width="1" height="3" fill="#5b6675"/><rect x="953" y="733" width="1" height="3" fill="#5b6675"/><rect x="953" y="907" width="1" height="3" fill="#5b6675"/><rect x="970" y="128" width="3" height="1" fill="#5b6675"/><rect x="970" y="145" width="3" height="1" fill="#5b6675"/><rect x="970" y="163" width="3" height="1" fill="#5b6675"/><rect x="970" y="180" width="3" height="1" fill="#5b6675"/><rect x="970" y="197" width="3" height="1" fill="#5b6675"/><rect x="970" y="213" width="3" height="3" fill="#7c8794"/><rect x="970" y="232" width="3" height="1" fill="#5b6675"/><rect x="970" y="249" width="3" height="1" fill="#5b6675"/><rect x="970" y="266" width="3" height="1" fill="#5b6675"/><rect x="970" y="284" width="3" height="1" fill="#5b6675"/><rect x="970" y="301" width="3" height="1" fill="#5b6675"/><rect x="970" y="318" width="3" height="1" fill="#5b6675"/><rect x="970" y="336" width="3" height="1" fill="#5b6675"/><rect x="970" y="353" width="3" height="1" fill="#5b6675"/><rect x="970" y="370" width="3" height="1" fill="#5b6675"/><rect x="970" y="387" width="3" height="3" fill="#7c8794"/><rect x="970" y="405" width="3" height="1" fill="#5b6675"/><rect x="970" y="422" width="3" height="1" fill="#5b6675"/><rect x="970" y="440" width="3" height="1" fill="#5b6675"/><rect x="970" y="457" width="3" height="1" fill="#5b6675"/><rect x="970" y="474" width="3" height="1" fill="#5b6675"/><rect x="970" y="492" width="3" height="1" fill="#5b6675"/><rect x="970" y="509" width="3" height="1" fill="#5b6675"/><rect x="970" y="526" width="3" height="1" fill="#5b6675"/><rect x="970" y="544" width="3" height="1" fill="#5b6675"/><rect x="970" y="560" width="3" height="3" fill="#7c8794"/><rect x="970" y="578" width="3" height="1" fill="#5b6675"/><rect x="970" y="596" width="3" height="1" fill="#5b6675"/><rect x="970" y="613" width="3" height="1" fill="#5b6675"/><rect x="970" y="630" width="3" height="1" fill="#5b6675"/><rect x="970" y="648" width="3" height="1" fill="#5b6675"/><rect x="970" y="665" width="3" height="1" fill="#5b6675"/><rect x="970" y="682" width="3" height="1" fill="#5b6675"/><rect x="970" y="700" width="3" height="1" fill="#5b6675"/><rect x="970" y="717" width="3" height="1" fill="#5b6675"/><rect x="970" y="733" width="3" height="3" fill="#7c8794"/><rect x="970" y="752" width="3" height="1" fill="#5b6675"/><rect x="970" y="769" width="3" height="1" fill="#5b6675"/><rect x="970" y="786" width="3" height="1" fill="#5b6675"/><rect x="970" y="804" width="3" height="1" fill="#5b6675"/><rect x="970" y="821" width="3" height="1" fill="#5b6675"/><rect x="970" y="838" width="3" height="1" fill="#5b6675"/><rect x="970" y="856" width="3" height="1" fill="#5b6675"/><rect x="970" y="873" width="3" height="1" fill="#5b6675"/><rect x="970" y="890" width="3" height="1" fill="#5b6675"/><rect x="970" y="907" width="3" height="3" fill="#7c8794"/><rect x="970" y="925" width="3" height="1" fill="#5b6675"/><rect x="970" y="942" width="3" height="1" fill="#5b6675"/><rect x="970" y="959" width="3" height="1" fill="#5b6675"/><rect x="970" y="977" width="3" height="1" fill="#5b6675"/><rect x="988" y="213" width="1" height="3" fill="#5b6675"/><rect x="988" y="387" width="1" height="3" fill="#5b6675"/><rect x="988" y="560" width="1" height="3" fill="#5b6675"/><rect x="988" y="733" width="1" height="3" fill="#5b6675"/><rect x="988" y="907" width="1" height="3" fill="#5b6675"/><rect x="1006" y="213" width="1" height="3" fill="#5b6675"/><rect x="1006" y="387" width="1" height="3" fill="#5b6675"/><rect x="1006" y="560" width="1" height="3" fill="#5b6675"/><rect x="1006" y="733" width="1" height="3" fill="#5b6675"/><rect x="1006" y="907" width="1" height="3" fill="#5b6675"/><rect x="1023" y="213" width="1" height="3" fill="#5b6675"/><rect x="1023" y="387" width="1" height="3" fill="#5b6675"/><rect x="1023" y="560" width="1" height="3" fill="#5b6675"/><rect x="1023" y="733" width="1" height="3" fill="#5b6675"/><rect x="1023" y="907" width="1" height="3" fill="#5b6675"/><rect x="1040" y="213" width="1" height="3" fill="#5b6675"/><rect x="1040" y="387" width="1" height="3" fill="#5b6675"/><rect x="1040" y="560" width="1" height="3" fill="#5b6675"/><rect x="1040" y="733" width="1" height="3" fill="#5b6675"/><rect x="1040" y="907" width="1" height="3" fill="#5b6675"/><rect x="1058" y="213" width="1" height="3" fill="#5b6675"/><rect x="1058" y="387" width="1" height="3" fill="#5b6675"/><rect x="1058" y="560" width="1" height="3" fill="#5b6675"/><rect x="1058" y="733" width="1" height="3" fill="#5b6675"/><rect x="1058" y="907" width="1" height="3" fill="#5b6675"/><rect x="1075" y="213" width="1" height="3" fill="#5b6675"/><rect x="1075" y="387" width="1" height="3" fill="#5b6675"/><rect x="1075" y="560" width="1" height="3" fill="#5b6675"/><rect x="1075" y="733" width="1" height="3" fill="#5b6675"/><rect x="1075" y="907" width="1" height="3" fill="#5b6675"/><rect x="1092" y="213" width="1" height="3" fill="#5b6675"/><rect x="1092" y="387" width="1" height="3" fill="#5b6675"/><rect x="1092" y="560" width="1" height="3" fill="#5b6675"/><rect x="1092" y="733" width="1" height="3" fill="#5b6675"/><rect x="1092" y="907" width="1" height="3" fill="#5b6675"/><rect x="1110" y="213" width="1" height="3" fill="#5b6675"/><rect x="1110" y="387" width="1" height="3" fill="#5b6675"/><rect x="1110" y="560" width="1" height="3" fill="#5b6675"/><rect x="1110" y="733" width="1" height="3" fill="#5b6675"/><rect x="1110" y="907" width="1" height="3" fill="#5b6675"/><rect x="1127" y="213" width="1" height="3" fill="#5b6675"/><rect x="1127" y="387" width="1" height="3" fill="#5b6675"/><rect x="1127" y="560" width="1" height="3" fill="#5b6675"/><rect x="1127" y="733" width="1" height="3" fill="#5b6675"/><rect x="1127" y="907" width="1" height="3" fill="#5b6675"/><rect x="1143" y="128" width="3" height="1" fill="#5b6675"/><rect x="1143" y="145" width="3" height="1" fill="#5b6675"/><rect x="1143" y="163" width="3" height="1" fill="#5b6675"/><rect x="1143" y="180" width="3" height="1" fill="#5b6675"/><rect x="1143" y="197" width="3" height="1" fill="#5b6675"/><rect x="1143" y="213" width="3" height="3" fill="#7c8794"/><rect x="1143" y="232" width="3" height="1" fill="#5b6675"/><rect x="1143" y="249" width="3" height="1" fill="#5b6675"/><rect x="1143" y="266" width="3" height="1" fill="#5b6675"/><rect x="1143" y="284" width="3" height="1" fill="#5b6675"/><rect x="1143" y="301" width="3" height="1" fill="#5b6675"/><rect x="1143" y="318" width="3" height="1" fill="#5b6675"/><rect x="1143" y="336" width="3" height="1" fill="#5b6675"/><rect x="1143" y="353" width="3" height="1" fill="#5b6675"/><rect x="1143" y="370" width="3" height="1" fill="#5b6675"/><rect x="1143" y="387" width="3" height="3" fill="#7c8794"/><rect x="1143" y="405" width="3" height="1" fill="#5b6675"/><rect x="1143" y="422" width="3" height="1" fill="#5b6675"/><rect x="1143" y="440" width="3" height="1" fill="#5b6675"/><rect x="1143" y="457" width="3" height="1" fill="#5b6675"/><rect x="1143" y="474" width="3" height="1" fill="#5b6675"/><rect x="1143" y="492" width="3" height="1" fill="#5b6675"/><rect x="1143" y="509" width="3" height="1" fill="#5b6675"/><rect x="1143" y="526" width="3" height="1" fill="#5b6675"/><rect x="1143" y="544" width="3" height="1" fill="#5b6675"/><rect x="1143" y="560" width="3" height="3" fill="#7c8794"/><rect x="1143" y="578" width="3" height="1" fill="#5b6675"/><rect x="1143" y="596" width="3" height="1" fill="#5b6675"/><rect x="1143" y="613" width="3" height="1" fill="#5b6675"/><rect x="1143" y="630" width="3" height="1" fill="#5b6675"/><rect x="1143" y="648" width="3" height="1" fill="#5b6675"/><rect x="1143" y="665" width="3" height="1" fill="#5b6675"/><rect x="1143" y="682" width="3" height="1" fill="#5b6675"/><rect x="1143" y="700" width="3" height="1" fill="#5b6675"/><rect x="1143" y="717" width="3" height="1" fill="#5b6675"/><rect x="1143" y="733" width="3" height="3" fill="#7c8794"/><rect x="1143" y="752" width="3" height="1" fill="#5b6675"/><rect x="1143" y="769" width="3" height="1" fill="#5b6675"/><rect x="1143" y="786" width="3" height="1" fill="#5b6675"/><rect x="1143" y="804" width="3" height="1" fill="#5b6675"/><rect x="1143" y="821" width="3" height="1" fill="#5b6675"/><rect x="1143" y="838" width="3" height="1" fill="#5b6675"/><rect x="1143" y="856" width="3" height="1" fill="#5b6675"/><rect x="1143" y="873" width="3" height="1" fill="#5b6675"/><rect x="1143" y="890" width="3" height="1" fill="#5b6675"/><rect x="1143" y="907" width="3" height="3" fill="#7c8794"/><rect x="1143" y="925" width="3" height="1" fill="#5b6675"/><rect x="1143" y="942" width="3" height="1" fill="#5b6675"/><rect x="1143" y="959" width="3" height="1" fill="#5b6675"/><rect x="1143" y="977" width="3" height="1" fill="#5b6675"/><rect x="1162" y="213" width="1" height="3" fill="#5b6675"/><rect x="1162" y="387" width="1" height="3" fill="#5b6675"/><rect x="1162" y="560" width="1" height="3" fill="#5b6675"/><rect x="1162" y="733" width="1" height="3" fill="#5b6675"/><rect x="1162" y="907" width="1" height="3" fill="#5b6675"/><rect x="1179" y="213" width="1" height="3" fill="#5b6675"/><rect x="1179" y="387" width="1" height="3" fill="#5b6675"/><rect x="1179" y="560" width="1" height="3" fill="#5b6675"/><rect x="1179" y="733" width="1" height="3" fill="#5b6675"/><rect x="1179" y="907" width="1" height="3" fill="#5b6675"/><rect x="1196" y="213" width="1" height="3" fill="#5b6675"/><rect x="1196" y="387" width="1" height="3" fill="#5b6675"/><rect x="1196" y="560" width="1" height="3" fill="#5b6675"/><rect x="1196" y="733" width="1" height="3" fill="#5b6675"/><rect x="1196" y="907" width="1" height="3" fill="#5b6675"/><rect x="1214" y="213" width="1" height="3" fill="#5b6675"/><rect x="1214" y="387" width="1" height="3" fill="#5b6675"/><rect x="1214" y="560" width="1" height="3" fill="#5b6675"/><rect x="1214" y="733" width="1" height="3" fill="#5b6675"/><rect x="1214" y="907" width="1" height="3" fill="#5b6675"/><rect x="1231" y="213" width="1" height="3" fill="#5b6675"/><rect x="1231" y="387" width="1" height="3" fill="#5b6675"/><rect x="1231" y="560" width="1" height="3" fill="#5b6675"/><rect x="1231" y="733" width="1" height="3" fill="#5b6675"/><rect x="1231" y="907" width="1" height="3" fill="#5b6675"/><rect x="1248" y="213" width="1" height="3" fill="#5b6675"/><rect x="1248" y="387" width="1" height="3" fill="#5b6675"/><rect x="1248" y="560" width="1" height="3" fill="#5b6675"/><rect x="1248" y="733" width="1" height="3" fill="#5b6675"/><rect x="1248" y="907" width="1" height="3" fill="#5b6675"/><rect x="1266" y="213" width="1" height="3" fill="#5b6675"/><rect x="1266" y="387" width="1" height="3" fill="#5b6675"/><rect x="1266" y="560" width="1" height="3" fill="#5b6675"/><rect x="1266" y="733" width="1" height="3" fill="#5b6675"/><rect x="1266" y="907" width="1" height="3" fill="#5b6675"/><rect x="1283" y="213" width="1" height="3" fill="#5b6675"/><rect x="1283" y="387" width="1" height="3" fill="#5b6675"/><rect x="1283" y="560" width="1" height="3" fill="#5b6675"/><rect x="1283" y="733" width="1" height="3" fill="#5b6675"/><rect x="1283" y="907" width="1" height="3" fill="#5b6675"/><rect x="1300" y="213" width="1" height="3" fill="#5b6675"/><rect x="1300" y="387" width="1" height="3" fill="#5b6675"/><rect x="1300" y="560" width="1" height="3" fill="#5b6675"/><rect x="1300" y="733" width="1" height="3" fill="#5b6675"/><rect x="1300" y="907" width="1" height="3" fill="#5b6675"/><rect x="1317" y="128" width="3" height="1" fill="#5b6675"/><rect x="1317" y="145" width="3" height="1" fill="#5b6675"/><rect x="1317" y="163" width="3" height="1" fill="#5b6675"/><rect x="1317" y="180" width="3" height="1" fill="#5b6675"/><rect x="1317" y="197" width="3" height="1" fill="#5b6675"/><rect x="1317" y="213" width="3" height="3" fill="#7c8794"/><rect x="1317" y="232" width="3" height="1" fill="#5b6675"/><rect x="1317" y="249" width="3" height="1" fill="#5b6675"/><rect x="1317" y="266" width="3" height="1" fill="#5b6675"/><rect x="1317" y="284" width="3" height="1" fill="#5b6675"/><rect x="1317" y="301" width="3" height="1" fill="#5b6675"/><rect x="1317" y="318" width="3" height="1" fill="#5b6675"/><rect x="1317" y="336" width="3" height="1" fill="#5b6675"/><rect x="1317" y="353" width="3" height="1" fill="#5b6675"/><rect x="1317" y="370" width="3" height="1" fill="#5b6675"/><rect x="1317" y="387" width="3" height="3" fill="#7c8794"/><rect x="1317" y="405" width="3" height="1" fill="#5b6675"/><rect x="1317" y="422" width="3" height="1" fill="#5b6675"/><rect x="1317" y="440" width="3" height="1" fill="#5b6675"/><rect x="1317" y="457" width="3" height="1" fill="#5b6675"/><rect x="1317" y="474" width="3" height="1" fill="#5b6675"/><rect x="1317" y="492" width="3" height="1" fill="#5b6675"/><rect x="1317" y="509" width="3" height="1" fill="#5b6675"/><rect x="1317" y="526" width="3" height="1" fill="#5b6675"/><rect x="1317" y="544" width="3" height="1" fill="#5b6675"/><rect x="1317" y="560" width="3" height="3" fill="#7c8794"/><rect x="1317" y="578" width="3" height="1" fill="#5b6675"/><rect x="1317" y="596" width="3" height="1" fill="#5b6675"/><rect x="1317" y="613" width="3" height="1" fill="#5b6675"/><rect x="1317" y="630" width="3" height="1" fill="#5b6675"/><rect x="1317" y="648" width="3" height="1" fill="#5b6675"/><rect x="1317" y="665" width="3" height="1" fill="#5b6675"/><rect x="1317" y="682" width="3" height="1" fill="#5b6675"/><rect x="1317" y="700" width="3" height="1" fill="#5b6675"/><rect x="1317" y="717" width="3" height="1" fill="#5b6675"/><rect x="1317" y="733" width="3" height="3" fill="#7c8794"/><rect x="1317" y="752" width="3" height="1" fill="#5b6675"/><rect x="1317" y="769" width="3" height="1" fill="#5b6675"/><rect x="1317" y="786" width="3" height="1" fill="#5b6675"/><rect x="1317" y="804" width="3" height="1" fill="#5b6675"/><rect x="1317" y="821" width="3" height="1" fill="#5b6675"/><rect x="1317" y="838" width="3" height="1" fill="#5b6675"/><rect x="1317" y="856" width="3" height="1" fill="#5b6675"/><rect x="1317" y="873" width="3" height="1" fill="#5b6675"/><rect x="1317" y="890" width="3" height="1" fill="#5b6675"/><rect x="1317" y="907" width="3" height="3" fill="#7c8794"/><rect x="1317" y="925" width="3" height="1" fill="#5b6675"/><rect x="1317" y="942" width="3" height="1" fill="#5b6675"/><rect x="1317" y="959" width="3" height="1" fill="#5b6675"/><rect x="1317" y="977" width="3" height="1" fill="#5b6675"/><rect x="1335" y="213" width="1" height="3" fill="#5b6675"/><rect x="1335" y="387" width="1" height="3" fill="#5b6675"/><rect x="1335" y="560" width="1" height="3" fill="#5b6675"/><rect x="1335" y="733" width="1" height="3" fill="#5b6675"/><rect x="1335" y="907" width="1" height="3" fill="#5b6675"/><rect x="1352" y="213" width="1" height="3" fill="#5b6675"/><rect x="1352" y="387" width="1" height="3" fill="#5b6675"/><rect x="1352" y="560" width="1" height="3" fill="#5b6675"/><rect x="1352" y="733" width="1" height="3" fill="#5b6675"/><rect x="1352" y="907" width="1" height="3" fill="#5b6675"/><rect x="1370" y="213" width="1" height="3" fill="#5b6675"/><rect x="1370" y="387" width="1" height="3" fill="#5b6675"/><rect x="1370" y="560" width="1" height="3" fill="#5b6675"/><rect x="1370" y="733" width="1" height="3" fill="#5b6675"/><rect x="1370" y="907" width="1" height="3" fill="#5b6675"/><rect x="1387" y="213" width="1" height="3" fill="#5b6675"/><rect x="1387" y="387" width="1" height="3" fill="#5b6675"/><rect x="1387" y="560" width="1" height="3" fill="#5b6675"/><rect x="1387" y="733" width="1" height="3" fill="#5b6675"/><rect x="1387" y="907" width="1" height="3" fill="#5b6675"/><rect x="1404" y="213" width="1" height="3" fill="#5b6675"/><rect x="1404" y="387" width="1" height="3" fill="#5b6675"/><rect x="1404" y="560" width="1" height="3" fill="#5b6675"/><rect x="1404" y="733" width="1" height="3" fill="#5b6675"/><rect x="1404" y="907" width="1" height="3" fill="#5b6675"/><rect x="1422" y="213" width="1" height="3" fill="#5b6675"/><rect x="1422" y="387" width="1" height="3" fill="#5b6675"/><rect x="1422" y="560" width="1" height="3" fill="#5b6675"/><rect x="1422" y="733" width="1" height="3" fill="#5b6675"/><rect x="1422" y="907" width="1" height="3" fill="#5b6675"/><rect x="1439" y="213" width="1" height="3" fill="#5b6675"/><rect x="1439" y="387" width="1" height="3" fill="#5b6675"/><rect x="1439" y="560" width="1" height="3" fill="#5b6675"/><rect x="1439" y="733" width="1" height="3" fill="#5b6675"/><rect x="1439" y="907" width="1" height="3" fill="#5b6675"/><rect x="1456" y="213" width="1" height="3" fill="#5b6675"/><rect x="1456" y="387" width="1" height="3" fill="#5b6675"/><rect x="1456" y="560" width="1" height="3" fill="#5b6675"/><rect x="1456" y="733" width="1" height="3" fill="#5b6675"/><rect x="1456" y="907" width="1" height="3" fill="#5b6675"/><rect x="1474" y="213" width="1" height="3" fill="#5b6675"/><rect x="1474" y="387" width="1" height="3" fill="#5b6675"/><rect x="1474" y="560" width="1" height="3" fill="#5b6675"/><rect x="1474" y="733" width="1" height="3" fill="#5b6675"/><rect x="1474" y="907" width="1" height="3" fill="#5b6675"/><rect x="1490" y="128" width="3" height="1" fill="#5b6675"/><rect x="1490" y="145" width="3" height="1" fill="#5b6675"/><rect x="1490" y="163" width="3" height="1" fill="#5b6675"/><rect x="1490" y="180" width="3" height="1" fill="#5b6675"/><rect x="1490" y="197" width="3" height="1" fill="#5b6675"/><rect x="1490" y="213" width="3" height="3" fill="#7c8794"/><rect x="1490" y="232" width="3" height="1" fill="#5b6675"/><rect x="1490" y="249" width="3" height="1" fill="#5b6675"/><rect x="1490" y="266" width="3" height="1" fill="#5b6675"/><rect x="1490" y="284" width="3" height="1" fill="#5b6675"/><rect x="1490" y="301" width="3" height="1" fill="#5b6675"/><rect x="1490" y="318" width="3" height="1" fill="#5b6675"/><rect x="1490" y="336" width="3" height="1" fill="#5b6675"/><rect x="1490" y="353" width="3" height="1" fill="#5b6675"/><rect x="1490" y="370" width="3" height="1" fill="#5b6675"/><rect x="1490" y="387" width="3" height="3" fill="#7c8794"/><rect x="1490" y="405" width="3" height="1" fill="#5b6675"/><rect x="1490" y="422" width="3" height="1" fill="#5b6675"/><rect x="1490" y="440" width="3" height="1" fill="#5b6675"/><rect x="1490" y="457" width="3" height="1" fill="#5b6675"/><rect x="1490" y="474" width="3" height="1" fill="#5b6675"/><rect x="1490" y="492" width="3" height="1" fill="#5b6675"/><rect x="1490" y="509" width="3" height="1" fill="#5b6675"/><rect x="1490" y="526" width="3" height="1" fill="#5b6675"/><rect x="1490" y="544" width="3" height="1" fill="#5b6675"/><rect x="1490" y="560" width="3" height="3" fill="#7c8794"/><rect x="1490" y="578" width="3" height="1" fill="#5b6675"/><rect x="1490" y="596" width="3" height="1" fill="#5b6675"/><rect x="1490" y="613" width="3" height="1" fill="#5b6675"/><rect x="1490" y="630" width="3" height="1" fill="#5b6675"/><rect x="1490" y="648" width="3" height="1" fill="#5b6675"/><rect x="1490" y="665" width="3" height="1" fill="#5b6675"/><rect x="1490" y="682" width="3" height="1" fill="#5b6675"/><rect x="1490" y="700" width="3" height="1" fill="#5b6675"/><rect x="1490" y="717" width="3" height="1" fill="#5b6675"/><rect x="1490" y="733" width="3" height="3" fill="#7c8794"/><rect x="1490" y="752" width="3" height="1" fill="#5b6675"/><rect x="1490" y="769" width="3" height="1" fill="#5b6675"/><rect x="1490" y="786" width="3" height="1" fill="#5b6675"/><rect x="1490" y="804" width="3" height="1" fill="#5b6675"/><rect x="1490" y="821" width="3" height="1" fill="#5b6675"/><rect x="1490" y="838" width="3" height="1" fill="#5b6675"/><rect x="1490" y="856" width="3" height="1" fill="#5b6675"/><rect x="1490" y="873" width="3" height="1" fill="#5b6675"/><rect x="1490" y="890" width="3" height="1" fill="#5b6675"/><rect x="1490" y="907" width="3" height="3" fill="#7c8794"/><rect x="1490" y="925" width="3" height="1" fill="#5b6675"/><rect x="1490" y="942" width="3" height="1" fill="#5b6675"/><rect x="1490" y="959" width="3" height="1" fill="#5b6675"/><rect x="1490" y="977" width="3" height="1" fill="#5b6675"/><rect x="1508" y="213" width="1" height="3" fill="#5b6675"/><rect x="1508" y="387" width="1" height="3" fill="#5b6675"/><rect x="1508" y="560" width="1" height="3" fill="#5b6675"/><rect x="1508" y="733" width="1" height="3" fill="#5b6675"/><rect x="1508" y="907" width="1" height="3" fill="#5b6675"/><rect x="1526" y="213" width="1" height="3" fill="#5b6675"/><rect x="1526" y="387" width="1" height="3" fill="#5b6675"/><rect x="1526" y="560" width="1" height="3" fill="#5b6675"/><rect x="1526" y="733" width="1" height="3" fill="#5b6675"/><rect x="1526" y="907" width="1" height="3" fill="#5b6675"/><rect x="1543" y="213" width="1" height="3" fill="#5b6675"/><rect x="1543" y="387" width="1" height="3" fill="#5b6675"/><rect x="1543" y="560" width="1" height="3" fill="#5b6675"/><rect x="1543" y="733" width="1" height="3" fill="#5b6675"/><rect x="1543" y="907" width="1" height="3" fill="#5b6675"/><rect x="1561" y="213" width="1" height="3" fill="#5b6675"/><rect x="1561" y="387" width="1" height="3" fill="#5b6675"/><rect x="1561" y="560" width="1" height="3" fill="#5b6675"/><rect x="1561" y="733" width="1" height="3" fill="#5b6675"/><rect x="1561" y="907" width="1" height="3" fill="#5b6675"/><rect x="1578" y="213" width="1" height="3" fill="#5b6675"/><rect x="1578" y="387" width="1" height="3" fill="#5b6675"/><rect x="1578" y="560" width="1" height="3" fill="#5b6675"/><rect x="1578" y="733" width="1" height="3" fill="#5b6675"/><rect x="1578" y="907" width="1" height="3" fill="#5b6675"/><rect x="1595" y="213" width="1" height="3" fill="#5b6675"/><rect x="1595" y="387" width="1" height="3" fill="#5b6675"/><rect x="1595" y="560" width="1" height="3" fill="#5b6675"/><rect x="1595" y="733" width="1" height="3" fill="#5b6675"/><rect x="1595" y="907" width="1" height="3" fill="#5b6675"/><rect x="1613" y="213" width="1" height="3" fill="#5b6675"/><rect x="1613" y="387" width="1" height="3" fill="#5b6675"/><rect x="1613" y="560" width="1" height="3" fill="#5b6675"/><rect x="1613" y="733" width="1" height="3" fill="#5b6675"/><rect x="1613" y="907" width="1" height="3" fill="#5b6675"/><rect x="1630" y="213" width="1" height="3" fill="#5b6675"/><rect x="1630" y="387" width="1" height="3" fill="#5b6675"/><rect x="1630" y="560" width="1" height="3" fill="#5b6675"/><rect x="1630" y="733" width="1" height="3" fill="#5b6675"/><rect x="1630" y="907" width="1" height="3" fill="#5b6675"/>
<g stroke="#c872ab" stroke-width="3" fill="none">
<path d="M161 112V733M194 112V733M243 112V978M159.500 318.500H244.500M159.500 733H244.500M159.500 887H244.500M161 887V978M194 887V978"/>
<path d="M1429 112V852M1526 112V978M1427.500 387.500H1527.500M1427.500 483.500H1527.500M1477.500 483.500V852M1427.500 852H1527.500"/>
</g>
<path d="M104.500 112V978M1560.500 112V978" stroke="#8a9199" stroke-width="1" fill="none"/>
<g fill="#c872ab" font-family="Liberation Mono" >
<text transform="translate(188.500,204) rotate(-90)" font-size="33" textLength="105" lengthAdjust="spacingAndGlyphs">Перв. п</text>
<text transform="translate(188.500,590) rotate(-90)" font-size="33" textLength="128" lengthAdjust="spacingAndGlyphs">Справ. N°</text>
<text transform="translate(1491.400,381) rotate(-90)" font-size="43" textLength="281" lengthAdjust="spacingAndGlyphs">2035315174.758</text>
</g>
<path d="M415 204.5H1157M423 201L415 204.5L423 208M1149 208L1157 204.5L1149 201M415 200.5V466M1157 200.5V466M478 248.5H1094M486 245L478 248.5L486 252M1086 252L1094 248.5L1086 245M478 244.5V376M1094 244.5V376M519 290H1052M527 286.5L519 290L527 293.5M1044 293.5L1052 290L1044 286.5M519 286V360M1052 286V360M1285.5 342V896M1289 350L1285.5 342L1282 350M1282 888L1285.5 896L1289 888M1060 342H1289.5M1060 896H1289.5M1249.5 383.5V854.5M1253 391.5L1249.5 383.5L1246 391.5M1246 846.5L1249.5 854.5L1253 846.5M1076 383.5H1253.5M1076 854.5H1253.5M1213.5 462.5V774M1217 470.5L1213.5 462.5L1210 470.5M1210 766L1213.5 774L1217 766M1150 462.5H1217.5M1150 774H1217.5" stroke="#c8ccd0" stroke-width="1" fill="none"/>
<g fill="#c8ccd0" font-family="Liberation Sans" font-size="16.500" text-anchor="middle">
<text x="786" y="198">107</text><text x="786" y="241.500">89</text><text x="786" y="283">77</text>
<text transform="translate(1207,619) rotate(-90)">45</text><text transform="translate(1243,619) rotate(-90)">68</text><text transform="translate(1279,619) rotate(-90)">80</text>
</g>
<path d="M546 345.500H1025V407H1091V452L1106 466H1146L1153 473V527H982.500V602.500H1153V763L1146 771H1107L1092 784V829.500H1027.500V893H546V829H481V784L467 771H426L418 763V473L426 466H467L481 452V408.500H546Z" fill="#8a4055" stroke="#b83a48" stroke-width="2" stroke-linejoin="round"/>
<path d="M603 346.500V494.500" stroke="#b83a48" stroke-width="17" fill="none" stroke-linecap="butt" stroke-linejoin="miter"/>
<path d="M603 494.500H617" stroke="#b83a48" stroke-width="15" fill="none" stroke-linecap="butt" stroke-linejoin="miter"/>
<path d="M617.200 490V635" stroke="#b83a48" stroke-width="10.5" fill="none" stroke-linecap="butt" stroke-linejoin="miter"/>
<path d="M621.500 635.500H919" stroke="#b83a48" stroke-width="18.5" fill="none" stroke-linecap="butt" stroke-linejoin="miter"/>
<path d="M671.500 640V675" stroke="#b83a48" stroke-width="9" fill="none" stroke-linecap="butt" stroke-linejoin="miter"/>
<path d="M674 675.500H598V709.500H414" stroke="#b83a48" stroke-width="10.5" fill="none" stroke-linecap="butt" stroke-linejoin="miter"/>
<path d="M766 640V849" stroke="#b83a48" stroke-width="13.5" fill="none" stroke-linecap="butt" stroke-linejoin="miter"/>
<path d="M918 628V793" stroke="#b83a48" stroke-width="13.5" fill="none" stroke-linecap="butt" stroke-linejoin="miter"/>
<path d="M766 793H923" stroke="#b83a48" stroke-width="11" fill="none" stroke-linecap="butt" stroke-linejoin="miter"/>
<path d="M834.500 797V897" stroke="#b83a48" stroke-width="18.5" fill="none" stroke-linecap="butt" stroke-linejoin="miter"/>
<path d="M663 829V878H728" stroke="#b83a48" stroke-width="9.5" fill="none" stroke-linecap="butt" stroke-linejoin="miter"/>
<path d="M724.500 876V850" stroke="#b83a48" stroke-width="4.5" fill="none" stroke-linecap="butt" stroke-linejoin="miter"/>
<path d="M546 831H663" stroke="#b83a48" stroke-width="8" fill="none" stroke-linecap="butt" stroke-linejoin="miter"/>
<path d="M761 848H722" stroke="#b83a48" stroke-width="7" fill="none" stroke-linecap="butt" stroke-linejoin="miter"/>
<path d="M603 346.500V494.500" stroke="#001023" stroke-width="14" fill="none" stroke-linecap="square" stroke-linejoin="miter"/>
<path d="M603 494.500H617" stroke="#001023" stroke-width="12" fill="none" stroke-linecap="square" stroke-linejoin="miter"/>
<path d="M617.200 490V635" stroke="#001023" stroke-width="7.5" fill="none" stroke-linecap="square" stroke-linejoin="miter"/>
<path d="M621.500 635.500H919" stroke="#001023" stroke-width="15.5" fill="none" stroke-linecap="square" stroke-linejoin="miter"/>
<path d="M671.500 640V675" stroke="#001023" stroke-width="6" fill="none" stroke-linecap="square" stroke-linejoin="miter"/>
<path d="M674 675.500H598V709.500H414" stroke="#001023" stroke-width="7.5" fill="none" stroke-linecap="square" stroke-linejoin="miter"/>
<path d="M766 640V849" stroke="#001023" stroke-width="10.5" fill="none" stroke-linecap="square" stroke-linejoin="miter"/>
<path d="M918 628V793" stroke="#001023" stroke-width="10.5" fill="none" stroke-linecap="square" stroke-linejoin="miter"/>
<path d="M766 793H923" stroke="#001023" stroke-width="8" fill="none" stroke-linecap="square" stroke-linejoin="miter"/>
<path d="M834.500 797V897" stroke="#001023" stroke-width="15.5" fill="none" stroke-linecap="butt" stroke-linejoin="miter"/>
<path d="M663 829V878H728" stroke="#001023" stroke-width="6.5" fill="none" stroke-linecap="square" stroke-linejoin="miter"/>
<path d="M724.500 876V850" stroke="#001023" stroke-width="1.5" fill="none" stroke-linecap="square" stroke-linejoin="miter"/>
<path d="M546 831H663" stroke="#001023" stroke-width="5" fill="none" stroke-linecap="square" stroke-linejoin="miter"/>
<path d="M761 848H722" stroke="#001023" stroke-width="4" fill="none" stroke-linecap="square" stroke-linejoin="miter"/>
<path d="M512 342H1060A34 34 0 0 1 1094 376V451.500A10.500 10.500 0 0 0 1104.500 462H1146.500A10.500 10.500 0 0 1 1157 472.500V763.500A10.500 10.500 0 0 1 1146.500 774H1104.500A10.500 10.500 0 0 0 1094 784.500V862A34 34 0 0 1 1060 896H512A34 34 0 0 1 478 862V784.500A10.500 10.500 0 0 0 467.500 774H425.500A10.500 10.500 0 0 1 415 763.500V472.500A10.500 10.500 0 0 1 425.500 462H467.500A10.500 10.500 0 0 0 478 451.500V376A34 34 0 0 1 512 342Z" fill="none" stroke="#d0d2cd" stroke-width="1.200"/>
<circle cx="518.7" cy="383" r="23.500" fill="#cc3a34" stroke="#9a4a6a" stroke-width="1"/>
<circle cx="518.7" cy="383" r="12.300" fill="#001023" stroke="#f0d020" stroke-width="1.800"/>
<circle cx="518.7" cy="366.3" r="2.900" fill="#2a2418" stroke="#f0c030" stroke-width="2"/>
<circle cx="530.5" cy="371.2" r="2.900" fill="#2a2418" stroke="#f0c030" stroke-width="2"/>
<circle cx="535.4" cy="383" r="2.900" fill="#2a2418" stroke="#f0c030" stroke-width="2"/>
<circle cx="530.5" cy="394.8" r="2.900" fill="#2a2418" stroke="#f0c030" stroke-width="2"/>
<circle cx="518.7" cy="399.7" r="2.900" fill="#2a2418" stroke="#f0c030" stroke-width="2"/>
<circle cx="506.9" cy="394.8" r="2.900" fill="#2a2418" stroke="#f0c030" stroke-width="2"/>
<circle cx="502" cy="383" r="2.900" fill="#2a2418" stroke="#f0c030" stroke-width="2"/>
<circle cx="506.9" cy="371.2" r="2.900" fill="#2a2418" stroke="#f0c030" stroke-width="2"/>
<text x="518.7" y="391.2" font-family="Liberation Sans" font-size="23" text-anchor="middle" fill="#b8c4d0">1</text>
<circle cx="1052.5" cy="383" r="23.500" fill="#cc3a34" stroke="#9a4a6a" stroke-width="1"/>
<circle cx="1052.5" cy="383" r="12.300" fill="#001023" stroke="#f0d020" stroke-width="1.800"/>
<circle cx="1052.5" cy="366.3" r="2.900" fill="#2a2418" stroke="#f0c030" stroke-width="2"/>
<circle cx="1064.3" cy="371.2" r="2.900" fill="#2a2418" stroke="#f0c030" stroke-width="2"/>
<circle cx="1069.2" cy="383" r="2.900" fill="#2a2418" stroke="#f0c030" stroke-width="2"/>
<circle cx="1064.3" cy="394.8" r="2.900" fill="#2a2418" stroke="#f0c030" stroke-width="2"/>
<circle cx="1052.5" cy="399.7" r="2.900" fill="#2a2418" stroke="#f0c030" stroke-width="2"/>
<circle cx="1040.7" cy="394.8" r="2.900" fill="#2a2418" stroke="#f0c030" stroke-width="2"/>
<circle cx="1035.8" cy="383" r="2.900" fill="#2a2418" stroke="#f0c030" stroke-width="2"/>
<circle cx="1040.7" cy="371.2" r="2.900" fill="#2a2418" stroke="#f0c030" stroke-width="2"/>
<text x="1052.5" y="391.2" font-family="Liberation Sans" font-size="23" text-anchor="middle" fill="#b8c4d0">1</text>
<circle cx="518.7" cy="854.5" r="23.500" fill="#cc3a34" stroke="#9a4a6a" stroke-width="1"/>
<circle cx="518.7" cy="854.5" r="12.300" fill="#001023" stroke="#f0d020" stroke-width="1.800"/>
<circle cx="518.7" cy="837.8" r="2.900" fill="#2a2418" stroke="#f0c030" stroke-width="2"/>
<circle cx="530.5" cy="842.7" r="2.900" fill="#2a2418" stroke="#f0c030" stroke-width="2"/>
<circle cx="535.4" cy="854.5" r="2.900" fill="#2a2418" stroke="#f0c030" stroke-width="2"/>
<circle cx="530.5" cy="866.3" r="2.900" fill="#2a2418" stroke="#f0c030" stroke-width="2"/>
<circle cx="518.7" cy="871.2" r="2.900" fill="#2a2418" stroke="#f0c030" stroke-width="2"/>
<circle cx="506.9" cy="866.3" r="2.900" fill="#2a2418" stroke="#f0c030" stroke-width="2"/>
<circle cx="502" cy="854.5" r="2.900" fill="#2a2418" stroke="#f0c030" stroke-width="2"/>
<circle cx="506.9" cy="842.7" r="2.900" fill="#2a2418" stroke="#f0c030" stroke-width="2"/>
<text x="518.7" y="862.7" font-family="Liberation Sans" font-size="23" text-anchor="middle" fill="#b8c4d0">1</text>
<circle cx="1052.5" cy="854.5" r="23.500" fill="#cc3a34" stroke="#9a4a6a" stroke-width="1"/>
<circle cx="1052.5" cy="854.5" r="12.300" fill="#001023" stroke="#f0d020" stroke-width="1.800"/>
<circle cx="1052.5" cy="837.8" r="2.900" fill="#2a2418" stroke="#f0c030" stroke-width="2"/>
<circle cx="1064.3" cy="842.7" r="2.900" fill="#2a2418" stroke="#f0c030" stroke-width="2"/>
<circle cx="1069.2" cy="854.5" r="2.900" fill="#2a2418" stroke="#f0c030" stroke-width="2"/>
<circle cx="1064.3" cy="866.3" r="2.900" fill="#2a2418" stroke="#f0c030" stroke-width="2"/>
<circle cx="1052.5" cy="871.2" r="2.900" fill="#2a2418" stroke="#f0c030" stroke-width="2"/>
<circle cx="1040.7" cy="866.3" r="2.900" fill="#2a2418" stroke="#f0c030" stroke-width="2"/>
<circle cx="1035.8" cy="854.5" r="2.900" fill="#2a2418" stroke="#f0c030" stroke-width="2"/>
<circle cx="1040.7" cy="842.7" r="2.900" fill="#2a2418" stroke="#f0c030" stroke-width="2"/>
<text x="1052.5" y="862.7" font-family="Liberation Sans" font-size="23" text-anchor="middle" fill="#b8c4d0">1</text>
<circle cx="1105.500" cy="566.700" r="31.300" fill="none" stroke="#a040c0" stroke-width="2.600"/><circle cx="1105.500" cy="566.700" r="31.300" fill="none" stroke="#d8a0e8" stroke-width="0.700"/>
<circle cx="1105.500" cy="566.700" r="18" fill="none" stroke="#1a9aa8" stroke-width="1"/><circle cx="1105.500" cy="566.700" r="15.800" fill="#1ac8d8"/>
<rect x="614.7" y="347" width="111.6" height="35.3" fill="#7e3450"/>
<text transform="translate(723,361.5) scale(-1,1)" font-family="Liberation Mono" font-size="14.5" fill="#a86478" text-anchor="start" textLength="104" lengthAdjust="spacingAndGlyphs">AF.003.01.001</text>
<text transform="translate(713,378.5) scale(-1,1)" font-family="Liberation Mono" font-size="14.5" fill="#a86478" text-anchor="start" textLength="80" lengthAdjust="spacingAndGlyphs">31.03.2025</text>
<g fill="none" stroke="#e08a66" stroke-linecap="butt">
<path d="M508 436.9A34.1 34.1 0 0 1 569.1 436.6" stroke-width="7.6"/>
<path d="M570.1 464.8A34.1 34.1 0 0 1 507.3 465.4" stroke-width="7.6"/>
<path d="M552.7 468.7A22 22 0 1 1 552.1 434.5" stroke-width="10.5"/>
</g>
<path d="M513.700 450.500H536" fill="none" stroke="#e08a66" stroke-width="3.4" stroke-linecap="butt" stroke-linejoin="round"/>
<path d="M552.500 445.600H537.500V457.200H552.500" fill="none" stroke="#e08a66" stroke-width="4.4" stroke-linecap="butt" stroke-linejoin="miter"/>
<path d="M538 451.200H546" fill="none" stroke="#e08a66" stroke-width="2.6" stroke-linecap="butt" stroke-linejoin="round"/>
<circle cx="513.7" cy="450.2" r="4" fill="#e08a66"/>
<circle cx="513.7" cy="450.2" r="1.2" fill="#8a4055"/>
<path d="M487 442.200H511M487 458.300H511" fill="none" stroke="#e08a66" stroke-width="4" stroke-linecap="butt" stroke-linejoin="round"/>
<path d="M502.700 443V458" fill="none" stroke="#e08a66" stroke-width="4" stroke-linecap="butt" stroke-linejoin="round"/>
<circle cx="488.3" cy="442" r="4" fill="#e08a66"/>
<circle cx="488.3" cy="442" r="1.1" fill="#8a4055"/>
<circle cx="488.3" cy="449.5" r="4" fill="#e08a66"/>
<circle cx="488.3" cy="449.5" r="1.1" fill="#8a4055"/>
<circle cx="488.3" cy="459" r="4" fill="#e08a66"/>
<circle cx="488.3" cy="459" r="1.1" fill="#8a4055"/>
<path d="M559 441.700H588" fill="none" stroke="#e08a66" stroke-width="4.8" stroke-linecap="butt" stroke-linejoin="round"/>
<path d="M564 449.600H588" fill="none" stroke="#e08a66" stroke-width="3.6" stroke-linecap="butt" stroke-linejoin="round"/>
<circle cx="588.5" cy="439.8" r="4.4" fill="#e08a66"/>
<circle cx="588.5" cy="439.8" r="1.1" fill="#8a4055"/>
<circle cx="588.5" cy="449.6" r="4.4" fill="#e08a66"/>
<circle cx="588.5" cy="449.6" r="1.1" fill="#8a4055"/>
<rect x="513.4" y="503.3" width="238.6" height="35.5" fill="#e08a66"/>
<rect x="613.5" y="503.3" width="7" height="35.5" fill="#f2eda1"/>
<text x="514.7" y="517.2" font-family="Liberation Mono" font-size="15.3" fill="#8a4055" text-anchor="start" textLength="236" lengthAdjust="spacingAndGlyphs" font-weight="bold">Измеритель-преобразователь</text>
<text x="524.7" y="533.8" font-family="Liberation Mono" font-size="15.3" fill="#8a4055" text-anchor="start" textLength="215" lengthAdjust="spacingAndGlyphs" font-weight="bold">климатических параметров</text>
<text x="759.5" y="530.5" font-family="Liberation Mono" font-size="27" fill="#e08a66" text-anchor="start" textLength="196" lengthAdjust="spacingAndGlyphs">SmartTGM-W01</text>
<text x="435" y="487" font-family="Liberation Mono" font-size="15.5" fill="#e08a66" text-anchor="start" textLength="61" lengthAdjust="spacingAndGlyphs">RS-232</text>
<text x="978.7" y="429.6" font-family="Liberation Mono" font-size="16.5" fill="#e08a66" text-anchor="start" textLength="42.8" lengthAdjust="spacingAndGlyphs">СОСТ.</text>
<text x="981.5" y="473.7" font-family="Liberation Mono" font-size="16.5" fill="#e08a66" text-anchor="start" textLength="34.5" lengthAdjust="spacingAndGlyphs">СЕТЬ</text>
<text x="965.9" y="515.8" font-family="Liberation Mono" font-size="16.5" fill="#e08a66" text-anchor="start" textLength="67.1" lengthAdjust="spacingAndGlyphs" font-weight="bold">ПИТАНИЕ</text>
<text x="939.5" y="669" font-family="Liberation Mono" font-size="15.5" fill="#e08a66" text-anchor="start" textLength="51.8" lengthAdjust="spacingAndGlyphs" font-weight="bold">СБРОС</text>
<text x="930.4" y="753.2" font-family="Liberation Mono" font-size="15.5" fill="#e08a66" text-anchor="start" textLength="73" lengthAdjust="spacingAndGlyphs" font-weight="bold">ЗАГРУЗКА</text>
<text x="508.4" y="726.5" font-family="Liberation Mono" font-size="15.5" fill="#e08a66" text-anchor="middle">A</text>
<text x="525.9" y="726.5" font-family="Liberation Mono" font-size="15.5" fill="#e08a66" text-anchor="middle">B</text>
<text x="544" y="726.5" font-family="Liberation Mono" font-size="15.5" fill="#e08a66" text-anchor="middle">C</text>
<text x="562.3" y="726.5" font-family="Liberation Mono" font-size="15.5" fill="#e08a66" text-anchor="middle">D</text>
<text x="561.8" y="875.6" font-family="Liberation Mono" font-size="12" fill="#e08a66" text-anchor="start" textLength="91.6" lengthAdjust="spacingAndGlyphs">GND VOUT 24В</text>
<text x="547.3" y="891.6" font-family="Liberation Mono" font-size="9.5" fill="#e08a66" text-anchor="start" textLength="198.5" lengthAdjust="spacingAndGlyphs">© ИП Голенищев А. Б. г. Челябинск</text>
<text x="977.3" y="880.7" font-family="Liberation Mono" font-size="9.5" fill="#e08a66" text-anchor="middle" textLength="42" lengthAdjust="spacingAndGlyphs">Сделано</text>
<text x="977.3" y="891.8" font-family="Liberation Mono" font-size="9.5" fill="#e08a66" text-anchor="middle" textLength="49" lengthAdjust="spacingAndGlyphs">в России</text>
<text x="453.4" y="722.5" font-family="Liberation Mono" font-size="10.5" fill="#e08a66" text-anchor="start" textLength="18" lengthAdjust="spacingAndGlyphs">XS2</text>
<text x="779" y="354" font-family="Liberation Mono" font-size="10.5" fill="#e08a66" text-anchor="start" textLength="22" lengthAdjust="spacingAndGlyphs">HG1</text>
<text x="828" y="800.5" font-family="Liberation Mono" font-size="16" fill="#f2eda1" text-anchor="start" textLength="68.5" lengthAdjust="spacingAndGlyphs">1-wire(R)</text>
<rect x="417" y="490" width="95.5" height="221" fill="none" stroke="#e03078" stroke-width="1.2"/>
<rect x="419.8" y="493" width="89.2" height="213.8" fill="none" stroke="#e08a66" stroke-width="1.2" rx="6"/>
<path d="M427 465.500H468M1105 465.500H1146" fill="none" stroke="#3a1020" stroke-width="2.2" stroke-linecap="butt" stroke-linejoin="round" stroke-dasharray="3 2.500"/>
<path d="M436.600 562Q436.600 555 443 553.500L482 546.500Q492.800 546 492.800 556V646Q492.800 656 482 655L443 648.500Q436.600 647 436.600 640Z" fill="none" stroke="#e08a66" stroke-width="1.200"/>
<path d="M418 709H510" fill="none" stroke="#f2eda1" stroke-width="1.5" stroke-linecap="butt" stroke-linejoin="round"/>
<circle cx="464.7" cy="513.8" r="17" fill="#080c1a"/>
<circle cx="464.7" cy="513.8" r="14.6" fill="none" stroke="#d85a24" stroke-width="1.4"/>
<circle cx="464.7" cy="513.8" r="13.2" fill="#0c1020" stroke="#f09a2c" stroke-width="2.2"/>
<circle cx="464.7" cy="513.8" r="12" fill="none" stroke="#f8d840" stroke-width="1"/>
<text x="464.7" y="519.3" font-family="Liberation Mono" font-size="15.5" fill="#b0bcc8" text-anchor="middle">0</text>
<circle cx="464.7" cy="686.5" r="17" fill="#080c1a"/>
<circle cx="464.7" cy="686.5" r="14.6" fill="none" stroke="#d85a24" stroke-width="1.4"/>
<circle cx="464.7" cy="686.5" r="13.2" fill="#0c1020" stroke="#f09a2c" stroke-width="2.2"/>
<circle cx="464.7" cy="686.5" r="12" fill="none" stroke="#f8d840" stroke-width="1"/>
<text x="464.7" y="692" font-family="Liberation Mono" font-size="15.5" fill="#b0bcc8" text-anchor="middle">0</text>
<path d="M474 600H520L530 596H542M474 581H543M474 619.600H482L500 601" fill="none" stroke="#c4323e" stroke-width="1.2" stroke-linecap="round" stroke-linejoin="round"/>
<path d="M480 587L500 594.500H541V602.500H500L486 614H480Z" fill="#742838" opacity="0.75"/>
<circle cx="454" cy="572.3" r="8.5" fill="#090d1c"/>
<circle cx="454" cy="572.3" r="5.5" fill="#f2d24c" stroke="#ee9540" stroke-width="1.7"/>
<circle cx="454" cy="572.3" r="2.8" fill="#16161c"/>
<circle cx="454" cy="591.2" r="8.5" fill="#090d1c"/>
<circle cx="454" cy="591.2" r="5.5" fill="#f2d24c" stroke="#ee9540" stroke-width="1.7"/>
<circle cx="454" cy="591.2" r="2.8" fill="#16161c"/>
<circle cx="454" cy="609.8" r="8.5" fill="#090d1c"/>
<circle cx="454" cy="609.8" r="5.5" fill="#f2d24c" stroke="#ee9540" stroke-width="1.7"/>
<circle cx="454" cy="609.8" r="2.8" fill="#16161c"/>
<circle cx="454" cy="628.3" r="8.5" fill="#090d1c"/>
<circle cx="454" cy="628.3" r="5.5" fill="#f2d24c" stroke="#ee9540" stroke-width="1.7"/>
<circle cx="454" cy="628.3" r="2.8" fill="#16161c"/>
<circle cx="474.1" cy="561.8" r="3.8999999999999995" fill="#f2d24c" stroke="#ee9540" stroke-width="1.7"/>
<circle cx="474.1" cy="561.8" r="2.4" fill="#16161c"/>
<circle cx="474.1" cy="581" r="8.5" fill="#090d1c"/>
<circle cx="474.1" cy="581" r="5.5" fill="#f2d24c" stroke="#ee9540" stroke-width="1.7"/>
<circle cx="474.1" cy="581" r="2.8" fill="#16161c"/>
<circle cx="474.1" cy="600" r="8.5" fill="#090d1c"/>
<circle cx="474.1" cy="600" r="5.5" fill="#f2d24c" stroke="#ee9540" stroke-width="1.7"/>
<circle cx="474.1" cy="600" r="2.8" fill="#16161c"/>
<circle cx="474.1" cy="619.6" r="8.5" fill="#090d1c"/>
<circle cx="474.1" cy="619.6" r="5.5" fill="#f2d24c" stroke="#ee9540" stroke-width="1.7"/>
<circle cx="474.1" cy="619.6" r="2.8" fill="#16161c"/>
<rect x="465.6" y="630.7" width="17" height="17" fill="#090d1c" rx="1.5"/>
<rect x="467.6" y="632.7" width="13" height="13" fill="#c8303c"/>
<circle cx="474.1" cy="639.2" r="5.5" fill="#f2d24c" stroke="#ee9540" stroke-width="1.7"/>
<circle cx="474.1" cy="639.2" r="2.8" fill="#16161c"/>
<path d="M512 630l3 3-3 3z" fill="none" stroke="#e08a66" stroke-width="1" stroke-linecap="round" stroke-linejoin="round"/>
<rect x="609.3" y="354.7" width="352.7" height="135.9" fill="none" stroke="#d8407a" stroke-width="1.6"/>
<path d="M610.500 356V489.500H618" fill="none" stroke="#c060c8" stroke-width="1" stroke-linecap="round" stroke-linejoin="round"/>
<path d="M749.4 359.2L784.7 358.3L798.9 368.1L798.9 399.3L790.1 404.7L769.8 404.7L764.3 399.3L764.3 378.9L749.4 376.2Z" fill="#0a1226"/>
<path d="M788.8 404.7L805.1 421.7L805.1 440L811.8 448.1L820 453.5L822.7 467.1" fill="none" stroke="#0a1226" stroke-width="6" stroke-linecap="round" stroke-linejoin="round"/>
<path d="M828.1 410.1L809.8 437.3" fill="none" stroke="#0a1226" stroke-width="4.5" stroke-linecap="round" stroke-linejoin="round"/>
<path d="M748.1 440L784.7 438.6L788.8 442.7" fill="none" stroke="#0a1226" stroke-width="7" stroke-linecap="round" stroke-linejoin="round"/>
<path d="M744 448.1L749.4 440" fill="none" stroke="#0a1226" stroke-width="6" stroke-linecap="round" stroke-linejoin="round"/>
<path d="M749.4 403.3L760.3 408.8L765.7 412.8" fill="none" stroke="#0a1226" stroke-width="6" stroke-linecap="round" stroke-linejoin="round"/>
<rect x="742.3" y="382.3" width="5.2" height="12.9" fill="#b8708c"/>
<rect x="742.3" y="448" width="5.2" height="14.4" fill="#5a76b8"/>
<rect x="751" y="382.3" width="5.2" height="12.9" fill="#b8708c"/>
<rect x="751" y="448" width="5.2" height="14.4" fill="#5a76b8"/>
<rect x="759.7" y="382.3" width="5.2" height="12.9" fill="#b8708c"/>
<rect x="759.7" y="448" width="5.2" height="14.4" fill="#b8708c"/>
<rect x="768.5" y="382.3" width="5.2" height="12.9" fill="#5a76b8"/>
<rect x="768.5" y="448" width="5.2" height="14.4" fill="#5a76b8"/>
<rect x="777.2" y="382.3" width="5.2" height="12.9" fill="#4f7fc8"/>
<rect x="777.2" y="448" width="5.2" height="14.4" fill="#5a76b8"/>
<rect x="785.9" y="382.3" width="5.2" height="12.9" fill="#4f7fc8"/>
<rect x="785.9" y="448" width="5.2" height="14.4" fill="#b8708c"/>
<rect x="794.6" y="382.3" width="5.2" height="12.9" fill="#4f7fc8"/>
<rect x="794.6" y="448" width="5.2" height="14.4" fill="#b8708c"/>
<rect x="803.3" y="382.3" width="5.2" height="12.9" fill="#b8708c"/>
<rect x="803.3" y="448" width="5.2" height="14.4" fill="#5a76b8"/>
<rect x="812.1" y="382.3" width="5.2" height="12.9" fill="#b8708c"/>
<rect x="812.1" y="448" width="5.2" height="14.4" fill="#5a76b8"/>
<rect x="820.8" y="382.3" width="5.2" height="12.9" fill="#b8708c"/>
<rect x="820.8" y="448" width="5.2" height="14.4" fill="#b8708c"/>
<rect x="738.6" y="380.5" width="93.6" height="83.9" fill="none" stroke="#5aa8e0" stroke-width="0.9"/>
<path d="M740 397.200H831M740 445.400H831" fill="none" stroke="#c7a0b0" stroke-width="0.8" stroke-linecap="butt" stroke-linejoin="round"/>
<path d="M806.4 398.6L806.4 408.8L828.1 408.8" fill="none" stroke="#a86a84" stroke-width="1" stroke-linecap="round" stroke-linejoin="round"/>
<path d="M741.3 369.4L750.8 359.9L783.3 359.2L788.8 364" fill="none" stroke="#4d7fc4" stroke-width="2" stroke-linecap="round" stroke-linejoin="round"/>
<path d="M759.6 369.4L767.1 376.2L767.1 399.3L771.8 404" fill="none" stroke="#4d7fc4" stroke-width="2.2" stroke-linecap="round" stroke-linejoin="round"/>
<path d="M777.2 369.4L777.2 396.6L783.3 403.3L790.1 403.3L795.6 398.6L795.6 369.4" fill="none" stroke="#4d7fc4" stroke-width="2.2" stroke-linecap="round" stroke-linejoin="round"/>
<path d="M811.8 369.4L801 376.2L801 396.6" fill="none" stroke="#4d7fc4" stroke-width="1.8" stroke-linecap="round" stroke-linejoin="round"/>
<path d="M829.2 369.4L832.2 380.3L832.2 421L811.8 438.6" fill="none" stroke="#4d7fc4" stroke-width="2.2" stroke-linecap="round" stroke-linejoin="round"/>
<path d="M753.5 402L763 410.1L782 410.1L801 429.1L801 446.8L811.8 453.5L820 467.1L829.2 475.3" fill="none" stroke="#4d7fc4" stroke-width="2.4" stroke-linecap="round" stroke-linejoin="round"/>
<path d="M784.7 442L752.1 440L744 449.5L744 463" fill="none" stroke="#4d7fc4" stroke-width="2.4" stroke-linecap="round" stroke-linejoin="round"/>
<path d="M814.6 442L814.6 450.8L822.7 457.6L822.7 467.1" fill="none" stroke="#4d7fc4" stroke-width="2" stroke-linecap="round" stroke-linejoin="round"/>
<path d="M777.2 475.3L777.2 463" fill="none" stroke="#4d7fc4" stroke-width="2" stroke-linecap="round" stroke-linejoin="round"/>
<path d="M794.5 475.3L794.5 463" fill="none" stroke="#4d7fc4" stroke-width="2" stroke-linecap="round" stroke-linejoin="round"/>
<path d="M759.6 475.3L759.6 482L782 482L794.5 475.3" fill="none" stroke="#4d7fc4" stroke-width="2" stroke-linecap="round" stroke-linejoin="round"/>
<path d="M759.6 369.4L752.1 362.6L752.1 376.2L754.2 378.2" fill="none" stroke="#c4323e" stroke-width="1.2" stroke-linecap="round" stroke-linejoin="round"/>
<path d="M767.1 375.5L764.3 378.9L764.3 399.3L769.8 404.7L782 404.7L803.7 426.4L803.7 445.4L801 448.1" fill="none" stroke="#c4323e" stroke-width="1.2" stroke-linecap="round" stroke-linejoin="round"/>
<path d="M788.8 359.2L784.7 364L784.7 376.2L773.8 378.9L773.8 395.2L778.6 398.6L792.8 398.6L795.6 396.6" fill="none" stroke="#c4323e" stroke-width="1.2" stroke-linecap="round" stroke-linejoin="round"/>
<path d="M794.5 369.4L794.5 396.6" fill="none" stroke="#c4323e" stroke-width="1.2" stroke-linecap="round" stroke-linejoin="round"/>
<path d="M829.2 369.4L829.2 421L807.8 441.3" fill="none" stroke="#c4323e" stroke-width="1.2" stroke-linecap="round" stroke-linejoin="round"/>
<path d="M785.4 441.3L775.2 441.3L754.9 445.4L741.3 452.2L741.3 475.3" fill="none" stroke="#c4323e" stroke-width="1.2" stroke-linecap="round" stroke-linejoin="round"/>
<path d="M777.2 475.3L777.2 448.1L785.4 441.3" fill="none" stroke="#c4323e" stroke-width="1.2" stroke-linecap="round" stroke-linejoin="round"/>
<path d="M806.4 441.3L803.7 445.4L811.8 448.1L820 453.5L820 469.2L829.2 475.3" fill="none" stroke="#c4323e" stroke-width="1.2" stroke-linecap="round" stroke-linejoin="round"/>
<path d="M792.8 425.1L777.9 440" fill="none" stroke="#c4323e" stroke-width="1.2" stroke-linecap="round" stroke-linejoin="round"/>
<path d="M788.8 418.3L796.9 427.8" fill="none" stroke="#8a7ae0" stroke-width="0.9" stroke-linecap="round" stroke-linejoin="round"/>
<path d="M784.7 421L798.3 422.3" fill="none" stroke="#8a7ae0" stroke-width="0.9" stroke-linecap="round" stroke-linejoin="round"/>
<circle cx="741.3" cy="369.4" r="6.2" fill="#090d1c"/>
<circle cx="741.3" cy="369.4" r="4.0" fill="#f2d24c" stroke="#ee9540" stroke-width="1.7"/>
<circle cx="741.3" cy="369.4" r="1.9" fill="#16161c"/>
<circle cx="759.6" cy="369.4" r="6.2" fill="#090d1c"/>
<circle cx="759.6" cy="369.4" r="4.0" fill="#f2d24c" stroke="#ee9540" stroke-width="1.7"/>
<circle cx="759.6" cy="369.4" r="1.9" fill="#16161c"/>
<circle cx="777.2" cy="369.4" r="6.2" fill="#090d1c"/>
<circle cx="777.2" cy="369.4" r="4.0" fill="#f2d24c" stroke="#ee9540" stroke-width="1.7"/>
<circle cx="777.2" cy="369.4" r="1.9" fill="#16161c"/>
<circle cx="794.5" cy="369.4" r="6.2" fill="#090d1c"/>
<circle cx="794.5" cy="369.4" r="4.0" fill="#f2d24c" stroke="#ee9540" stroke-width="1.7"/>
<circle cx="794.5" cy="369.4" r="1.9" fill="#16161c"/>
<circle cx="811.8" cy="369.4" r="6.2" fill="#090d1c"/>
<circle cx="811.8" cy="369.4" r="4.0" fill="#f2d24c" stroke="#ee9540" stroke-width="1.7"/>
<circle cx="811.8" cy="369.4" r="1.9" fill="#16161c"/>
<circle cx="829.2" cy="369.4" r="6.2" fill="#090d1c"/>
<circle cx="829.2" cy="369.4" r="4.0" fill="#f2d24c" stroke="#ee9540" stroke-width="1.7"/>
<circle cx="829.2" cy="369.4" r="1.9" fill="#16161c"/>
<rect x="735.1" y="469.1" width="12.4" height="12.4" fill="#090d1c" rx="1.5"/>
<rect x="736.3" y="470.3" width="10" height="10" fill="#c8303c"/>
<circle cx="741.3" cy="475.3" r="4.0" fill="#f2d24c" stroke="#ee9540" stroke-width="1.7"/>
<circle cx="741.3" cy="475.3" r="1.9" fill="#16161c"/>
<circle cx="759.6" cy="475.3" r="6.2" fill="#090d1c"/>
<circle cx="759.6" cy="475.3" r="4.0" fill="#f2d24c" stroke="#ee9540" stroke-width="1.7"/>
<circle cx="759.6" cy="475.3" r="1.9" fill="#16161c"/>
<circle cx="777.2" cy="475.3" r="6.2" fill="#090d1c"/>
<circle cx="777.2" cy="475.3" r="4.0" fill="#f2d24c" stroke="#ee9540" stroke-width="1.7"/>
<circle cx="777.2" cy="475.3" r="1.9" fill="#16161c"/>
<circle cx="794.5" cy="475.3" r="6.2" fill="#090d1c"/>
<circle cx="794.5" cy="475.3" r="4.0" fill="#f2d24c" stroke="#ee9540" stroke-width="1.7"/>
<circle cx="794.5" cy="475.3" r="1.9" fill="#16161c"/>
<circle cx="811.8" cy="475.3" r="6.2" fill="#090d1c"/>
<circle cx="811.8" cy="475.3" r="4.0" fill="#f2d24c" stroke="#ee9540" stroke-width="1.7"/>
<circle cx="811.8" cy="475.3" r="1.9" fill="#16161c"/>
<circle cx="829.2" cy="475.3" r="6.2" fill="#090d1c"/>
<circle cx="829.2" cy="475.3" r="4.0" fill="#f2d24c" stroke="#ee9540" stroke-width="1.7"/>
<circle cx="829.2" cy="475.3" r="1.9" fill="#16161c"/>
<circle cx="753.5" cy="377.6" r="3" fill="#0a1226"/>
<circle cx="753.5" cy="377.6" r="1.2" fill="#e89a30"/>
<circle cx="767.7" cy="375.1" r="3" fill="#0a1226"/>
<circle cx="767.7" cy="375.1" r="1.2" fill="#e89a30"/>
<circle cx="788.1" cy="359.2" r="3" fill="#0a1226"/>
<circle cx="788.1" cy="359.2" r="1.2" fill="#e89a30"/>
<circle cx="753.5" cy="401.7" r="3" fill="#0a1226"/>
<circle cx="753.5" cy="401.7" r="1.2" fill="#e89a30"/>
<circle cx="771.8" cy="403.6" r="3" fill="#0a1226"/>
<circle cx="771.8" cy="403.6" r="1.2" fill="#e89a30"/>
<circle cx="778.6" cy="398.6" r="3" fill="#0a1226"/>
<circle cx="778.6" cy="398.6" r="1.2" fill="#e89a30"/>
<circle cx="785.4" cy="441.6" r="3" fill="#0a1226"/>
<circle cx="785.4" cy="441.6" r="1.2" fill="#e89a30"/>
<circle cx="807.1" cy="441.6" r="3" fill="#0a1226"/>
<circle cx="807.1" cy="441.6" r="1.2" fill="#e89a30"/>
<circle cx="814.6" cy="441.6" r="3" fill="#0a1226"/>
<circle cx="814.6" cy="441.6" r="1.2" fill="#e89a30"/>
<circle cx="754.9" cy="445.7" r="3" fill="#0a1226"/>
<circle cx="754.9" cy="445.7" r="1.2" fill="#e89a30"/>
<circle cx="781.3" cy="467.8" r="3" fill="#0a1226"/>
<circle cx="781.3" cy="467.8" r="1.2" fill="#e89a30"/>
<circle cx="820" cy="469.2" r="3" fill="#0a1226"/>
<circle cx="820" cy="469.2" r="1.2" fill="#e89a30"/>
<circle cx="803" cy="446.1" r="3" fill="#0a1226"/>
<circle cx="803" cy="446.1" r="1.2" fill="#e89a30"/>
<text transform="translate(738,409) rotate(90)" font-family="Liberation Mono" font-size="11" fill="#a86478" text-anchor="start" textLength="23" lengthAdjust="spacingAndGlyphs">DD2</text>
<rect x="835" y="398" width="8.5" height="20.3" fill="none" stroke="#b88098" stroke-width="0.8"/>
<rect x="836.5" y="400" width="5.5" height="5" fill="#a86080"/>
<rect x="836.5" y="411.3" width="5.5" height="5" fill="#a86080"/>
<rect x="835" y="419.6" width="8.5" height="23.1" fill="none" stroke="#b88098" stroke-width="0.8"/>
<rect x="836.5" y="421.6" width="5.5" height="5" fill="#a86080"/>
<rect x="836.5" y="435.7" width="5.5" height="5" fill="#a86080"/>
<rect x="846.4" y="398" width="8.5" height="20.3" fill="none" stroke="#b88098" stroke-width="0.8"/>
<rect x="847.9" y="400" width="5.5" height="5" fill="#a86080"/>
<rect x="847.9" y="411.3" width="5.5" height="5" fill="#a86080"/>
<rect x="846.4" y="419.6" width="8.5" height="23.1" fill="none" stroke="#b88098" stroke-width="0.8"/>
<rect x="847.9" y="421.6" width="5.5" height="5" fill="#a86080"/>
<rect x="847.9" y="435.7" width="5.5" height="5" fill="#a86080"/>
<text transform="translate(845,385) rotate(90)" font-family="Liberation Mono" font-size="9" fill="#a87088" text-anchor="start">C?</text>
<text transform="translate(857,385) rotate(90)" font-family="Liberation Mono" font-size="9" fill="#a87088" text-anchor="start">C?</text>
<text transform="translate(845,446) rotate(90)" font-family="Liberation Mono" font-size="8.5" fill="#a87088" text-anchor="start">R22</text>
<text transform="translate(857,446) rotate(90)" font-family="Liberation Mono" font-size="8.5" fill="#a87088" text-anchor="start">R21</text>
<path d="M859.300 408.100L878.300 427V532" fill="none" stroke="#0a1226" stroke-width="6.5" stroke-linecap="butt" stroke-linejoin="round"/>
<path d="M859.300 425.700L870.500 437V532" fill="none" stroke="#0a1226" stroke-width="6" stroke-linecap="butt" stroke-linejoin="round"/>
<path d="M859.300 408.100L878.300 427V532M859.300 425.700L870 436.500V532" fill="none" stroke="#4d7fc4" stroke-width="2.4" stroke-linecap="butt" stroke-linejoin="round"/>
<path d="M874.300 432V532" fill="none" stroke="#8a3048" stroke-width="1.4" stroke-linecap="butt" stroke-linejoin="round"/>
<circle cx="859.3" cy="408.1" r="5" fill="#0a0c1c"/>
<circle cx="859.3" cy="408.1" r="1.5" fill="#2a1a10" stroke="#e08a30" stroke-width="1"/>
<circle cx="859.3" cy="425.7" r="5" fill="#0a0c1c"/>
<circle cx="859.3" cy="425.7" r="1.5" fill="#2a1a10" stroke="#e08a30" stroke-width="1"/>
<clipPath id="cpM"><rect x="866.500" y="500" width="15" height="34"/></clipPath>
<g clip-path="url(#cpM)"><text x="759.500" y="530.500" font-family="Liberation Mono" font-size="27" fill="#f2eda1" textLength="196" lengthAdjust="spacingAndGlyphs">SmartTGM-W01</text></g>
<path d="M955 532L1026 461L1026 452" fill="none" stroke="#7a3048" stroke-width="3" stroke-linecap="butt" stroke-linejoin="round"/>
<path d="M955 532L1026 461L1026 452" fill="none" stroke="#b06080" stroke-width="1.4" stroke-linecap="butt" stroke-linejoin="round"/>
<path d="M958.4 532.7L1013.4 477L1036 475.6" fill="none" stroke="#7a3048" stroke-width="3" stroke-linecap="butt" stroke-linejoin="round"/>
<path d="M958.4 532.7L1013.4 477L1036 475.6" fill="none" stroke="#b06080" stroke-width="1.4" stroke-linecap="butt" stroke-linejoin="round"/>
<path d="M961.8 533.4L1016.8 477L1036 474.3" fill="none" stroke="#7a3048" stroke-width="3" stroke-linecap="butt" stroke-linejoin="round"/>
<path d="M961.8 533.4L1016.8 477L1036 474.3" fill="none" stroke="#b06080" stroke-width="1.4" stroke-linecap="butt" stroke-linejoin="round"/>
<path d="M972 519.800H1036" fill="none" stroke="#7a3048" stroke-width="3" stroke-linecap="butt" stroke-linejoin="round"/>
<path d="M972 519.800H1036" fill="none" stroke="#b06080" stroke-width="1.4" stroke-linecap="butt" stroke-linejoin="round"/>
<rect x="1027.6" y="408.6" width="50.9" height="31.2" fill="none" stroke="#dc3c6e" stroke-width="1.2"/>
<circle cx="1052" cy="424.2" r="10.9" fill="none" stroke="#c7a0b0" stroke-width="1"/>
<path d="M1044 433A12.500 12.500 0 0 0 1060 433" fill="none" stroke="#c7a0b0" stroke-width="0.9" stroke-linecap="round" stroke-linejoin="round"/>
<circle cx="1035" cy="424.2" r="7.0" fill="#090d1c"/>
<circle cx="1035" cy="424.2" r="4.5" fill="#f2d24c" stroke="#ee9540" stroke-width="1.7"/>
<circle cx="1035" cy="424.2" r="2" fill="#16161c"/>
<circle cx="1052" cy="424.2" r="4.5" fill="#f2d24c" stroke="#ee9540" stroke-width="1.7"/>
<circle cx="1052" cy="424.2" r="2" fill="#16161c"/>
<rect x="1063.1" y="417" width="14.4" height="14.4" fill="#090d1c" rx="1.5"/>
<rect x="1064.8" y="418.7" width="11" height="11" fill="#c8303c"/>
<circle cx="1070.3" cy="424.2" r="4.5" fill="#f2d24c" stroke="#ee9540" stroke-width="1.7"/>
<circle cx="1070.3" cy="424.2" r="2" fill="#16161c"/>
<rect x="1035" y="452" width="35.3" height="30.5" fill="none" stroke="#dc3c6e" stroke-width="1.2"/>
<circle cx="1052.7" cy="467.6" r="11.5" fill="none" stroke="#c7a0b0" stroke-width="1"/>
<circle cx="1043.5" cy="467.6" r="4.5" fill="#f2d24c" stroke="#ee9540" stroke-width="1.7"/>
<circle cx="1043.5" cy="467.6" r="2" fill="#16161c"/>
<rect x="1054" y="460.1" width="15" height="15" fill="#090d1c" rx="1.5"/>
<rect x="1056" y="462.1" width="11" height="11" fill="#c8303c"/>
<circle cx="1061.5" cy="467.6" r="4.5" fill="#f2d24c" stroke="#ee9540" stroke-width="1.7"/>
<circle cx="1061.5" cy="467.6" r="2" fill="#16161c"/>
<rect x="1035" y="494.7" width="35.3" height="30.6" fill="none" stroke="#dc3c6e" stroke-width="1.2"/>
<circle cx="1052.7" cy="510.3" r="11.5" fill="none" stroke="#c7a0b0" stroke-width="1"/>
<circle cx="1043.5" cy="510.3" r="4.5" fill="#f2d24c" stroke="#ee9540" stroke-width="1.7"/>
<circle cx="1043.5" cy="510.3" r="2" fill="#16161c"/>
<rect x="1054" y="502.8" width="15" height="15" fill="#090d1c" rx="1.5"/>
<rect x="1056" y="504.8" width="11" height="11" fill="#c8303c"/>
<circle cx="1061.5" cy="510.3" r="4.5" fill="#f2d24c" stroke="#ee9540" stroke-width="1.7"/>
<circle cx="1061.5" cy="510.3" r="2" fill="#16161c"/>
<rect x="1021.5" y="433.7" width="10.2" height="22.3" fill="none" stroke="#b88a9c" stroke-width="0.9"/>
<rect x="1023" y="436.7" width="7.2" height="5.5" fill="#a05870"/>
<rect x="1023" y="447.5" width="7.2" height="5.5" fill="#a05870"/>
<rect x="1074.4" y="433.7" width="10.2" height="22.3" fill="none" stroke="#b88a9c" stroke-width="0.9"/>
<rect x="1075.9" y="436.7" width="7.2" height="5.5" fill="#a05870"/>
<rect x="1075.9" y="447.5" width="7.2" height="5.5" fill="#a05870"/>
<rect x="1074.4" y="465.6" width="10.2" height="22.4" fill="none" stroke="#b88a9c" stroke-width="0.9"/>
<rect x="1075.9" y="468.6" width="7.2" height="5.5" fill="#a05870"/>
<rect x="1075.9" y="479.5" width="7.2" height="5.5" fill="#a05870"/>
<rect x="1074.4" y="502.9" width="10.2" height="22.4" fill="none" stroke="#b88a9c" stroke-width="0.9"/>
<rect x="1075.9" y="505.9" width="7.2" height="5.5" fill="#a05870"/>
<rect x="1075.9" y="516.8" width="7.2" height="5.5" fill="#a05870"/>
<text transform="translate(1090.7,433) rotate(-90)" font-family="Liberation Mono" font-size="10" fill="#c88a98" text-anchor="start" textLength="20" lengthAdjust="spacingAndGlyphs">HL3</text>
<text transform="translate(1090.7,477) rotate(-90)" font-family="Liberation Mono" font-size="10" fill="#c88a98" text-anchor="start" textLength="20" lengthAdjust="spacingAndGlyphs">HL2</text>
<text transform="translate(1090.7,520) rotate(-90)" font-family="Liberation Mono" font-size="10" fill="#c88a98" text-anchor="start" textLength="20" lengthAdjust="spacingAndGlyphs">HL1</text>
<path d="M969.600 406H1050.300M1010.600 366V446" fill="none" stroke="#e8ecf0" stroke-width="1" stroke-linecap="butt" stroke-linejoin="round"/>
<rect x="541.7" y="584.7" width="15.3" height="4.4" fill="#d63040"/>
<rect x="576.6" y="584.7" width="15.2" height="4.4" fill="#d63040"/>
<rect x="578" y="585.9" width="11" height="2" fill="#f0d0d8"/>
<rect x="541.7" y="593.6" width="15.3" height="4.4" fill="#d63040"/>
<rect x="576.6" y="593.6" width="15.2" height="4.4" fill="#d63040"/>
<rect x="541.7" y="602.4" width="15.3" height="4.4" fill="#d63040"/>
<rect x="576.6" y="602.4" width="15.2" height="4.4" fill="#d63040"/>
<rect x="541.7" y="611.3" width="15.3" height="4.4" fill="#d63040"/>
<rect x="576.6" y="611.3" width="15.2" height="4.4" fill="#d63040"/>
<rect x="578" y="612.5" width="11" height="2" fill="#f0d0d8"/>
<rect x="541.7" y="620.2" width="15.3" height="4.4" fill="#d63040"/>
<rect x="576.6" y="620.2" width="15.2" height="4.4" fill="#d63040"/>
<rect x="541.7" y="629" width="15.3" height="4.4" fill="#d63040"/>
<rect x="576.6" y="629" width="15.2" height="4.4" fill="#d63040"/>
<rect x="578" y="630.2" width="11" height="2" fill="#f0d0d8"/>
<rect x="541.7" y="637.9" width="15.3" height="4.4" fill="#d63040"/>
<rect x="576.6" y="637.9" width="15.2" height="4.4" fill="#d63040"/>
<rect x="541.7" y="646.8" width="15.3" height="4.4" fill="#d63040"/>
<rect x="576.6" y="646.8" width="15.2" height="4.4" fill="#d63040"/>
<rect x="540.5" y="582" width="52.5" height="72" fill="none" stroke="#e63aa0" stroke-width="1"/>
<rect x="557.5" y="585" width="18.5" height="67" fill="none" stroke="#c7a0b0" stroke-width="0.8"/>
<text x="558" y="666" font-family="Liberation Mono" font-size="10.5" fill="#c88a98" text-anchor="start" textLength="18" lengthAdjust="spacingAndGlyphs">DD3</text>
<rect x="521.5" y="585.7" width="8.3" height="5.6" fill="#d63040"/>
<rect x="521.5" y="598.8" width="8.3" height="5.6" fill="#d63040"/>
<rect x="520.5" y="584.7" width="10.3" height="20.7" fill="none" stroke="#e63aa0" stroke-width="1"/>
<text transform="translate(540,604.4) rotate(-90)" font-family="Liberation Mono" font-size="9.5" fill="#efe9e2" text-anchor="start" textLength="18" lengthAdjust="spacingAndGlyphs">C18</text>
<rect x="521.5" y="613" width="8.3" height="5.2" fill="#d63040"/>
<rect x="521.5" y="625.3" width="8.3" height="5.2" fill="#d63040"/>
<rect x="520.5" y="612" width="10.3" height="19.5" fill="none" stroke="#e63aa0" stroke-width="1"/>
<text transform="translate(540,630.5) rotate(-90)" font-family="Liberation Mono" font-size="9.5" fill="#efe9e2" text-anchor="start" textLength="18" lengthAdjust="spacingAndGlyphs">C19</text>
<rect x="521.5" y="635.8" width="8.3" height="5.6" fill="#d63040"/>
<rect x="521.5" y="648.9" width="8.3" height="5.6" fill="#d63040"/>
<rect x="520.5" y="634.8" width="10.3" height="20.7" fill="none" stroke="#e63aa0" stroke-width="1"/>
<text transform="translate(540,654.5) rotate(-90)" font-family="Liberation Mono" font-size="9.5" fill="#efe9e2" text-anchor="start" textLength="18" lengthAdjust="spacingAndGlyphs">C24</text>
<rect x="557.5" y="560.6" width="7.5" height="6" fill="#d63040"/>
<rect x="557.5" y="574.4" width="7.5" height="6" fill="#d63040"/>
<rect x="556.5" y="559.6" width="9.5" height="21.8" fill="none" stroke="#e63aa0" stroke-width="1"/>
<rect x="570" y="560.6" width="9" height="6" fill="#d63040"/>
<rect x="570" y="574.4" width="9" height="6" fill="#d63040"/>
<rect x="571" y="564.1" width="7" height="2" fill="#efe9e2"/>
<rect x="571" y="574.9" width="7" height="2" fill="#efe9e2"/>
<rect x="569" y="559.6" width="11" height="21.8" fill="none" stroke="#e63aa0" stroke-width="1"/>
<text transform="translate(554,580) rotate(-90)" font-family="Liberation Mono" font-size="9.5" fill="#c88a98" text-anchor="start" textLength="18" lengthAdjust="spacingAndGlyphs">C23</text>
<text transform="translate(589,580) rotate(-90)" font-family="Liberation Mono" font-size="9.5" fill="#c88a98" text-anchor="start" textLength="18" lengthAdjust="spacingAndGlyphs">C17</text>
<circle cx="562.4" cy="598.9" r="5.2" fill="#0a0c1c"/>
<circle cx="562.4" cy="598.9" r="1.5" fill="#2a1a10" stroke="#e08a30" stroke-width="1"/>
<circle cx="570" cy="605" r="5.2" fill="#0a0c1c"/>
<circle cx="570" cy="605" r="1.5" fill="#2a1a10" stroke="#e08a30" stroke-width="1"/>
<circle cx="603.8" cy="621.7" r="5.2" fill="#0a0c1c"/>
<circle cx="603.8" cy="621.7" r="1.5" fill="#2a1a10" stroke="#e08a30" stroke-width="1"/>
<path d="M592 590L603 600V652L614 663H640M592 599L600 606V655L612 667H640M562 599H580M570 605H580" fill="none" stroke="#4d7fc4" stroke-width="1.6" stroke-linecap="round" stroke-linejoin="round"/>
<path d="M592 608H598L603.800 614V621.700" fill="none" stroke="#c4323e" stroke-width="1.2" stroke-linecap="round" stroke-linejoin="round"/>
<path d="M606 663.500H669" fill="none" stroke="#0a1226" stroke-width="8" stroke-linecap="butt" stroke-linejoin="round"/>
<path d="M603 655L611 663H655M607 652L614 659.500H640" fill="none" stroke="#4d7fc4" stroke-width="1.8" stroke-linecap="round" stroke-linejoin="round"/>
<rect x="618.6" y="626.5" width="36.4" height="17.5" fill="#001023" stroke="#e8e0e0" stroke-width="1.2"/>
<rect x="622.6" y="609.8" width="7.5" height="16.2" fill="#d63040"/>
<rect x="622.6" y="644.5" width="7.5" height="16.5" fill="#d63040"/>
<rect x="625.1" y="612" width="2.5" height="12" fill="#f0c8d0"/>
<rect x="625.1" y="647" width="2.5" height="12" fill="#f0c8d0"/>
<rect x="632.4" y="609.8" width="7.5" height="16.2" fill="#d63040"/>
<rect x="632.4" y="644.5" width="7.5" height="16.5" fill="#d63040"/>
<rect x="634.9" y="612" width="2.5" height="12" fill="#f0c8d0"/>
<rect x="634.9" y="647" width="2.5" height="12" fill="#f0c8d0"/>
<rect x="642.2" y="609.8" width="7.5" height="16.2" fill="#d63040"/>
<rect x="642.2" y="644.5" width="7.5" height="16.5" fill="#d63040"/>
<rect x="644.7" y="612" width="2.5" height="12" fill="#f0c8d0"/>
<rect x="644.7" y="647" width="2.5" height="12" fill="#f0c8d0"/>
<rect x="618.6" y="609.3" width="36.4" height="52.2" fill="none" stroke="#e63aa0" stroke-width="1"/>
<path d="M631.5 635.300h10M636.5 630.300v10" fill="none" stroke="#d040d0" stroke-width="1.2" stroke-linecap="butt" stroke-linejoin="round"/>
<text transform="translate(664.5,645) rotate(-90)" font-family="Liberation Mono" font-size="10" fill="#efe9e2" text-anchor="start" textLength="20" lengthAdjust="spacingAndGlyphs">DA6</text>
<rect x="818" y="626.5" width="36.7" height="17.5" fill="#001023" stroke="#e8e0e0" stroke-width="1.2"/>
<rect x="822" y="609.8" width="7.5" height="16.2" fill="#d63040"/>
<rect x="822" y="644.5" width="7.5" height="16.5" fill="#d63040"/>
<rect x="824.5" y="612" width="2.5" height="12" fill="#f0c8d0"/>
<rect x="824.5" y="647" width="2.5" height="12" fill="#f0c8d0"/>
<rect x="831.8" y="609.8" width="7.5" height="16.2" fill="#d63040"/>
<rect x="831.8" y="644.5" width="7.5" height="16.5" fill="#d63040"/>
<rect x="834.3" y="612" width="2.5" height="12" fill="#f0c8d0"/>
<rect x="834.3" y="647" width="2.5" height="12" fill="#f0c8d0"/>
<rect x="841.6" y="609.8" width="7.5" height="16.2" fill="#d63040"/>
<rect x="841.6" y="644.5" width="7.5" height="16.5" fill="#d63040"/>
<rect x="844.1" y="612" width="2.5" height="12" fill="#f0c8d0"/>
<rect x="844.1" y="647" width="2.5" height="12" fill="#f0c8d0"/>
<rect x="818" y="609.3" width="36.7" height="52.2" fill="none" stroke="#e63aa0" stroke-width="1"/>
<path d="M832 635.300h10M837 630.300v10" fill="none" stroke="#d040d0" stroke-width="1.2" stroke-linecap="butt" stroke-linejoin="round"/>
<text transform="translate(864,645) rotate(-90)" font-family="Liberation Mono" font-size="10" fill="#efe9e2" text-anchor="start" textLength="20" lengthAdjust="spacingAndGlyphs">DA7</text>
<rect x="682.3" y="626.5" width="53.4" height="17.5" fill="#001023"/>
<rect x="682.3" y="615.2" width="53.4" height="39.2" fill="none" stroke="#e08a66" stroke-width="1.2"/>
<rect x="686.6" y="602" width="9.5" height="13" fill="#d63040"/>
<rect x="686.6" y="655.5" width="9.5" height="13.1" fill="#d63040"/>
<rect x="698.5" y="602" width="9.5" height="13" fill="#d63040"/>
<rect x="698.5" y="655.5" width="9.5" height="13.1" fill="#d63040"/>
<rect x="710.4" y="602" width="9.5" height="13" fill="#d63040"/>
<rect x="710.4" y="655.5" width="9.5" height="13.1" fill="#d63040"/>
<rect x="722.3" y="602" width="9.5" height="13" fill="#d63040"/>
<rect x="722.3" y="655.5" width="9.5" height="13.1" fill="#d63040"/>
<path d="M703.400 635.300h10M708.400 630.300v10" fill="none" stroke="#d040d0" stroke-width="1.2" stroke-linecap="butt" stroke-linejoin="round"/>
<text transform="translate(745,645) rotate(-90)" font-family="Liberation Mono" font-size="10" fill="#efe9e2" text-anchor="start" textLength="20" lengthAdjust="spacingAndGlyphs">DA8</text>
<text x="741" y="629" font-family="Liberation Mono" font-size="8" fill="#efe9e2" text-anchor="start">o</text>
<rect x="645" y="577" width="9" height="6.3" fill="#d63040"/>
<rect x="645" y="591.6" width="9" height="6.3" fill="#d63040"/>
<rect x="644" y="576" width="11" height="22.9" fill="none" stroke="#e63aa0" stroke-width="1"/>
<text transform="translate(654,574) rotate(-90)" font-family="Liberation Mono" font-size="9.5" fill="#e0a0a8" text-anchor="start" textLength="18" lengthAdjust="spacingAndGlyphs">C16</text>
<rect x="675" y="577" width="8.5" height="6" fill="#d63040"/>
<rect x="675" y="590.8" width="8.5" height="6" fill="#d63040"/>
<rect x="674" y="576" width="10.5" height="21.8" fill="none" stroke="#e63aa0" stroke-width="1"/>
<text transform="translate(683,574) rotate(-90)" font-family="Liberation Mono" font-size="9.5" fill="#e0a0a8" text-anchor="start" textLength="18" lengthAdjust="spacingAndGlyphs">C20</text>
<rect x="687" y="577" width="8.5" height="6" fill="#d63040"/>
<rect x="687" y="590.8" width="8.5" height="6" fill="#d63040"/>
<rect x="688" y="580.5" width="6.5" height="2" fill="#efe9e2"/>
<rect x="688" y="591.3" width="6.5" height="2" fill="#efe9e2"/>
<rect x="686" y="576" width="10.5" height="21.8" fill="none" stroke="#e63aa0" stroke-width="1"/>
<text transform="translate(695,574) rotate(-90)" font-family="Liberation Mono" font-size="9.5" fill="#e0a0a8" text-anchor="start" textLength="18" lengthAdjust="spacingAndGlyphs">C21</text>
<rect x="699" y="577" width="8.5" height="6" fill="#d63040"/>
<rect x="699" y="590.8" width="8.5" height="6" fill="#d63040"/>
<rect x="700" y="580.5" width="6.5" height="2" fill="#efe9e2"/>
<rect x="700" y="591.3" width="6.5" height="2" fill="#efe9e2"/>
<rect x="698" y="576" width="10.5" height="21.8" fill="none" stroke="#e63aa0" stroke-width="1"/>
<text transform="translate(707,574) rotate(-90)" font-family="Liberation Mono" font-size="9.5" fill="#e0a0a8" text-anchor="start" textLength="18" lengthAdjust="spacingAndGlyphs">R33</text>
<rect x="733.5" y="577" width="8.8" height="6" fill="#d63040"/>
<rect x="733.5" y="591" width="8.8" height="6" fill="#d63040"/>
<rect x="734.5" y="580.5" width="6.8" height="2" fill="#efe9e2"/>
<rect x="734.5" y="591.5" width="6.8" height="2" fill="#efe9e2"/>
<rect x="732.5" y="576" width="10.8" height="22" fill="none" stroke="#e63aa0" stroke-width="1"/>
<text transform="translate(742,574) rotate(-90)" font-family="Liberation Mono" font-size="9.5" fill="#e0a0a8" text-anchor="start" textLength="18" lengthAdjust="spacingAndGlyphs">R37</text>
<rect x="745.5" y="577" width="8.8" height="6" fill="#d63040"/>
<rect x="745.5" y="591" width="8.8" height="6" fill="#d63040"/>
<rect x="746.5" y="580.5" width="6.8" height="2" fill="#efe9e2"/>
<rect x="746.5" y="591.5" width="6.8" height="2" fill="#efe9e2"/>
<rect x="744.5" y="576" width="10.8" height="22" fill="none" stroke="#e63aa0" stroke-width="1"/>
<text transform="translate(754,574) rotate(-90)" font-family="Liberation Mono" font-size="9.5" fill="#efe9e2" text-anchor="start" textLength="18" lengthAdjust="spacingAndGlyphs">R38</text>
<circle cx="632.2" cy="600" r="5.2" fill="#0a0c1c"/>
<circle cx="632.2" cy="600" r="1.5" fill="#2a1a10" stroke="#e08a30" stroke-width="1"/>
<circle cx="640.9" cy="600" r="5.2" fill="#0a0c1c"/>
<circle cx="640.9" cy="600" r="1.5" fill="#2a1a10" stroke="#e08a30" stroke-width="1"/>
<circle cx="715" cy="593.4" r="5.2" fill="#0a0c1c"/>
<circle cx="715" cy="593.4" r="1.5" fill="#2a1a10" stroke="#e08a30" stroke-width="1"/>
<circle cx="723.7" cy="584.7" r="5.2" fill="#0a0c1c"/>
<circle cx="723.7" cy="584.7" r="1.5" fill="#2a1a10" stroke="#e08a30" stroke-width="1"/>
<circle cx="739" cy="603.2" r="5.2" fill="#0a0c1c"/>
<circle cx="739" cy="603.2" r="1.5" fill="#2a1a10" stroke="#e08a30" stroke-width="1"/>
<circle cx="749.9" cy="603.2" r="5.2" fill="#0a0c1c"/>
<circle cx="749.9" cy="603.2" r="1.5" fill="#2a1a10" stroke="#e08a30" stroke-width="1"/>
<circle cx="757.5" cy="559.6" r="5.2" fill="#0a0c1c"/>
<circle cx="757.5" cy="559.6" r="1.5" fill="#2a1a10" stroke="#e08a30" stroke-width="1"/>
<path d="M632 600L632 556L646.7 541.3L713 541.3L722.9 551.2L722.9 585" fill="none" stroke="#c4323e" stroke-width="1.9" stroke-linecap="round" stroke-linejoin="round" opacity="0.95"/>
<path d="M636.5 600L636.5 559L651.1 544.4L708 544.4L716.8 553.2L716.8 592" fill="none" stroke="#c4323e" stroke-width="1.9" stroke-linecap="round" stroke-linejoin="round" opacity="0.95"/>
<path d="M641 600L641 562L655.5 547.5L702 547.5" fill="none" stroke="#c4323e" stroke-width="1.9" stroke-linecap="round" stroke-linejoin="round" opacity="0.95"/>
<path d="M713.7 592L713.7 567L740 540.7L826 540.7L838 552.7" fill="none" stroke="#4d7fc4" stroke-width="1.8" stroke-linecap="round" stroke-linejoin="round" opacity="0.95"/>
<path d="M719.8 590L719.8 569.5L745 544.3L824.5 544.3L836 555.8" fill="none" stroke="#4d7fc4" stroke-width="1.8" stroke-linecap="round" stroke-linejoin="round" opacity="0.95"/>
<path d="M726 586L726 572L750 548L823 548L834.5 559.5" fill="none" stroke="#4d7fc4" stroke-width="1.8" stroke-linecap="round" stroke-linejoin="round" opacity="0.95"/>
<path d="M742.5 542.5L825.2 542.5L837 554.3" fill="none" stroke="#c4323e" stroke-width="1.5" stroke-linecap="round" stroke-linejoin="round" opacity="0.95"/>
<path d="M747.5 546.1L823.7 546.1L835.2 557.6" fill="none" stroke="#c4323e" stroke-width="1.5" stroke-linecap="round" stroke-linejoin="round" opacity="0.95"/>
<path d="M625 661V672L612 685V700M636 661V676L622 690" fill="none" stroke="#4d7fc4" stroke-width="1.8" stroke-linecap="round" stroke-linejoin="round"/>
<path d="M880 565L892 577" fill="none" stroke="#c4323e" stroke-width="1.5" stroke-linecap="round" stroke-linejoin="round"/>
<path d="M828 552H861L900 590V606H846V612H828Z" fill="#3e6cb0" opacity="0.92"/>
<path d="M874.300 530V534L895.500 556V588H962" fill="none" stroke="#0a1226" stroke-width="12" stroke-linecap="butt" stroke-linejoin="round"/>
<path d="M870 530V535L891.300 557.500V592.500H962M878.500 530V532.500L899.700 554.500V584H962" fill="none" stroke="#4d7fc4" stroke-width="3" stroke-linecap="butt" stroke-linejoin="round"/>
<path d="M874.300 530V534L895.500 556V588H962" fill="none" stroke="#c4323e" stroke-width="1.6" stroke-linecap="butt" stroke-linejoin="round"/>
<path d="M893.4 551.6L937.4 595.6L1004.4 595.6L1014.4 605.6" fill="none" stroke="#4d7fc4" stroke-width="1.4" stroke-linecap="butt" stroke-linejoin="round" opacity="0.95"/>
<path d="M895.2 549.8L939.2 593.8L1005.2 593.8L1015.2 603.8" fill="none" stroke="#c4323e" stroke-width="1.4" stroke-linecap="butt" stroke-linejoin="round" opacity="0.95"/>
<path d="M897 548L941 592L1006 592L1016 602" fill="none" stroke="#4d7fc4" stroke-width="1.4" stroke-linecap="butt" stroke-linejoin="round" opacity="0.95"/>
<path d="M898.8 546.2L942.8 590.2L1006.8 590.2L1016.8 600.2" fill="none" stroke="#c4323e" stroke-width="1.4" stroke-linecap="butt" stroke-linejoin="round" opacity="0.95"/>
<path d="M900.6 544.4L944.6 588.4L1007.6 588.4L1017.6 598.4" fill="none" stroke="#4d7fc4" stroke-width="1.4" stroke-linecap="butt" stroke-linejoin="round" opacity="0.95"/>
<path d="M806 553L815 545.500H834L866 577V586" fill="none" stroke="#c4323e" stroke-width="2.4" stroke-linecap="round" stroke-linejoin="round"/>
<path d="M845 586H880L892 598V612" fill="none" stroke="#c4323e" stroke-width="2.4" stroke-linecap="round" stroke-linejoin="round"/>
<path d="M826 598H836L846 608" fill="none" stroke="#c4323e" stroke-width="1.8" stroke-linecap="round" stroke-linejoin="round"/>
<rect x="806" y="555" width="6" height="8" fill="#d63040"/>
<rect x="819.9" y="555" width="6" height="8" fill="#d63040"/>
<rect x="809.5" y="556" width="2" height="6" fill="#efe9e2"/>
<rect x="820.4" y="556" width="2" height="6" fill="#efe9e2"/>
<rect x="805" y="554" width="21.9" height="10" fill="none" stroke="#e63aa0" stroke-width="1"/>
<rect x="806" y="567" width="6" height="8" fill="#d63040"/>
<rect x="819.9" y="567" width="6" height="8" fill="#d63040"/>
<rect x="809.5" y="568" width="2" height="6" fill="#efe9e2"/>
<rect x="820.4" y="568" width="2" height="6" fill="#efe9e2"/>
<rect x="805" y="566" width="21.9" height="10" fill="none" stroke="#e63aa0" stroke-width="1"/>
<text x="828" y="563.5" font-family="Liberation Mono" font-size="9.5" fill="#efe9e2" text-anchor="start" textLength="18" lengthAdjust="spacingAndGlyphs">R35</text>
<text x="828" y="575.5" font-family="Liberation Mono" font-size="9.5" fill="#efe9e2" text-anchor="start" textLength="18" lengthAdjust="spacingAndGlyphs">R34</text>
<text transform="translate(848,575) rotate(-90)" font-family="Liberation Mono" font-size="9.5" fill="#efe9e2" text-anchor="start" textLength="12" lengthAdjust="spacingAndGlyphs">VT</text>
<rect x="871.5" y="554" width="8.9" height="6" fill="#d63040"/>
<rect x="871.5" y="568" width="8.9" height="6" fill="#d63040"/>
<rect x="872.5" y="557.5" width="6.9" height="2" fill="#efe9e2"/>
<rect x="872.5" y="568.5" width="6.9" height="2" fill="#efe9e2"/>
<rect x="870.5" y="553" width="10.9" height="22" fill="none" stroke="#e63aa0" stroke-width="1"/>
<text transform="translate(868,575) rotate(-90)" font-family="Liberation Mono" font-size="9.5" fill="#efe9e2" text-anchor="start" textLength="18" lengthAdjust="spacingAndGlyphs">R36</text>
<rect x="806" y="580" width="6" height="7" fill="#d63040"/>
<rect x="819.9" y="580" width="6" height="7" fill="#d63040"/>
<rect x="809.5" y="581" width="2" height="5" fill="#efe9e2"/>
<rect x="820.4" y="581" width="2" height="5" fill="#efe9e2"/>
<rect x="805" y="579" width="21.9" height="9" fill="none" stroke="#e63aa0" stroke-width="1"/>
<rect x="806" y="593" width="6" height="9" fill="#d63040"/>
<rect x="819.9" y="593" width="6" height="9" fill="#d63040"/>
<rect x="809.5" y="594" width="2" height="7" fill="#efe9e2"/>
<rect x="820.4" y="594" width="2" height="7" fill="#efe9e2"/>
<rect x="805" y="592" width="21.9" height="11" fill="none" stroke="#e63aa0" stroke-width="1"/>
<text transform="translate(803,612) rotate(-90)" font-family="Liberation Mono" font-size="9.5" fill="#c88a98" text-anchor="start" textLength="38" lengthAdjust="spacingAndGlyphs">VD5VD6</text>
<rect x="841" y="580" width="5.9" height="22" fill="#d63040"/>
<rect x="851.6" y="580" width="5.9" height="22" fill="#d63040"/>
<rect x="840" y="579" width="18.5" height="24" fill="none" stroke="#e63aa0" stroke-width="1"/>
<rect x="845" y="590" width="9" height="4" fill="#efe9e2"/>
<rect x="861.7" y="581" width="7.8" height="6.4" fill="#d63040"/>
<rect x="861.7" y="595.6" width="7.8" height="6.4" fill="#d63040"/>
<rect x="860.7" y="580" width="9.8" height="23" fill="none" stroke="#e63aa0" stroke-width="1"/>
<text transform="translate(882,601) rotate(-90)" font-family="Liberation Mono" font-size="9.5" fill="#efe9e2" text-anchor="start" textLength="17" lengthAdjust="spacingAndGlyphs">C22</text>
<circle cx="831" cy="594" r="4.5" fill="#0a0c1c"/>
<circle cx="831" cy="594" r="1.5" fill="#2a1a10" stroke="#e08a30" stroke-width="1"/>
<circle cx="836" cy="607" r="4.5" fill="#0a0c1c"/>
<circle cx="836" cy="607" r="1.5" fill="#2a1a10" stroke="#e08a30" stroke-width="1"/>
<circle cx="834.9" cy="544.8" r="4.5" fill="#0a0c1c"/>
<circle cx="834.9" cy="544.8" r="1.5" fill="#2a1a10" stroke="#e08a30" stroke-width="1"/>
<circle cx="844.8" cy="549.4" r="4.5" fill="#0a0c1c"/>
<circle cx="844.8" cy="549.4" r="1.5" fill="#2a1a10" stroke="#e08a30" stroke-width="1"/>
<circle cx="870.3" cy="534.3" r="4.5" fill="#0a0c1c"/>
<circle cx="870.3" cy="534.3" r="1.5" fill="#2a1a10" stroke="#e08a30" stroke-width="1"/>
<path d="M950 600L950 536L968 518" fill="none" stroke="#b84050" stroke-width="1.3" stroke-linecap="butt" stroke-linejoin="round" opacity="0.9"/>
<path d="M953.5 600L953.5 534.5L971.5 516.5" fill="none" stroke="#b84050" stroke-width="1.3" stroke-linecap="butt" stroke-linejoin="round" opacity="0.9"/>
<path d="M957 600L957 533.1L975 515.1" fill="none" stroke="#b84050" stroke-width="1.3" stroke-linecap="butt" stroke-linejoin="round" opacity="0.9"/>
<path d="M960.5 600L960.5 531.6L978.5 513.6" fill="none" stroke="#b84050" stroke-width="1.3" stroke-linecap="butt" stroke-linejoin="round" opacity="0.9"/>
<rect x="1002.5" y="602.5" width="135" height="134.5" fill="none" stroke="#d84060" stroke-width="1.3"/>
<path d="M1004 604H1150" fill="none" stroke="#5a1828" stroke-width="2" stroke-linecap="butt" stroke-linejoin="round" stroke-dasharray="2.500 2"/>
<rect x="1016" y="616" width="80" height="32" fill="#6a2c48" opacity="0.55"/>
<path d="M1016 618H1097" fill="none" stroke="#c4323e" stroke-width="1.9" stroke-linecap="butt" stroke-linejoin="round" opacity="0.95"/>
<path d="M1016 621.8H1097" fill="none" stroke="#4d7fc4" stroke-width="1.9" stroke-linecap="butt" stroke-linejoin="round" opacity="0.95"/>
<path d="M1016 625.6H1097" fill="none" stroke="#c4323e" stroke-width="1.9" stroke-linecap="butt" stroke-linejoin="round" opacity="0.95"/>
<path d="M1016 629.4H1097" fill="none" stroke="#4d7fc4" stroke-width="1.9" stroke-linecap="butt" stroke-linejoin="round" opacity="0.95"/>
<path d="M1016 633.2H1097" fill="none" stroke="#c4323e" stroke-width="1.9" stroke-linecap="butt" stroke-linejoin="round" opacity="0.95"/>
<path d="M1016 637H1097" fill="none" stroke="#4d7fc4" stroke-width="1.9" stroke-linecap="butt" stroke-linejoin="round" opacity="0.95"/>
<path d="M1016 640.8H1097" fill="none" stroke="#c4323e" stroke-width="1.9" stroke-linecap="butt" stroke-linejoin="round" opacity="0.95"/>
<path d="M1016 644.6H1097" fill="none" stroke="#4d7fc4" stroke-width="1.9" stroke-linecap="butt" stroke-linejoin="round" opacity="0.95"/>
<path d="M1020.500 611V675.600L1012 684M1025.400 616V679L1012 692.500" fill="none" stroke="#4d7fc4" stroke-width="2" stroke-linecap="round" stroke-linejoin="round"/>
<path d="M1016.500 650V672L1012 676.500M1029.500 650V683L1012 700.500" fill="none" stroke="#c4323e" stroke-width="1.6" stroke-linecap="round" stroke-linejoin="round"/>
<path d="M1034 650V690L1014 710M1038.500 650V694L1014 718.500" fill="none" stroke="#4d7fc4" stroke-width="1.8" stroke-linecap="round" stroke-linejoin="round"/>
<path d="M1089 610L1098 606L1110 618L1123 624V650L1119 670H1108L1106 648L1092 628Z" fill="#0a1226"/>
<path d="M1092 640L1092 686L1120 714L1127 714" fill="none" stroke="#4d7fc4" stroke-width="2.2" stroke-linecap="round" stroke-linejoin="round" opacity="0.95"/>
<path d="M1095.3 641.3L1095.3 683L1119.7 703.4L1127 703.4" fill="none" stroke="#c4323e" stroke-width="1.8" stroke-linecap="round" stroke-linejoin="round" opacity="0.95"/>
<path d="M1098.6 642.6L1098.6 680.1L1119.3 692.9L1127 692.9" fill="none" stroke="#4d7fc4" stroke-width="2.2" stroke-linecap="round" stroke-linejoin="round" opacity="0.95"/>
<path d="M1101.9 644L1101.9 677.1L1119 682.3L1127 682.3" fill="none" stroke="#c4323e" stroke-width="1.8" stroke-linecap="round" stroke-linejoin="round" opacity="0.95"/>
<path d="M1105.2 645.3L1105.2 674.1L1118.7 671.8L1127 671.8" fill="none" stroke="#4d7fc4" stroke-width="2.2" stroke-linecap="round" stroke-linejoin="round" opacity="0.95"/>
<path d="M1113.500 664V676L1122 685H1127" fill="none" stroke="#4d7fc4" stroke-width="1.8" stroke-linecap="round" stroke-linejoin="round"/>
<path d="M1095.400 614.700L1127 626M1098.700 618.800L1127 635M1105.300 625.400L1118 631L1127 644M1119.300 645.200L1127 652.500" fill="none" stroke="#4d7fc4" stroke-width="1.8" stroke-linecap="round" stroke-linejoin="round"/>
<path d="M1107.800 635.300L1113 641V660L1127 674M1113.500 639.400L1120 646V655L1127 662" fill="none" stroke="#c4323e" stroke-width="1.4" stroke-linecap="round" stroke-linejoin="round"/>
<rect x="1004" y="609.1" width="11.5" height="6.2" fill="#d63040"/>
<rect x="1125" y="609.1" width="11.6" height="6.2" fill="#d63040"/>
<rect x="1004" y="618" width="11.5" height="6.2" fill="#d63040"/>
<rect x="1125" y="618" width="11.6" height="6.2" fill="#d63040"/>
<rect x="1004" y="627" width="11.5" height="6.2" fill="#d63040"/>
<rect x="1125" y="627" width="11.6" height="6.2" fill="#d63040"/>
<rect x="1004" y="635.9" width="11.5" height="6.2" fill="#d63040"/>
<rect x="1125" y="635.9" width="11.6" height="6.2" fill="#d63040"/>
<rect x="1004" y="644.8" width="11.5" height="6.2" fill="#d63040"/>
<rect x="1125" y="644.8" width="11.6" height="6.2" fill="#d63040"/>
<rect x="1004" y="653.8" width="11.5" height="6.2" fill="#d63040"/>
<rect x="1125" y="653.8" width="11.6" height="6.2" fill="#d63040"/>
<rect x="1004" y="662.7" width="11.5" height="6.2" fill="#d63040"/>
<rect x="1125" y="662.7" width="11.6" height="6.2" fill="#d63040"/>
<rect x="1004" y="671.6" width="11.5" height="6.2" fill="#d63040"/>
<rect x="1125" y="671.6" width="11.6" height="6.2" fill="#d63040"/>
<rect x="1004" y="680.5" width="11.5" height="6.2" fill="#d63040"/>
<rect x="1125" y="680.5" width="11.6" height="6.2" fill="#d63040"/>
<rect x="1004" y="689.5" width="11.5" height="6.2" fill="#d63040"/>
<rect x="1125" y="689.5" width="11.6" height="6.2" fill="#d63040"/>
<rect x="1004" y="698.4" width="11.5" height="6.2" fill="#d63040"/>
<rect x="1125" y="698.4" width="11.6" height="6.2" fill="#d63040"/>
<rect x="1004" y="707.3" width="11.5" height="6.2" fill="#d63040"/>
<rect x="1125" y="707.3" width="11.6" height="6.2" fill="#d63040"/>
<rect x="1004" y="716.3" width="11.5" height="6.2" fill="#d63040"/>
<rect x="1125" y="716.3" width="11.6" height="6.2" fill="#d63040"/>
<rect x="1004" y="725.2" width="11.5" height="6.2" fill="#d63040"/>
<rect x="1125" y="725.2" width="11.6" height="6.2" fill="#d63040"/>
<rect x="1026.5" y="730" width="6" height="9.9" fill="#d63040"/>
<rect x="1035.4" y="730" width="6" height="9.9" fill="#d63040"/>
<rect x="1044.2" y="730" width="6" height="9.9" fill="#d63040"/>
<rect x="1053.1" y="730" width="6" height="9.9" fill="#d63040"/>
<rect x="1062" y="730" width="6" height="9.9" fill="#d63040"/>
<rect x="1070.8" y="730" width="6" height="9.9" fill="#d63040"/>
<rect x="1079.7" y="730" width="6" height="9.9" fill="#d63040"/>
<rect x="1088.6" y="730" width="6" height="9.9" fill="#d63040"/>
<rect x="1097.5" y="730" width="6" height="9.9" fill="#d63040"/>
<rect x="1106.3" y="730" width="6" height="9.9" fill="#d63040"/>
<path d="M1004 737H1022M1120 737H1137M1137 737V728" fill="none" stroke="#f0e8e8" stroke-width="1" stroke-linecap="butt" stroke-linejoin="round"/>
<path d="M1136 604L1131 611" fill="none" stroke="#f0e8e8" stroke-width="0.9" stroke-linecap="round" stroke-linejoin="round"/>
<rect x="1046" y="651.8" width="27.2" height="27.2" fill="#d43a30"/>
<circle cx="1050.1" cy="656" r="2.5" fill="#3a2a10" stroke="#f2c838" stroke-width="1.5"/>
<circle cx="1050.1" cy="665.5" r="2.5" fill="#3a2a10" stroke="#f2c838" stroke-width="1.5"/>
<circle cx="1050.1" cy="675" r="2.5" fill="#3a2a10" stroke="#f2c838" stroke-width="1.5"/>
<circle cx="1060" cy="656" r="2.5" fill="#3a2a10" stroke="#f2c838" stroke-width="1.5"/>
<circle cx="1060" cy="665.5" r="2.5" fill="#3a2a10" stroke="#f2c838" stroke-width="1.5"/>
<circle cx="1060" cy="675" r="2.5" fill="#3a2a10" stroke="#f2c838" stroke-width="1.5"/>
<circle cx="1069.9" cy="656" r="2.5" fill="#3a2a10" stroke="#f2c838" stroke-width="1.5"/>
<circle cx="1069.9" cy="665.5" r="2.5" fill="#3a2a10" stroke="#f2c838" stroke-width="1.5"/>
<circle cx="1069.9" cy="675" r="2.5" fill="#3a2a10" stroke="#f2c838" stroke-width="1.5"/>
<circle cx="1055" cy="660.7" r="2.5" fill="#3a2a10" stroke="#f2c838" stroke-width="1.5"/>
<circle cx="1055" cy="670.2" r="2.5" fill="#3a2a10" stroke="#f2c838" stroke-width="1.5"/>
<circle cx="1064.9" cy="660.7" r="2.5" fill="#3a2a10" stroke="#f2c838" stroke-width="1.5"/>
<circle cx="1064.9" cy="670.2" r="2.5" fill="#3a2a10" stroke="#f2c838" stroke-width="1.5"/>
<text x="1077.3" y="675" font-family="Liberation Mono" font-size="9" fill="#c88a98" text-anchor="start">1</text>
<circle cx="1020.5" cy="610.6" r="4.4" fill="#0a0c1c"/>
<circle cx="1020.5" cy="610.6" r="1.5" fill="#2a1a10" stroke="#e08a30" stroke-width="1"/>
<circle cx="1025.4" cy="615.5" r="4.4" fill="#0a0c1c"/>
<circle cx="1025.4" cy="615.5" r="1.5" fill="#2a1a10" stroke="#e08a30" stroke-width="1"/>
<circle cx="1095.4" cy="614.7" r="4.4" fill="#0a0c1c"/>
<circle cx="1095.4" cy="614.7" r="1.5" fill="#2a1a10" stroke="#e08a30" stroke-width="1"/>
<circle cx="1098.7" cy="618.8" r="4.4" fill="#0a0c1c"/>
<circle cx="1098.7" cy="618.8" r="1.5" fill="#2a1a10" stroke="#e08a30" stroke-width="1"/>
<circle cx="1105.3" cy="625.4" r="4.4" fill="#0a0c1c"/>
<circle cx="1105.3" cy="625.4" r="1.5" fill="#2a1a10" stroke="#e08a30" stroke-width="1"/>
<circle cx="1118.5" cy="631.2" r="4.4" fill="#0a0c1c"/>
<circle cx="1118.5" cy="631.2" r="1.5" fill="#2a1a10" stroke="#e08a30" stroke-width="1"/>
<circle cx="1107.8" cy="635.3" r="4.4" fill="#0a0c1c"/>
<circle cx="1107.8" cy="635.3" r="1.5" fill="#2a1a10" stroke="#e08a30" stroke-width="1"/>
<circle cx="1113.5" cy="639.4" r="4.4" fill="#0a0c1c"/>
<circle cx="1113.5" cy="639.4" r="1.5" fill="#2a1a10" stroke="#e08a30" stroke-width="1"/>
<circle cx="1119.3" cy="645.2" r="4.4" fill="#0a0c1c"/>
<circle cx="1119.3" cy="645.2" r="1.5" fill="#2a1a10" stroke="#e08a30" stroke-width="1"/>
<circle cx="1113.5" cy="665" r="4.4" fill="#0a0c1c"/>
<circle cx="1113.5" cy="665" r="1.5" fill="#2a1a10" stroke="#e08a30" stroke-width="1"/>
<path d="M1130 733L1123 747.500H1032L1008 771.500V789L997 800" fill="none" stroke="#4d7fc4" stroke-width="3" stroke-linecap="round" stroke-linejoin="round"/>
<path d="M1133 735L1126 751H1034L1011.500 773V791L1000 803" fill="none" stroke="#c4323e" stroke-width="2" stroke-linecap="round" stroke-linejoin="round"/>
<path d="M1136 737L1129 754.500H1036L1015 775V793L1003 806" fill="none" stroke="#4d7fc4" stroke-width="3" stroke-linecap="round" stroke-linejoin="round"/>
<text x="1061" y="752" font-family="Liberation Mono" font-size="10.5" fill="#efe9e2" text-anchor="start" textLength="19" lengthAdjust="spacingAndGlyphs">DD1</text>
<path d="M981 626H1004" fill="none" stroke="#4d7fc4" stroke-width="1.6" stroke-linecap="butt" stroke-linejoin="round" opacity="0.9"/>
<path d="M981 629.8H1004" fill="none" stroke="#4d7fc4" stroke-width="1.6" stroke-linecap="butt" stroke-linejoin="round" opacity="0.9"/>
<path d="M981 633.6H1004" fill="none" stroke="#4d7fc4" stroke-width="1.6" stroke-linecap="butt" stroke-linejoin="round" opacity="0.9"/>
<path d="M981 637.4H1004" fill="none" stroke="#4d7fc4" stroke-width="1.6" stroke-linecap="butt" stroke-linejoin="round" opacity="0.9"/>
<path d="M981 641.2H1004" fill="none" stroke="#4d7fc4" stroke-width="1.6" stroke-linecap="butt" stroke-linejoin="round" opacity="0.9"/>
<path d="M983 597.400H1011L1020.300 606.500M983 600.600H1009L1018 609.500" fill="none" stroke="#4d7fc4" stroke-width="1.6" stroke-linecap="round" stroke-linejoin="round"/>
<rect x="922" y="597.4" width="61" height="48.9" fill="none" stroke="#e03a8a" stroke-width="1"/>
<rect x="940" y="598.6" width="26.3" height="45.9" fill="none" stroke="#c7a0b0" stroke-width="0.9"/>
<path d="M941 601L965 625M941 609L965 633M941 617L965 641M941 625L960 644M949 599.500L965 615.500" fill="none" stroke="#4d7fc4" stroke-width="1.3" stroke-linecap="butt" stroke-linejoin="round" opacity="0.8"/>
<rect x="923.8" y="601" width="14.6" height="11.6" fill="#d63040"/>
<text x="931" y="611.1" font-family="Liberation Sans" font-size="4.5" fill="#f0b0b0" text-anchor="middle">GND</text>
<rect x="923.8" y="617.8" width="14.6" height="9.9" fill="#d63040"/>
<text x="931" y="626.2" font-family="Liberation Sans" font-size="4.5" fill="#f0b0b0" text-anchor="middle">+3.3V</text>
<rect x="923.8" y="633" width="14.6" height="10.4" fill="#d63040"/>
<text x="931" y="641.9" font-family="Liberation Sans" font-size="4.5" fill="#f0b0b0" text-anchor="middle">+5V</text>
<rect x="968" y="606.700" width="12.200" height="29.100" rx="6" fill="#d63040"/>
<text transform="translate(977,632) rotate(-90)" font-family="Liberation Sans" font-size="5" fill="#f0b0b0" text-anchor="start">+3.3V</text>
<rect x="910.9" y="606.6" width="6.7" height="4.6" fill="#d63040"/>
<rect x="910.9" y="617.4" width="6.7" height="4.6" fill="#d63040"/>
<rect x="909.9" y="605.6" width="8.7" height="17.4" fill="none" stroke="#e63aa0" stroke-width="1"/>
<text transform="translate(917,641) rotate(-90)" font-family="Liberation Mono" font-size="10" fill="#f2eec0" text-anchor="start" textLength="11" lengthAdjust="spacingAndGlyphs">C?</text>
<rect x="987.6" y="606" width="7.9" height="5.9" fill="#d63040"/>
<rect x="987.6" y="619.6" width="7.9" height="5.9" fill="#d63040"/>
<rect x="988.6" y="609.4" width="5.9" height="2" fill="#efe9e2"/>
<rect x="988.6" y="620.1" width="5.9" height="2" fill="#efe9e2"/>
<rect x="986.6" y="605" width="9.9" height="21.5" fill="none" stroke="#e63aa0" stroke-width="1"/>
<text transform="translate(995,639.3) rotate(-90)" font-family="Liberation Mono" font-size="9.5" fill="#e0a0a8" text-anchor="start" textLength="11" lengthAdjust="spacingAndGlyphs">C8</text>
<text x="944.2" y="594" font-family="Liberation Mono" font-size="9.5" fill="#f0ecc0" text-anchor="start" textLength="17" lengthAdjust="spacingAndGlyphs">DA4</text>
<text transform="translate(955,632) rotate(-90)" font-family="Liberation Mono" font-size="7.5" fill="#d8c0c8" text-anchor="start" textLength="13" lengthAdjust="spacingAndGlyphs">DA4</text>
<path d="M929 621.300H1016" fill="none" stroke="#c4323e" stroke-width="3.4" stroke-linecap="butt" stroke-linejoin="round"/>
<path d="M971.200 635V766.300L956.600 781.600V805" fill="none" stroke="#c4323e" stroke-width="2.8" stroke-linecap="round" stroke-linejoin="round"/>
<path d="M911.600 624V630L918 636.500H926.700V800" fill="none" stroke="#c4323e" stroke-width="2.4" stroke-linecap="round" stroke-linejoin="round"/>
<path d="M930.500 646V800M967.500 646V764" fill="none" stroke="#4d7fc4" stroke-width="1.6" stroke-linecap="round" stroke-linejoin="round" opacity="0.85"/>
<path d="M998.800 632V700M" fill="none" stroke="#4d7fc4" stroke-width="1.6" stroke-linecap="round" stroke-linejoin="round"/>
<path d="M1002.300 632V700" fill="none" stroke="#c4323e" stroke-width="1.5" stroke-linecap="round" stroke-linejoin="round"/>
<circle cx="964" cy="583.1" r="4.6" fill="#0a0c1c"/>
<circle cx="964" cy="583.1" r="1.5" fill="#2a1a10" stroke="#e08a30" stroke-width="1"/>
<circle cx="964" cy="590.7" r="4.6" fill="#0a0c1c"/>
<circle cx="964" cy="590.7" r="1.5" fill="#2a1a10" stroke="#e08a30" stroke-width="1"/>
<circle cx="975.6" cy="604.4" r="4.6" fill="#0a0c1c"/>
<circle cx="975.6" cy="604.4" r="1.5" fill="#2a1a10" stroke="#e08a30" stroke-width="1"/>
<rect x="932.6" y="670.8" width="65.4" height="50.2" fill="none" stroke="#e03a8a" stroke-width="1.1"/>
<path d="M948 674.3H981M948 717.5H981M936 689.7V705.3M994 689.7V705.3M947 690.7V704.3M982 690.7V704.3" fill="none" stroke="#c7a0b0" stroke-width="0.9" stroke-linecap="butt" stroke-linejoin="round"/>
<circle cx="964.7" cy="697.5" r="13" fill="none" stroke="#c7a0b0" stroke-width="1"/>
<circle cx="964.7" cy="697.5" r="10" fill="none" stroke="#b890a0" stroke-width="0.7"/>
<text x="964.7" y="701" font-family="Liberation Mono" font-size="9.5" fill="#c09aa8" text-anchor="middle" textLength="17" lengthAdjust="spacingAndGlyphs">SB2</text>
<path d="M942.400 713.3H987" fill="none" stroke="#0a0f1e" stroke-width="7" stroke-linecap="round" stroke-linejoin="round"/>
<circle cx="942.4" cy="681.7" r="5.0" fill="#f2d24c" stroke="#ee9540" stroke-width="1.7"/>
<circle cx="942.4" cy="681.7" r="2.8" fill="#16161c"/>
<circle cx="942.4" cy="713.3" r="8.0" fill="#090d1c"/>
<circle cx="942.4" cy="713.3" r="5.0" fill="#f2d24c" stroke="#ee9540" stroke-width="1.7"/>
<circle cx="942.4" cy="713.3" r="2.8" fill="#16161c"/>
<circle cx="987" cy="681.7" r="5.0" fill="#f2d24c" stroke="#ee9540" stroke-width="1.7"/>
<circle cx="987" cy="681.7" r="2.8" fill="#16161c"/>
<circle cx="987" cy="713.3" r="8.0" fill="#090d1c"/>
<circle cx="987" cy="713.3" r="5.0" fill="#f2d24c" stroke="#ee9540" stroke-width="1.7"/>
<circle cx="987" cy="713.3" r="2.8" fill="#16161c"/>
<rect x="932.6" y="755.4" width="65.4" height="51.2" fill="none" stroke="#e03a8a" stroke-width="1.1"/>
<path d="M948 758.9H981M948 803.1H981M936 773.2V788.8M994 773.2V788.8M947 774.2V787.8M982 774.2V787.8" fill="none" stroke="#c7a0b0" stroke-width="0.9" stroke-linecap="butt" stroke-linejoin="round"/>
<circle cx="964.7" cy="781" r="13" fill="none" stroke="#c7a0b0" stroke-width="1"/>
<circle cx="964.7" cy="781" r="10" fill="none" stroke="#b890a0" stroke-width="0.7"/>
<text x="964.7" y="784.5" font-family="Liberation Mono" font-size="9.5" fill="#c09aa8" text-anchor="middle" textLength="17" lengthAdjust="spacingAndGlyphs">SB1</text>
<path d="M942.400 796.8H987" fill="none" stroke="#0a0f1e" stroke-width="7" stroke-linecap="round" stroke-linejoin="round"/>
<circle cx="942.4" cy="765.2" r="5.0" fill="#f2d24c" stroke="#ee9540" stroke-width="1.7"/>
<circle cx="942.4" cy="765.2" r="2.8" fill="#16161c"/>
<circle cx="942.4" cy="796.8" r="8.0" fill="#090d1c"/>
<circle cx="942.4" cy="796.8" r="5.0" fill="#f2d24c" stroke="#ee9540" stroke-width="1.7"/>
<circle cx="942.4" cy="796.8" r="2.8" fill="#16161c"/>
<circle cx="987" cy="765.2" r="5.0" fill="#f2d24c" stroke="#ee9540" stroke-width="1.7"/>
<circle cx="987" cy="765.2" r="2.8" fill="#16161c"/>
<circle cx="987" cy="796.8" r="8.0" fill="#090d1c"/>
<circle cx="987" cy="796.8" r="5.0" fill="#f2d24c" stroke="#ee9540" stroke-width="1.7"/>
<circle cx="987" cy="796.8" r="2.8" fill="#16161c"/>
<text transform="translate(927,701) rotate(-90)" font-family="Liberation Mono" font-size="9" fill="#efe9e2" text-anchor="start" textLength="16" lengthAdjust="spacingAndGlyphs">SB2</text>
<text transform="translate(927,787) rotate(-90)" font-family="Liberation Mono" font-size="9" fill="#efe9e2" text-anchor="start" textLength="16" lengthAdjust="spacingAndGlyphs">SB1</text>
<rect x="943.4" y="727" width="5.6" height="6.7" fill="#d63040"/>
<rect x="956.4" y="727" width="5.6" height="6.7" fill="#d63040"/>
<rect x="946.5" y="728" width="2" height="4.7" fill="#efe9e2"/>
<rect x="956.9" y="728" width="2" height="4.7" fill="#efe9e2"/>
<rect x="942.4" y="726" width="20.6" height="8.7" fill="none" stroke="#e63aa0" stroke-width="1"/>
<rect x="968.5" y="727" width="5.6" height="6.7" fill="#d63040"/>
<rect x="981.4" y="727" width="5.6" height="6.7" fill="#d63040"/>
<rect x="971.6" y="728" width="2" height="4.7" fill="#efe9e2"/>
<rect x="981.9" y="728" width="2" height="4.7" fill="#efe9e2"/>
<rect x="967.5" y="726" width="20.5" height="8.7" fill="none" stroke="#e63aa0" stroke-width="1"/>
<text x="929.5" y="734" font-family="Liberation Mono" font-size="10" fill="#e0a0a8" text-anchor="start" textLength="11" lengthAdjust="spacingAndGlyphs">R3</text>
<text x="990.5" y="734" font-family="Liberation Mono" font-size="10" fill="#e0a0a8" text-anchor="start" textLength="11" lengthAdjust="spacingAndGlyphs">C1</text>
<rect x="939" y="810.9" width="6" height="6.7" fill="#d63040"/>
<rect x="952.8" y="810.9" width="6" height="6.7" fill="#d63040"/>
<rect x="942.5" y="811.9" width="2" height="4.7" fill="#efe9e2"/>
<rect x="953.3" y="811.9" width="2" height="4.7" fill="#efe9e2"/>
<rect x="938" y="809.9" width="21.8" height="8.7" fill="none" stroke="#e63aa0" stroke-width="1"/>
<text x="925.5" y="818" font-family="Liberation Mono" font-size="10" fill="#e0a0a8" text-anchor="start" textLength="11" lengthAdjust="spacingAndGlyphs">R1</text>
<g stroke="#e08a66" fill="none" stroke-width="1.800" stroke-linecap="round">
<path d="M1006 764L1040 805M1040 764L1006 805"/>
<path d="M1014 772H1033L1031 800H1016Z"/><path d="M1012 770H1035M1020 768H1027"/>
</g>
<circle cx="1018" cy="802" r="2" fill="#e08a66"/>
<circle cx="1030" cy="802" r="2" fill="#e08a66"/>
<rect x="1006" y="808.4" width="34" height="8" fill="#e08a66"/>
<path d="M1004.500 761L1012 770" fill="none" stroke="#f2eda1" stroke-width="1.4" stroke-linecap="round" stroke-linejoin="round"/>
<path d="M1070 770.700L1090.600 811H1046Z" fill="#e08a66"/>
<path d="M1063 786L1070 790L1066 798L1074 796L1072 806" stroke="#8a4055" stroke-width="1.600" fill="none"/><path d="M1060 784L1082 806" stroke="#8a4055" stroke-width="1.800"/>
<rect x="966" y="836.5" width="22.2" height="33.3" fill="#e08a66"/>
<rect x="969" y="840" width="16.5" height="26.5" fill="none" stroke="#8a4055" stroke-width="1.4"/>
<rect x="973" y="844" width="9" height="5" fill="#8a4055"/>
<rect x="973" y="852" width="9" height="11" fill="none" stroke="#8a4055" stroke-width="1.3"/>
<path d="M977.500 852V858" fill="none" stroke="#8a4055" stroke-width="1.4" stroke-linecap="butt" stroke-linejoin="round"/>
<rect x="784.7" y="719.8" width="111.7" height="66.7" fill="none" stroke="#e08a66" stroke-width="1"/>
<rect x="786.5" y="721.6" width="108.1" height="63.1" fill="none" stroke="#e08a66" stroke-width="0.7"/>
<rect x="795.6" y="731.5" width="89.9" height="44.9" fill="none" stroke="#e08a66" stroke-width="1"/>
<path d="M826.600 721V731.500M854.500 721V731.500" fill="none" stroke="#e08a66" stroke-width="1" stroke-linecap="butt" stroke-linejoin="round"/>
<text transform="translate(850,719.5) scale(-1,1)" font-family="Liberation Mono" font-size="9.5" fill="#a86478" text-anchor="start" textLength="16" lengthAdjust="spacingAndGlyphs">XS1</text>
<path d="M807 716V744L822 759H826.600M870.800 710V746L858 759H854.500" fill="none" stroke="#4d7fc4" stroke-width="2.2" stroke-linecap="round" stroke-linejoin="round"/>
<path d="M812.500 716V742L824 754M865 710V744L856 753" fill="none" stroke="#a83048" stroke-width="2.2" stroke-linecap="round" stroke-linejoin="round"/>
<rect x="819.6" y="739.2" width="14" height="14" fill="#090d1c" rx="1.5"/>
<rect x="821.6" y="741.2" width="10" height="10" fill="#c8303c"/>
<circle cx="826.6" cy="746.2" r="4.0" fill="#f2d24c" stroke="#ee9540" stroke-width="1.7"/>
<circle cx="826.6" cy="746.2" r="2" fill="#16161c"/>
<circle cx="840.5" cy="746.2" r="4.0" fill="#f2d24c" stroke="#ee9540" stroke-width="1.7"/>
<circle cx="840.5" cy="746.2" r="2" fill="#16161c"/>
<circle cx="854.5" cy="746.2" r="4.0" fill="#f2d24c" stroke="#ee9540" stroke-width="1.7"/>
<circle cx="854.5" cy="746.2" r="2" fill="#16161c"/>
<circle cx="826.6" cy="760.2" r="7.0" fill="#090d1c"/>
<circle cx="826.6" cy="760.2" r="4.0" fill="#f2d24c" stroke="#ee9540" stroke-width="1.7"/>
<circle cx="826.6" cy="760.2" r="2" fill="#16161c"/>
<circle cx="840.5" cy="760.2" r="7.0" fill="#090d1c"/>
<circle cx="840.5" cy="760.2" r="4.0" fill="#f2d24c" stroke="#ee9540" stroke-width="1.7"/>
<circle cx="840.5" cy="760.2" r="2" fill="#16161c"/>
<circle cx="854.5" cy="760.2" r="7.0" fill="#090d1c"/>
<circle cx="854.5" cy="760.2" r="4.0" fill="#f2d24c" stroke="#ee9540" stroke-width="1.7"/>
<circle cx="854.5" cy="760.2" r="2" fill="#16161c"/>
<rect x="851" y="759.2" width="7" height="2" fill="#f0e8e0"/>
<rect x="792.5" y="661" width="21.7" height="10.8" fill="none" stroke="#efe9e2" stroke-width="1"/>
<rect x="794" y="662.5" width="7" height="7.8" fill="#d63040"/>
<rect x="806" y="662.5" width="7" height="7.8" fill="#d63040"/>
<rect x="792.5" y="674.9" width="21.7" height="12.4" fill="none" stroke="#efe9e2" stroke-width="1"/>
<rect x="794" y="676.4" width="7" height="9.4" fill="#d63040"/>
<rect x="806" y="676.4" width="7" height="9.4" fill="#d63040"/>
<rect x="791.5" y="660" width="23.7" height="28.3" fill="none" stroke="#e63aa0" stroke-width="1"/>
<text transform="translate(791,693.5) rotate(-90)" font-family="Liberation Mono" font-size="9.5" fill="#c88a98" text-anchor="start" textLength="36" lengthAdjust="spacingAndGlyphs">VD4VD3</text>
<rect x="793.5" y="691.4" width="6.2" height="7.3" fill="#d63040"/>
<rect x="807.8" y="691.4" width="6.2" height="7.3" fill="#d63040"/>
<rect x="797.2" y="692.4" width="2" height="5.3" fill="#efe9e2"/>
<rect x="808.3" y="692.4" width="2" height="5.3" fill="#efe9e2"/>
<rect x="792.5" y="690.4" width="22.5" height="9.3" fill="none" stroke="#e63aa0" stroke-width="1"/>
<rect x="793.5" y="703" width="6.2" height="7.3" fill="#d63040"/>
<rect x="807.8" y="703" width="6.2" height="7.3" fill="#d63040"/>
<rect x="797.2" y="704" width="2" height="5.3" fill="#efe9e2"/>
<rect x="808.3" y="704" width="2" height="5.3" fill="#efe9e2"/>
<rect x="792.5" y="702" width="22.5" height="9.3" fill="none" stroke="#e63aa0" stroke-width="1"/>
<text x="819.6" y="699.5" font-family="Liberation Mono" font-size="9.5" fill="#efe9e2" text-anchor="start" textLength="17" lengthAdjust="spacingAndGlyphs">R29</text>
<text x="819.6" y="711" font-family="Liberation Mono" font-size="9.5" fill="#e0a0a8" text-anchor="start" textLength="17" lengthAdjust="spacingAndGlyphs">R28</text>
<rect x="818.8" y="661.7" width="27.2" height="24" fill="none" stroke="#e63aa0" stroke-width="1"/>
<rect x="820.5" y="663.5" width="9.5" height="7" fill="#d63040"/>
<rect x="820.5" y="677" width="9.5" height="7" fill="#d63040"/>
<rect x="835" y="668" width="9.5" height="11" fill="#d63040"/>
<rect x="823" y="674.5" width="9" height="1.5" fill="#efe9e2"/>
<rect x="835" y="681" width="8" height="1.5" fill="#efe9e2"/>
<rect x="849.3" y="663.5" width="8.1" height="6.2" fill="#d63040"/>
<rect x="849.3" y="677.8" width="8.1" height="6.2" fill="#d63040"/>
<rect x="848.3" y="662.5" width="10.1" height="22.5" fill="none" stroke="#e63aa0" stroke-width="1"/>
<text transform="translate(868.4,683.4) rotate(-90)" font-family="Liberation Mono" font-size="9.5" fill="#e0a0a8" text-anchor="start" textLength="17" lengthAdjust="spacingAndGlyphs">C13</text>
<rect x="861.7" y="690.6" width="8.1" height="5.5" fill="#d63040"/>
<rect x="861.7" y="703.3" width="8.1" height="5.5" fill="#d63040"/>
<rect x="862.7" y="693.6" width="6.1" height="2" fill="#efe9e2"/>
<rect x="862.7" y="703.8" width="6.1" height="2" fill="#efe9e2"/>
<rect x="860.7" y="689.6" width="10.1" height="20.2" fill="none" stroke="#e63aa0" stroke-width="1"/>
<text transform="translate(858.4,709) rotate(-90)" font-family="Liberation Mono" font-size="9.5" fill="#e0a0a8" text-anchor="start" textLength="17" lengthAdjust="spacingAndGlyphs">R30</text>
<text transform="translate(849,697) rotate(-90)" font-family="Liberation Mono" font-size="9.5" fill="#e0a0a8" text-anchor="start" textLength="9" lengthAdjust="spacingAndGlyphs">VT</text>
<circle cx="804.1" cy="715.2" r="4.6" fill="#0a0c1c"/>
<circle cx="804.1" cy="715.2" r="1.5" fill="#2a1a10" stroke="#e08a30" stroke-width="1"/>
<circle cx="858.4" cy="657.8" r="4.6" fill="#0a0c1c"/>
<circle cx="858.4" cy="657.8" r="1.5" fill="#2a1a10" stroke="#e08a30" stroke-width="1"/>
<path d="M815 695H822L830 687M815 666H819" fill="none" stroke="#c4323e" stroke-width="1.6" stroke-linecap="round" stroke-linejoin="round"/>
<path d="M806.900 798H826.900V840H793.800V811H806.900Z" fill="#3e6cb0" opacity="0.92"/>
<rect x="767.5" y="815" width="152.5" height="64.4" fill="none" stroke="#e84aa0" stroke-width="1.3"/>
<path d="M767.500 815V879.400M767.500 879.400H771.300M827 879.400H842M827 815H842" fill="none" stroke="#f4ecf0" stroke-width="1.6" stroke-linecap="butt" stroke-linejoin="round"/>
<path d="M769.500 817V877.500" fill="none" stroke="#f4ecf0" stroke-width="1.2" stroke-linecap="butt" stroke-linejoin="round"/>
<text transform="translate(765,879.4) rotate(-90)" font-family="Liberation Mono" font-size="10" fill="#e0a0a8" text-anchor="start" textLength="19" lengthAdjust="spacingAndGlyphs">DA1</text>
<rect x="771.3" y="795.6" width="34.3" height="15" fill="none" stroke="#e63aa0" stroke-width="1"/>
<rect x="773.8" y="798.5" width="7.5" height="10" fill="#d63040"/>
<rect x="783" y="797" width="11.4" height="12.5" fill="none" stroke="#c7a0b0" stroke-width="0.9"/>
<rect x="800" y="798" width="4.4" height="11" fill="#f4ecf0"/>
<text transform="translate(815,809) rotate(-90)" font-family="Liberation Mono" font-size="9.5" fill="#eef0d8" text-anchor="start" textLength="10" lengthAdjust="spacingAndGlyphs">C3</text>
<path d="M799.400 798.800V840" fill="none" stroke="#c4323e" stroke-width="1.8" stroke-linecap="butt" stroke-linejoin="round"/>
<path d="M782.500 840.600V850L777.500 857.500H731.300" fill="none" stroke="#c4323e" stroke-width="2.5" stroke-linecap="round" stroke-linejoin="round"/>
<path d="M799.400 848.800V863.800L792.500 871.300H733.800" fill="none" stroke="#7a3048" stroke-width="4.5" stroke-linecap="round" stroke-linejoin="round"/>
<path d="M799.400 848.800V863.800L792.500 871.300H733.800" fill="none" stroke="#a86a84" stroke-width="2.6" stroke-linecap="round" stroke-linejoin="round"/>
<path d="M870.600 840V826.300L885 811.900H918.800L927.500 802.500V790" fill="none" stroke="#c4323e" stroke-width="2.2" stroke-linecap="round" stroke-linejoin="round"/>
<path d="M866 840V824.500L883 807.500H917L923 800.500V790" fill="none" stroke="#4d7fc4" stroke-width="2.2" stroke-linecap="round" stroke-linejoin="round"/>
<path d="M812 790V796" fill="none" stroke="#0a1226" stroke-width="3" stroke-linecap="round" stroke-linejoin="round"/>
<circle cx="782.5" cy="840.6" r="3.7" fill="#f2d24c" stroke="#ee9540" stroke-width="1.7"/>
<circle cx="782.5" cy="840.6" r="2" fill="#16161c"/>
<circle cx="799.4" cy="840.6" r="7.5" fill="#090d1c"/>
<circle cx="799.4" cy="840.6" r="4.3" fill="#f2d24c" stroke="#ee9540" stroke-width="1.7"/>
<circle cx="799.4" cy="840.6" r="2.2" fill="#16161c"/>
<circle cx="816.3" cy="840.6" r="7.5" fill="#090d1c"/>
<circle cx="816.3" cy="840.6" r="4.3" fill="#f2d24c" stroke="#ee9540" stroke-width="1.7"/>
<circle cx="816.3" cy="840.6" r="2.2" fill="#16161c"/>
<rect x="795.6" y="839.6" width="7.8" height="2" fill="#f0e8e0"/>
<circle cx="853.1" cy="840.6" r="7.5" fill="#090d1c"/>
<circle cx="853.1" cy="840.6" r="4.3" fill="#f2d24c" stroke="#ee9540" stroke-width="1.7"/>
<circle cx="853.1" cy="840.6" r="2.2" fill="#16161c"/>
<circle cx="870.6" cy="840.6" r="7.5" fill="#090d1c"/>
<circle cx="870.6" cy="840.6" r="4.3" fill="#f2d24c" stroke="#ee9540" stroke-width="1.7"/>
<circle cx="870.6" cy="840.6" r="2.2" fill="#16161c"/>
<circle cx="888.1" cy="840" r="3.7" fill="#f2d24c" stroke="#ee9540" stroke-width="1.7"/>
<circle cx="888.1" cy="840" r="2" fill="#16161c"/>
<circle cx="905.6" cy="840.6" r="7.5" fill="#090d1c"/>
<circle cx="905.6" cy="840.6" r="4.3" fill="#f2d24c" stroke="#ee9540" stroke-width="1.7"/>
<circle cx="905.6" cy="840.6" r="2.2" fill="#16161c"/>
<path d="M838 846.500H847" fill="none" stroke="#e060b0" stroke-width="0.9" stroke-linecap="round" stroke-linejoin="round"/>
<rect x="490.4" y="729.2" width="89.5" height="70.5" fill="none" stroke="#e06a78" stroke-width="1.2"/>
<path d="M492 792L500.500 799.700" fill="none" stroke="#e08a66" stroke-width="1" stroke-linecap="round" stroke-linejoin="round"/>
<text transform="translate(489,774) rotate(-90)" font-family="Liberation Mono" font-size="10.5" fill="#e08a66" text-anchor="start" textLength="19.7" lengthAdjust="spacingAndGlyphs">SW1</text>
<text transform="translate(502,757) rotate(-90)" font-family="Liberation Mono" font-size="7" fill="#e08a66" text-anchor="start">on</text>
<path d="M525.900 737.300V754.300L540.600 769.200H567.700L581.300 782.800V797.700" fill="none" stroke="#0a1226" stroke-width="9" stroke-linecap="butt" stroke-linejoin="round"/>
<path d="M525.900 737.300V754.300L540.600 769.200H567.700L581.300 782.800V797.700" fill="none" stroke="#4d7fc4" stroke-width="5.5" stroke-linecap="butt" stroke-linejoin="round"/>
<path d="M561.200 737.300H592" fill="none" stroke="#0a1226" stroke-width="11" stroke-linecap="butt" stroke-linejoin="round"/>
<path d="M561.200 738.500H592" fill="none" stroke="#4d7fc4" stroke-width="8" stroke-linecap="butt" stroke-linejoin="round"/>
<path d="M525.900 790.200L531 803L538 806H552" fill="none" stroke="#0a1226" stroke-width="8" stroke-linecap="butt" stroke-linejoin="round"/>
<path d="M525.900 790.200L531 803L538 806H552" fill="none" stroke="#4d7fc4" stroke-width="4.5" stroke-linecap="butt" stroke-linejoin="round"/>
<path d="M561.200 790.200L572 801V812" fill="none" stroke="#0a1226" stroke-width="8" stroke-linecap="butt" stroke-linejoin="round"/>
<path d="M561.200 790.200L572 801V812" fill="none" stroke="#4d7fc4" stroke-width="4.5" stroke-linecap="butt" stroke-linejoin="round"/>
<rect x="503.9" y="750.2" width="9.8" height="29.2" fill="none" stroke="#e08a66" stroke-width="1"/>
<rect x="503.9" y="767.8" width="9.8" height="11.6" fill="#e08a66"/>
<rect x="522.2" y="750.2" width="8.4" height="29.2" fill="none" stroke="#e08a66" stroke-width="1"/>
<rect x="522.2" y="767.8" width="8.4" height="11.6" fill="#e08a66"/>
<rect x="539.5" y="750.2" width="9.2" height="29.2" fill="none" stroke="#f4efc0" stroke-width="1"/>
<rect x="539.5" y="767.8" width="9.2" height="11.6" fill="#f4efc0"/>
<rect x="557.9" y="750.2" width="9.1" height="29.2" fill="none" stroke="#f4efc0" stroke-width="1"/>
<rect x="557.9" y="767.8" width="9.1" height="11.6" fill="#f4efc0"/>
<path d="M525.900 737.300V746L529.700 757L543.300 772H563.600L597.500 805.200H619.300" fill="none" stroke="#c4323e" stroke-width="2.8" stroke-linecap="round" stroke-linejoin="round"/>
<path d="M561.200 737.300H592M544 737.300L546 747.500H592M544 790.200L556.800 777.300H562.300M525.900 790.200L529.700 800.400H551.400L561.200 790.200" fill="none" stroke="#c4323e" stroke-width="1.3" stroke-linecap="round" stroke-linejoin="round"/>
<circle cx="508.4" cy="737.3" r="4.5" fill="#f2d24c" stroke="#ee9540" stroke-width="1.7"/>
<circle cx="508.4" cy="737.3" r="2.1" fill="#16161c"/>
<circle cx="525.9" cy="737.3" r="8.399999999999999" fill="#090d1c"/>
<circle cx="525.9" cy="737.3" r="5.3999999999999995" fill="#f2d24c" stroke="#ee9540" stroke-width="1.7"/>
<circle cx="525.9" cy="737.3" r="2.1" fill="#16161c"/>
<circle cx="544" cy="737.3" r="8.399999999999999" fill="#090d1c"/>
<circle cx="544" cy="737.3" r="5.3999999999999995" fill="#f2d24c" stroke="#ee9540" stroke-width="1.7"/>
<circle cx="544" cy="737.3" r="2.1" fill="#16161c"/>
<circle cx="561.2" cy="737.3" r="8.399999999999999" fill="#090d1c"/>
<circle cx="561.2" cy="737.3" r="5.3999999999999995" fill="#f2d24c" stroke="#ee9540" stroke-width="1.7"/>
<circle cx="561.2" cy="737.3" r="2.1" fill="#16161c"/>
<rect x="500.5" y="782.4" width="15.6" height="15.6" fill="#0a1226"/>
<rect x="502" y="783.8" width="12.8" height="12.8" fill="#c8303c"/>
<circle cx="508.4" cy="790.2" r="5.3999999999999995" fill="#f2d24c" stroke="#ee9540" stroke-width="1.7"/>
<circle cx="508.4" cy="790.2" r="2.1" fill="#16161c"/>
<circle cx="525.9" cy="790.2" r="8.399999999999999" fill="#090d1c"/>
<circle cx="525.9" cy="790.2" r="5.3999999999999995" fill="#f2d24c" stroke="#ee9540" stroke-width="1.7"/>
<circle cx="525.9" cy="790.2" r="2.1" fill="#16161c"/>
<circle cx="544" cy="790.2" r="8.399999999999999" fill="#090d1c"/>
<circle cx="544" cy="790.2" r="5.3999999999999995" fill="#f2d24c" stroke="#ee9540" stroke-width="1.7"/>
<circle cx="544" cy="790.2" r="2.1" fill="#16161c"/>
<circle cx="561.2" cy="790.2" r="8.399999999999999" fill="#090d1c"/>
<circle cx="561.2" cy="790.2" r="5.3999999999999995" fill="#f2d24c" stroke="#ee9540" stroke-width="1.7"/>
<circle cx="561.2" cy="790.2" r="2.1" fill="#16161c"/>
<rect x="505.6" y="804.1" width="7.5" height="5.5" fill="#d63040"/>
<rect x="505.6" y="817" width="7.5" height="5.5" fill="#d63040"/>
<rect x="506.6" y="807.1" width="5.5" height="2" fill="#efe9e2"/>
<rect x="506.6" y="817.5" width="5.5" height="2" fill="#efe9e2"/>
<rect x="504.6" y="803.1" width="9.5" height="20.4" fill="none" stroke="#e63aa0" stroke-width="1"/>
<text transform="translate(523,820.8) rotate(-90)" font-family="Liberation Mono" font-size="9.5" fill="#efe9e2" text-anchor="start" textLength="17" lengthAdjust="spacingAndGlyphs">R15</text>
<rect x="557.8" y="804.1" width="8.2" height="5.5" fill="#d63040"/>
<rect x="557.8" y="817" width="8.2" height="5.5" fill="#d63040"/>
<rect x="558.8" y="807.1" width="6.2" height="2" fill="#efe9e2"/>
<rect x="558.8" y="817.5" width="6.2" height="2" fill="#efe9e2"/>
<rect x="556.8" y="803.1" width="10.2" height="20.4" fill="none" stroke="#e63aa0" stroke-width="1"/>
<text transform="translate(554.8,820.8) rotate(-90)" font-family="Liberation Mono" font-size="9.5" fill="#efe9e2" text-anchor="start" textLength="17" lengthAdjust="spacingAndGlyphs">R16</text>
<circle cx="571.1" cy="812.6" r="5" fill="#0a0c1c"/>
<circle cx="571.1" cy="812.6" r="1.5" fill="#2a1a10" stroke="#e08a30" stroke-width="1"/>
<path d="M551.600 829V881M661 829V881" fill="none" stroke="#cfe0f0" stroke-width="1.2" stroke-linecap="butt" stroke-linejoin="round"/>
<path d="M664.500 829V881" fill="none" stroke="#4d7fc4" stroke-width="1.5" stroke-linecap="butt" stroke-linejoin="round"/>
<path d="M553 831.700H661" fill="none" stroke="#f0ece8" stroke-width="1.3" stroke-linecap="butt" stroke-linejoin="round"/>
<rect x="555.5" y="835" width="105.1" height="47.4" fill="none" stroke="#d08a98" stroke-width="0.9"/>
<path d="M555.500 866.400H660.600" fill="none" stroke="#d08a98" stroke-width="0.9" stroke-linecap="butt" stroke-linejoin="round"/>
<circle cx="573.4" cy="848.4" r="11.6" fill="none" stroke="#b87a90" stroke-width="1"/>
<circle cx="608.3" cy="848.4" r="11.6" fill="none" stroke="#d8c8d8" stroke-width="1"/>
<circle cx="608.3" cy="848.4" r="10.8" fill="#10142a"/>
<circle cx="608.3" cy="848.4" r="11.6" fill="none" stroke="#d8c8d8" stroke-width="1"/>
<rect x="631.6" y="836.8" width="24.2" height="23.8" fill="#0c1020" rx="2.5"/>
<rect x="634.5" y="838.8" width="18.9" height="19.2" fill="#c83040"/>
<circle cx="573.4" cy="848.4" r="8.6" fill="none" stroke="#d84828" stroke-width="1.6"/>
<circle cx="573.4" cy="848.4" r="6.6" fill="#16161c" stroke="#f0a028" stroke-width="2"/>
<circle cx="573.4" cy="848.4" r="7.5" fill="none" stroke="#f8d840" stroke-width="0.9"/>
<circle cx="608.3" cy="848.4" r="8.6" fill="none" stroke="#d84828" stroke-width="1.6"/>
<circle cx="608.3" cy="848.4" r="6.6" fill="#16161c" stroke="#f0a028" stroke-width="2"/>
<circle cx="608.3" cy="848.4" r="7.5" fill="none" stroke="#f8d840" stroke-width="0.9"/>
<circle cx="643.7" cy="848.4" r="8.6" fill="none" stroke="#d84828" stroke-width="1.6"/>
<circle cx="643.7" cy="848.4" r="6.6" fill="#16161c" stroke="#f0a028" stroke-width="2"/>
<circle cx="643.7" cy="848.4" r="7.5" fill="none" stroke="#f8d840" stroke-width="0.9"/>
<path d="M633 848.400H655" fill="none" stroke="#f0e0e0" stroke-width="1" stroke-linecap="butt" stroke-linejoin="round"/>
<path d="M608.300 840V832" fill="none" stroke="#c4323e" stroke-width="2" stroke-linecap="round" stroke-linejoin="round"/>
<path d="M656 845H664M656 853H664" fill="none" stroke="#4d7fc4" stroke-width="1.5" stroke-linecap="round" stroke-linejoin="round"/>
<path d="M685 733.500H698V757H685Z" fill="#3e6cb0" opacity="0.85"/>
<path d="M646 772L660 766H667V794H640L646 786Z" fill="#3e6cb0" opacity="0.8"/>
<path d="M608 736.600H642L646 742L661 752L662 757L655 764L648 776L630 778.500H612L608 772Z" fill="#0a1228"/>
<path d="M580 791L598 805V812H588L580 804Z" fill="#3e6cb0" opacity="0.8"/>
<rect x="609.4" y="758.300" width="7.700" height="14" rx="3" fill="#3a1a2c" stroke="#d63040" stroke-width="1.500"/>
<rect x="618.7" y="758.300" width="7.700" height="14" rx="3" fill="#3a1a2c" stroke="#d63040" stroke-width="1.500"/>
<rect x="628" y="758.300" width="7.700" height="14" rx="3" fill="#3a1a2c" stroke="#d63040" stroke-width="1.500"/>
<rect x="637.3" y="758.300" width="7.700" height="14" rx="3" fill="#3a1a2c" stroke="#d63040" stroke-width="1.500"/>
<rect x="606" y="735" width="40" height="48.5" fill="none" stroke="#e63aa0" stroke-width="0.9"/>
<text transform="translate(630.4,757) rotate(-90)" font-family="Liberation Mono" font-size="9" fill="#efe9e2" text-anchor="start" textLength="18" lengthAdjust="spacingAndGlyphs">DA3</text>
<text transform="translate(652.8,760) rotate(-90)" font-family="Liberation Mono" font-size="9.5" fill="#efe9e2" text-anchor="start" textLength="20" lengthAdjust="spacingAndGlyphs">DA3</text>
<rect x="594" y="725" width="8" height="6.5" fill="#d63040"/>
<rect x="594" y="740" width="8" height="6.5" fill="#d63040"/>
<rect x="593" y="724" width="10" height="23.5" fill="none" stroke="#e63aa0" stroke-width="1"/>
<rect x="594" y="750" width="8" height="6.5" fill="#d63040"/>
<rect x="594" y="764.8" width="8" height="6.5" fill="#d63040"/>
<rect x="593" y="749" width="10" height="23.3" fill="none" stroke="#e63aa0" stroke-width="1"/>
<text transform="translate(591.6,746) rotate(-90)" font-family="Liberation Mono" font-size="9.5" fill="#efe9e2" text-anchor="start" textLength="12" lengthAdjust="spacingAndGlyphs">R8</text>
<text transform="translate(591.6,771) rotate(-90)" font-family="Liberation Mono" font-size="9.5" fill="#e0a0a8" text-anchor="start" textLength="18" lengthAdjust="spacingAndGlyphs">R11</text>
<text transform="translate(591.6,785) rotate(-90)" font-family="Liberation Mono" font-size="9.5" fill="#e0a0a8" text-anchor="start" textLength="11" lengthAdjust="spacingAndGlyphs">R9</text>
<rect x="606.6" y="710.5" width="2.8" height="8.1" fill="#d63040"/>
<rect x="612.6" y="710.5" width="2.8" height="8.1" fill="#d63040"/>
<rect x="605.6" y="709.5" width="10.8" height="10.1" fill="none" stroke="#e63aa0" stroke-width="1"/>
<rect x="618.2" y="710.5" width="2.8" height="8.1" fill="#d63040"/>
<rect x="624.2" y="710.5" width="2.8" height="8.1" fill="#d63040"/>
<rect x="617.2" y="709.5" width="10.8" height="10.1" fill="none" stroke="#e63aa0" stroke-width="1"/>
<rect x="629.8" y="710.5" width="2.8" height="8.1" fill="#d63040"/>
<rect x="635.8" y="710.5" width="2.8" height="8.1" fill="#d63040"/>
<rect x="628.8" y="709.5" width="10.8" height="10.1" fill="none" stroke="#e63aa0" stroke-width="1"/>
<rect x="641.4" y="710.5" width="2.8" height="8.1" fill="#d63040"/>
<rect x="647.4" y="710.5" width="2.8" height="8.1" fill="#d63040"/>
<rect x="640.4" y="709.5" width="10.8" height="10.1" fill="none" stroke="#e63aa0" stroke-width="1"/>
<rect x="608" y="723.7" width="9" height="4.4" fill="#d63040"/>
<rect x="608" y="732.8" width="9" height="4.4" fill="#d63040"/>
<rect x="607" y="722.7" width="11" height="15.5" fill="none" stroke="#e63aa0" stroke-width="1"/>
<rect x="621" y="723.7" width="9" height="4.4" fill="#d63040"/>
<rect x="621" y="732.8" width="9" height="4.4" fill="#d63040"/>
<rect x="620" y="722.7" width="11" height="15.5" fill="none" stroke="#e63aa0" stroke-width="1"/>
<rect x="634" y="723.7" width="9" height="4.4" fill="#d63040"/>
<rect x="634" y="732.8" width="9" height="4.4" fill="#d63040"/>
<rect x="633" y="722.7" width="11" height="15.5" fill="none" stroke="#e63aa0" stroke-width="1"/>
<rect x="594" y="776.4" width="6" height="7.3" fill="#d63040"/>
<rect x="609.4" y="776.4" width="6" height="7.3" fill="#d63040"/>
<rect x="593" y="775.4" width="23.4" height="9.3" fill="none" stroke="#e63aa0" stroke-width="1"/>
<rect x="619" y="776.4" width="5.7" height="7.3" fill="#d63040"/>
<rect x="633.7" y="776.4" width="5.7" height="7.3" fill="#d63040"/>
<rect x="618" y="775.4" width="22.4" height="9.3" fill="none" stroke="#e63aa0" stroke-width="1"/>
<rect x="607.3" y="788.8" width="5.5" height="6.5" fill="#d63040"/>
<rect x="621.5" y="788.8" width="5.5" height="6.5" fill="#d63040"/>
<rect x="606.3" y="787.8" width="21.7" height="8.5" fill="none" stroke="#e63aa0" stroke-width="1"/>
<text x="630.4" y="797" font-family="Liberation Mono" font-size="10.5" fill="#efe9e2" text-anchor="start" textLength="11" lengthAdjust="spacingAndGlyphs">R4</text>
<text transform="translate(651.3,794) rotate(-90)" font-family="Liberation Mono" font-size="9.5" fill="#efe9e2" text-anchor="start" textLength="17" lengthAdjust="spacingAndGlyphs">R10</text>
<text x="619.5" y="683" font-family="Liberation Mono" font-size="10" fill="#f0ecd8" text-anchor="start" textLength="18.5" lengthAdjust="spacingAndGlyphs">DA5</text>
<rect x="614.9" y="684" width="29.4" height="23.2" fill="none" stroke="#e63aa0" stroke-width="1"/>
<rect x="616.4" y="685.5" width="10.9" height="20.1" fill="#d63040"/>
<rect x="633.5" y="685.5" width="10" height="20.1" fill="#d63040"/>
<path d="M629.600 685V706" fill="none" stroke="#4d7fc4" stroke-width="1.2" stroke-linecap="butt" stroke-linejoin="round"/>
<text transform="translate(613,704) rotate(-75)" font-family="Liberation Mono" font-size="7.5" fill="#f2eda1" text-anchor="start">R2?</text>
<text transform="translate(654.4,705) rotate(-90)" font-family="Liberation Mono" font-size="9.5" fill="#efe9e2" text-anchor="start" textLength="12" lengthAdjust="spacingAndGlyphs">C?</text>
<circle cx="655.9" cy="689.4" r="4.4" fill="#0a0c1c"/>
<circle cx="655.9" cy="689.4" r="1.5" fill="#2a1a10" stroke="#e08a30" stroke-width="1"/>
<circle cx="596.3" cy="788.6" r="4.6" fill="#0a0c1c"/>
<circle cx="596.3" cy="788.6" r="1.5" fill="#2a1a10" stroke="#e08a30" stroke-width="1"/>
<path d="M655.900 689.400L668 702" fill="none" stroke="#c4323e" stroke-width="1.3" stroke-linecap="round" stroke-linejoin="round"/>
<rect x="665.5" y="688" width="7.7" height="6.2" fill="#d63040"/>
<rect x="665.5" y="702.3" width="7.7" height="6.2" fill="#d63040"/>
<rect x="664.5" y="687" width="9.7" height="22.5" fill="none" stroke="#e63aa0" stroke-width="1"/>
<text transform="translate(673,685.5) rotate(-90)" font-family="Liberation Mono" font-size="9" fill="#e0a0a8" text-anchor="start" textLength="17" lengthAdjust="spacingAndGlyphs">C11</text>
<rect x="676.7" y="688" width="7.7" height="6.2" fill="#d63040"/>
<rect x="676.7" y="702.3" width="7.7" height="6.2" fill="#d63040"/>
<rect x="675.7" y="687" width="9.7" height="22.5" fill="none" stroke="#e63aa0" stroke-width="1"/>
<text transform="translate(684.2,685.5) rotate(-90)" font-family="Liberation Mono" font-size="9" fill="#e0a0a8" text-anchor="start" textLength="17" lengthAdjust="spacingAndGlyphs">C12</text>
<rect x="688" y="688" width="7.7" height="6.2" fill="#d63040"/>
<rect x="688" y="702.3" width="7.7" height="6.2" fill="#d63040"/>
<rect x="689" y="691.7" width="5.7" height="2" fill="#efe9e2"/>
<rect x="689" y="702.8" width="5.7" height="2" fill="#efe9e2"/>
<rect x="687" y="687" width="9.7" height="22.5" fill="none" stroke="#e63aa0" stroke-width="1"/>
<text transform="translate(695.5,685.5) rotate(-90)" font-family="Liberation Mono" font-size="9" fill="#efe9e2" text-anchor="start" textLength="17" lengthAdjust="spacingAndGlyphs">R17</text>
<rect x="699.2" y="688" width="7.7" height="6.2" fill="#d63040"/>
<rect x="699.2" y="702.3" width="7.7" height="6.2" fill="#d63040"/>
<rect x="700.2" y="691.7" width="5.7" height="2" fill="#efe9e2"/>
<rect x="700.2" y="702.8" width="5.7" height="2" fill="#efe9e2"/>
<rect x="698.2" y="687" width="9.7" height="22.5" fill="none" stroke="#e63aa0" stroke-width="1"/>
<text transform="translate(706.7,685.5) rotate(-90)" font-family="Liberation Mono" font-size="9" fill="#efe9e2" text-anchor="start" textLength="17" lengthAdjust="spacingAndGlyphs">R18</text>
<rect x="710.5" y="688" width="7.7" height="6.2" fill="#d63040"/>
<rect x="710.5" y="702.3" width="7.7" height="6.2" fill="#d63040"/>
<rect x="711.5" y="691.7" width="5.7" height="2" fill="#efe9e2"/>
<rect x="711.5" y="702.8" width="5.7" height="2" fill="#efe9e2"/>
<rect x="709.5" y="687" width="9.7" height="22.5" fill="none" stroke="#e63aa0" stroke-width="1"/>
<text transform="translate(718,685.5) rotate(-90)" font-family="Liberation Mono" font-size="9" fill="#efe9e2" text-anchor="start" textLength="17" lengthAdjust="spacingAndGlyphs">C10</text>
<rect x="721.7" y="688" width="7.7" height="6.2" fill="#d63040"/>
<rect x="721.7" y="702.3" width="7.7" height="6.2" fill="#d63040"/>
<rect x="722.7" y="691.7" width="5.7" height="2" fill="#efe9e2"/>
<rect x="722.7" y="702.8" width="5.7" height="2" fill="#efe9e2"/>
<rect x="720.7" y="687" width="9.7" height="22.5" fill="none" stroke="#e63aa0" stroke-width="1"/>
<text transform="translate(729.2,685.5) rotate(-90)" font-family="Liberation Mono" font-size="9" fill="#efe9e2" text-anchor="start" textLength="17" lengthAdjust="spacingAndGlyphs">R26</text>
<rect x="732.9" y="688" width="7.7" height="6.2" fill="#d63040"/>
<rect x="732.9" y="702.3" width="7.7" height="6.2" fill="#d63040"/>
<rect x="731.9" y="687" width="9.7" height="22.5" fill="none" stroke="#e63aa0" stroke-width="1"/>
<text transform="translate(740.4,685.5) rotate(-90)" font-family="Liberation Mono" font-size="9" fill="#e0a0a8" text-anchor="start" textLength="17" lengthAdjust="spacingAndGlyphs">R27</text>
<rect x="744.2" y="688" width="7.7" height="6.2" fill="#d63040"/>
<rect x="744.2" y="702.3" width="7.7" height="6.2" fill="#d63040"/>
<rect x="743.2" y="687" width="9.7" height="22.5" fill="none" stroke="#e63aa0" stroke-width="1"/>
<text transform="translate(751.7,685.5) rotate(-90)" font-family="Liberation Mono" font-size="9" fill="#e0a0a8" text-anchor="start" textLength="17" lengthAdjust="spacingAndGlyphs">C14</text>
<circle cx="691.6" cy="712.6" r="4.4" fill="#0a0c1c"/>
<circle cx="691.6" cy="712.6" r="1.5" fill="#2a1a10" stroke="#e08a30" stroke-width="1"/>
<circle cx="724.9" cy="712.6" r="4.4" fill="#0a0c1c"/>
<circle cx="724.9" cy="712.6" r="1.5" fill="#2a1a10" stroke="#e08a30" stroke-width="1"/>
<rect x="697" y="738.2" width="48" height="18.6" fill="none" stroke="#d06a80" stroke-width="0.9"/>
<rect x="699.300" y="741.300" width="17.100" height="14.700" rx="2" fill="#d63040"/><rect x="725.700" y="740.500" width="17" height="14.700" rx="2" fill="#d63040"/>
<text x="707.8" y="748" font-family="Liberation Mono" font-size="5.5" fill="#f0c0c0" text-anchor="middle">1</text>
<text x="707.8" y="754" font-family="Liberation Mono" font-size="5.5" fill="#f0c0c0" text-anchor="middle">+15V</text>
<text x="734" y="747" font-family="Liberation Mono" font-size="5.5" fill="#f0c0c0" text-anchor="middle">2</text>
<path d="M718 742V755L725 748.500Z" fill="none" stroke="#c8b0c0" stroke-width="0.9" stroke-linecap="round" stroke-linejoin="round"/>
<text transform="translate(754.3,756) rotate(-90)" font-family="Liberation Mono" font-size="10" fill="#e0a0a8" text-anchor="start" textLength="18" lengthAdjust="spacingAndGlyphs">VD2</text>
<text x="699.3" y="722.7" font-family="Liberation Mono" font-size="10.5" fill="#e08a66" text-anchor="start" textLength="18.7" lengthAdjust="spacingAndGlyphs">R13</text>
<text x="724" y="722.7" font-family="Liberation Mono" font-size="10.5" fill="#e08a66" text-anchor="start" textLength="18" lengthAdjust="spacingAndGlyphs">R12</text>
<rect x="698.8" y="725.2" width="5.9" height="7.3" fill="#d63040"/>
<rect x="712.6" y="725.2" width="5.9" height="7.3" fill="#d63040"/>
<rect x="702.2" y="726.2" width="2" height="5.3" fill="#efe9e2"/>
<rect x="713.1" y="726.2" width="2" height="5.3" fill="#efe9e2"/>
<rect x="697.8" y="724.2" width="21.7" height="9.3" fill="none" stroke="#e63aa0" stroke-width="1"/>
<rect x="722.8" y="725.2" width="6.2" height="7.3" fill="#d63040"/>
<rect x="737.1" y="725.2" width="6.2" height="7.3" fill="#d63040"/>
<rect x="726.5" y="726.2" width="2" height="5.3" fill="#efe9e2"/>
<rect x="737.6" y="726.2" width="2" height="5.3" fill="#efe9e2"/>
<rect x="721.8" y="724.2" width="22.5" height="9.3" fill="none" stroke="#e63aa0" stroke-width="1"/>
<circle cx="748.1" cy="729.7" r="5.2" fill="#0a0c1c"/>
<circle cx="748.1" cy="729.7" r="1.5" fill="#2a1a10" stroke="#e08a30" stroke-width="1"/>
<circle cx="706.3" cy="783.9" r="4.6" fill="#0a0c1c"/>
<circle cx="706.3" cy="783.9" r="1.5" fill="#2a1a10" stroke="#e08a30" stroke-width="1"/>
<rect x="697.8" y="761.4" width="49.6" height="17.1" fill="none" stroke="#e63aa0" stroke-width="1"/>
<rect x="699.3" y="778.5" width="47.3" height="25.5" fill="none" stroke="#c7a0b0" stroke-width="0.9"/>
<path d="M740 778.500L746.600 785" fill="none" stroke="#c7a0b0" stroke-width="0.8" stroke-linecap="round" stroke-linejoin="round"/>
<rect x="701.6" y="763" width="11.7" height="14" fill="#d63040"/>
<rect x="718" y="763" width="11.5" height="14" fill="#d63040"/>
<rect x="733.4" y="763" width="11.6" height="14" fill="#d63040"/>
<rect x="706" y="765" width="2.5" height="10" fill="#f0c8d0"/>
<rect x="709.400" y="806.400" width="27.100" height="16.200" rx="6" fill="#d63040"/>
<text x="723" y="813.5" font-family="Liberation Mono" font-size="6" fill="#f0c0c0" text-anchor="middle">2</text>
<text x="723" y="820" font-family="Liberation Mono" font-size="6" fill="#f0c0c0" text-anchor="middle">+15V</text>
<text x="714.5" y="833" font-family="Liberation Mono" font-size="10.5" fill="#e08a66" text-anchor="start" textLength="18" lengthAdjust="spacingAndGlyphs">DA2</text>
<text x="716.4" y="795.5" font-family="Liberation Mono" font-size="9" fill="#b07888" text-anchor="start" textLength="14" lengthAdjust="spacingAndGlyphs">DA2</text>
<rect x="697.8" y="804" width="49.6" height="20" fill="none" stroke="#d06a80" stroke-width="0.8"/>
<rect x="664.7" y="728.3" width="8.8" height="6.5" fill="#d63040"/>
<rect x="664.7" y="743.1" width="8.8" height="6.5" fill="#d63040"/>
<rect x="663.7" y="727.3" width="10.8" height="23.3" fill="none" stroke="#e63aa0" stroke-width="1"/>
<rect x="675.5" y="728.3" width="8.9" height="6.5" fill="#d63040"/>
<rect x="675.5" y="743.1" width="8.9" height="6.5" fill="#d63040"/>
<rect x="674.5" y="727.3" width="10.9" height="23.3" fill="none" stroke="#e63aa0" stroke-width="1"/>
<text transform="translate(662,745) rotate(-90)" font-family="Liberation Mono" font-size="9.5" fill="#e0a0a8" text-anchor="start" textLength="12" lengthAdjust="spacingAndGlyphs">C6</text>
<text transform="translate(694.7,745) rotate(-90)" font-family="Liberation Mono" font-size="9.5" fill="#f0ecc8" text-anchor="start" textLength="12" lengthAdjust="spacingAndGlyphs">C4</text>
<rect x="664.7" y="757" width="8.8" height="6.2" fill="#d63040"/>
<rect x="664.7" y="771.3" width="8.8" height="6.2" fill="#d63040"/>
<rect x="663.7" y="756" width="10.8" height="22.5" fill="none" stroke="#e63aa0" stroke-width="1"/>
<rect x="675.5" y="757" width="8.9" height="6.2" fill="#d63040"/>
<rect x="675.5" y="771.3" width="8.9" height="6.2" fill="#d63040"/>
<rect x="676.5" y="760.7" width="6.9" height="2" fill="#efe9e2"/>
<rect x="676.5" y="771.8" width="6.9" height="2" fill="#efe9e2"/>
<rect x="674.5" y="756" width="10.9" height="22.5" fill="none" stroke="#e63aa0" stroke-width="1"/>
<text transform="translate(662,776) rotate(-90)" font-family="Liberation Mono" font-size="9.5" fill="#efe9e2" text-anchor="start" textLength="17" lengthAdjust="spacingAndGlyphs">R14</text>
<text transform="translate(694.7,774) rotate(-90)" font-family="Liberation Mono" font-size="9.5" fill="#e0a0a8" text-anchor="start" textLength="12" lengthAdjust="spacingAndGlyphs">R5</text>
<rect x="672.4" y="808" width="6.7" height="7.4" fill="#d63040"/>
<rect x="687.8" y="808" width="6.7" height="7.4" fill="#d63040"/>
<rect x="676.6" y="809" width="2" height="5.4" fill="#efe9e2"/>
<rect x="688.3" y="809" width="2" height="5.4" fill="#efe9e2"/>
<rect x="671.4" y="807" width="24.1" height="9.4" fill="none" stroke="#e63aa0" stroke-width="1"/>
<text x="676.9" y="806" font-family="Liberation Mono" font-size="10.5" fill="#e08a66" text-anchor="start" textLength="14" lengthAdjust="spacingAndGlyphs">C5</text>
<rect x="621.8" y="799.4" width="48.9" height="25.6" fill="none" stroke="#d06a80" stroke-width="0.9"/>
<rect x="622.600" y="804.800" width="17.800" height="12.400" rx="2" fill="#d63040"/><rect x="652" y="804.800" width="17" height="12.400" rx="2" fill="#d63040"/>
<text x="631.5" y="813" font-family="Liberation Mono" font-size="5.5" fill="#f0c0c0" text-anchor="middle">1</text>
<text x="660.5" y="810.5" font-family="Liberation Mono" font-size="5" fill="#f0c0c0" text-anchor="middle">2</text>
<text x="660.5" y="816" font-family="Liberation Mono" font-size="5" fill="#f0c0c0" text-anchor="middle">GNDA</text>
<path d="M643 805V818L650 811.500Z" fill="none" stroke="#c8a0a8" stroke-width="0.9" stroke-linecap="round" stroke-linejoin="round"/>
<text x="637.6" y="834" font-family="Liberation Mono" font-size="10.5" fill="#e08a66" text-anchor="start" textLength="17" lengthAdjust="spacingAndGlyphs">VD1</text>
<rect x="600" y="801.7" width="17.2" height="8.5" fill="#d63040"/>
<rect x="599" y="811" width="19" height="10" fill="none" stroke="#efe9e2" stroke-width="1"/>
<rect x="600" y="821.9" width="17.2" height="8.6" fill="#d63040"/>
<rect x="598" y="800.5" width="21" height="31" fill="none" stroke="#e63aa0" stroke-width="1"/>
<text transform="translate(596,824) rotate(-90)" font-family="Liberation Mono" font-size="9.5" fill="#e0a0a8" text-anchor="start" textLength="12" lengthAdjust="spacingAndGlyphs">F1</text>
<path d="M608.600 831V848" fill="none" stroke="#c4323e" stroke-width="2" stroke-linecap="round" stroke-linejoin="round"/>
<path d="M643.500 761.400L656 746H670L674.500 752H691.600L697.800 747.500V735H732L735 741" fill="none" stroke="#c4323e" stroke-width="2.8" stroke-linecap="round" stroke-linejoin="round"/>
<path d="M639 804.800L648 794L654.400 789.300H673L680.700 778.500" fill="none" stroke="#c4323e" stroke-width="2.8" stroke-linecap="round" stroke-linejoin="round"/>
<path d="M580 789.300L594 803.300L618.700 806.400" fill="none" stroke="#c4323e" stroke-width="2.8" stroke-linecap="round" stroke-linejoin="round"/>
<path d="M690 812H709M736.500 814H745V757M723.800 777V806M706.300 777V784" fill="none" stroke="#c4323e" stroke-width="2" stroke-linecap="round" stroke-linejoin="round"/>
<path d="M641 811H652" fill="none" stroke="#c4323e" stroke-width="1.5" stroke-linecap="round" stroke-linejoin="round"/>
<path d="M742 823V840L735 848H672L664 856V878" fill="none" stroke="#a8506a" stroke-width="2" stroke-linecap="round" stroke-linejoin="round"/>
<rect x="711.6" y="853.5" width="5.8" height="6" fill="#d63040"/>
<rect x="725.1" y="853.5" width="5.8" height="6" fill="#d63040"/>
<rect x="714.9" y="854.5" width="2" height="4" fill="#efe9e2"/>
<rect x="725.6" y="854.5" width="2" height="4" fill="#efe9e2"/>
<rect x="710.6" y="852.5" width="21.3" height="8" fill="none" stroke="#e63aa0" stroke-width="1"/>
<rect x="711.6" y="866" width="5.8" height="8" fill="#d63040"/>
<rect x="725.1" y="866" width="5.8" height="8" fill="#d63040"/>
<rect x="714.9" y="867" width="2" height="6" fill="#efe9e2"/>
<rect x="725.6" y="867" width="2" height="6" fill="#efe9e2"/>
<rect x="710.6" y="865" width="21.3" height="10" fill="none" stroke="#e63aa0" stroke-width="1"/>
<text x="696.9" y="860.6" font-family="Liberation Mono" font-size="10.5" fill="#e08a66" text-anchor="start" textLength="12" lengthAdjust="spacingAndGlyphs">R6</text>
<text x="696.9" y="873.5" font-family="Liberation Mono" font-size="10.5" fill="#e08a66" text-anchor="start" textLength="12" lengthAdjust="spacingAndGlyphs">R2</text>
<path d="M552.8 366.4h4M554.8 364.4v4M552.8 380.3h4M554.8 378.3v4M552.8 394.1h4M554.8 392.1v4M552.8 408h4M554.8 406v4M566.7 366.4h4M568.7 364.4v4M566.7 380.3h4M568.7 378.3v4M566.7 394.1h4M568.7 392.1v4M566.7 408h4M568.7 406v4M580.5 366.4h4M582.5 364.4v4M580.5 380.3h4M582.5 378.3v4M580.5 394.1h4M582.5 392.1v4M580.5 408h4M582.5 406v4M622.5 394.5h4M624.5 392.5v4M622.5 408.4h4M624.5 406.4v4M622.5 422.2h4M624.5 420.2v4M622.5 436.1h4M624.5 434.1v4M622.5 450h4M624.5 448v4M622.5 463.9h4M624.5 461.9v4M622.5 477.7h4M624.5 475.7v4M636.4 394.5h4M638.4 392.5v4M636.4 408.4h4M638.4 406.4v4M636.4 422.2h4M638.4 420.2v4M636.4 436.1h4M638.4 434.1v4M636.4 450h4M638.4 448v4M636.4 463.9h4M638.4 461.9v4M636.4 477.7h4M638.4 475.7v4M636.3 498.3h4M638.3 496.3v4M650.2 498.3h4M652.2 496.3v4M664.1 498.3h4M666.1 496.3v4M677.9 498.3h4M679.9 496.3v4M691.8 498.3h4M693.8 496.3v4M705.7 498.3h4M707.7 496.3v4M719.6 498.3h4M721.6 496.3v4M733.5 498.3h4M735.5 496.3v4M747.3 498.3h4M749.3 496.3v4M761.2 498.3h4M763.2 496.3v4M775.1 498.3h4M777.1 496.3v4M789 498.3h4M791 496.3v4M802.9 498.3h4M804.9 496.3v4M816.7 498.3h4M818.7 496.3v4M830.6 498.3h4M832.6 496.3v4M844.5 498.3h4M846.5 496.3v4M858.4 498.3h4M860.4 496.3v4M900 498.3h4M902 496.3v4M913.9 498.3h4M915.9 496.3v4M927.8 498.3h4M929.8 496.3v4M941.7 498.3h4M943.7 496.3v4M934.5 366.4h4M936.5 364.4v4M934.5 380.3h4M936.5 378.3v4M934.5 394.1h4M936.5 392.1v4M934.5 408h4M936.5 406v4M934.5 421.9h4M936.5 419.9v4M934.5 435.8h4M936.5 433.8v4M934.5 449.6h4M936.5 447.6v4M934.5 463.5h4M936.5 461.5v4M934.5 477.4h4M936.5 475.4v4M948.4 366.4h4M950.4 364.4v4M948.4 380.3h4M950.4 378.3v4M948.4 394.1h4M950.4 392.1v4M948.4 408h4M950.4 406v4M948.4 421.9h4M950.4 419.9v4M948.4 435.8h4M950.4 433.8v4M948.4 449.6h4M950.4 447.6v4M948.4 463.5h4M950.4 461.5v4M948.4 477.4h4M950.4 475.4v4M975.3 366.4h4M977.3 364.4v4M975.3 380.3h4M977.3 378.3v4M975.3 394.1h4M977.3 392.1v4M975.3 408h4M977.3 406v4M989.2 366.4h4M991.2 364.4v4M989.2 380.3h4M991.2 378.3v4M989.2 394.1h4M991.2 392.1v4M989.2 408h4M991.2 406v4M1003 366.4h4M1005 364.4v4M1003 380.3h4M1005 378.3v4M1003 394.1h4M1005 392.1v4M1003 408h4M1005 406v4M1100.3 484.3h4M1102.3 482.3v4M1100.3 498.3h4M1102.3 496.3v4M1100.3 512.3h4M1102.3 510.3v4M1114.3 484.3h4M1116.3 482.3v4M1114.3 498.3h4M1116.3 496.3v4M1114.3 512.3h4M1116.3 510.3v4M1128.3 484.3h4M1130.3 482.3v4M1128.3 498.3h4M1130.3 496.3v4M1128.3 512.3h4M1130.3 510.3v4M518.6 547.5h4M520.6 545.5v4M518.6 554.4h4M520.6 552.4v4M532.4 547.5h4M534.4 545.5v4M532.4 554.4h4M534.4 552.4v4M546.2 547.5h4M548.2 545.5v4M546.2 554.4h4M548.2 552.4v4M559.9 547.5h4M561.9 545.5v4M559.9 554.4h4M561.9 552.4v4M573.7 547.5h4M575.7 545.5v4M573.7 554.4h4M575.7 552.4v4M587.5 547.5h4M589.5 545.5v4M587.5 554.4h4M589.5 552.4v4M601.3 547.5h4M603.3 545.5v4M601.3 554.4h4M603.3 552.4v4M518.6 561.4h4M520.6 559.4v4M518.6 568.3h4M520.6 566.3v4M518.6 575.2h4M520.6 573.2v4M532.4 561.4h4M534.4 559.4v4M532.4 568.3h4M534.4 566.3v4M532.4 575.2h4M534.4 573.2v4M518.6 671.5h4M520.6 669.5v4M518.6 678.5h4M520.6 676.5v4M518.6 685.4h4M520.6 683.4v4M518.6 692.4h4M520.6 690.4v4M518.6 699.4h4M520.6 697.4v4M532.4 671.5h4M534.4 669.5v4M532.4 678.5h4M534.4 676.5v4M532.4 685.4h4M534.4 683.4v4M532.4 692.4h4M534.4 690.4v4M532.4 699.4h4M534.4 697.4v4M546.2 671.5h4M548.2 669.5v4M546.2 678.5h4M548.2 676.5v4M546.2 685.4h4M548.2 683.4v4M546.2 692.4h4M548.2 690.4v4M546.2 699.4h4M548.2 697.4v4M559.9 671.5h4M561.9 669.5v4M559.9 678.5h4M561.9 676.5v4M559.9 685.4h4M561.9 683.4v4M559.9 692.4h4M561.9 690.4v4M559.9 699.4h4M561.9 697.4v4M573.7 671.5h4M575.7 669.5v4M573.7 678.5h4M575.7 676.5v4M573.7 685.4h4M575.7 683.4v4M573.7 692.4h4M575.7 690.4v4M573.7 699.4h4M575.7 697.4v4M587.5 671.5h4M589.5 669.5v4M587.5 678.5h4M589.5 676.5v4M587.5 685.4h4M589.5 683.4v4M587.5 692.4h4M589.5 690.4v4M587.5 699.4h4M589.5 697.4v4M428.5 734.5h4M430.5 732.5v4M428.5 748.3h4M430.5 746.3v4M428.5 762.1h4M430.5 760.1v4M442.3 734.5h4M444.3 732.5v4M442.3 748.3h4M444.3 746.3v4M442.3 762.1h4M444.3 760.1v4M456.1 734.5h4M458.1 732.5v4M456.1 748.3h4M458.1 746.3v4M456.1 762.1h4M458.1 760.1v4M469.9 734.5h4M471.9 732.5v4M469.9 748.3h4M471.9 746.3v4M469.9 762.1h4M471.9 760.1v4M643 569h4M645 567v4M657 583h4M659 581v4M670 597h4M672 595v4M788 569h4M790 567v4M788 583h4M790 581v4M774 611h4M776 609v4M788 611h4M790 609v4M921 555h4M923 553v4M935 541h4M937 539v4M935 555h4M937 553v4M921 569h4M923 567v4M893 597h4M895 595v4M879 611h4M881 609v4M893 611h4M895 609v4M935 500h4M937 498v4M760 541h4M762 539v4M934 651.5h4M936 649.5v4M948 651.5h4M950 649.5v4M962 651.5h4M964 649.5v4M899.7 598.6h4M901.7 596.6v4M913.1 598.6h4M915.1 596.6v4M1142 609.8h4M1144 607.8v4M1142 623.7h4M1144 621.7v4M1142 637.6h4M1144 635.6v4M1142 651.5h4M1144 649.5v4M1142 665.4h4M1144 663.4v4M1142 679.3h4M1144 677.3v4M1142 693.2h4M1144 691.2v4M1142 707.1h4M1144 705.1v4M1142 721h4M1144 719v4M1142 734.9h4M1144 732.9v4M1142 748.8h4M1144 746.8v4M934.5 824.5h4M936.5 822.5v4M934.5 831.5h4M936.5 829.5v4M948.4 824.5h4M950.4 822.5v4M948.4 831.5h4M950.4 829.5v4M962.2 824.5h4M964.2 822.5v4M962.2 831.5h4M964.2 829.5v4M976 824.5h4M978 822.5v4M976 831.5h4M978 829.5v4M989.9 824.5h4M991.9 822.5v4M989.9 831.5h4M991.9 829.5v4M1003.8 824.5h4M1005.8 822.5v4M1003.8 831.5h4M1005.8 829.5v4M1017.6 824.5h4M1019.6 822.5v4M1017.6 831.5h4M1019.6 829.5v4M1038 748h4M1040 746v4M1052 748h4M1054 746v4M1066 748h4M1068 746v4M1121 748h4M1123 746v4M1135 748h4M1137 746v4M1038.2 713.5h4M1040.2 711.5v4M1052.2 713.5h4M1054.2 711.5v4M1066.4 713.5h4M1068.4 711.5v4M1079.7 713.5h4M1081.7 711.5v4M774.5 651.6h4M776.5 649.6v4M899.5 651.6h4M901.5 649.6v4M885.5 651.6h4M887.5 649.6v4M871.6 651.6h4M873.6 649.6v4M774.5 665.6h4M776.5 663.6v4M899.5 665.6h4M901.5 663.6v4M885.5 665.6h4M887.5 663.6v4M871.6 665.6h4M873.6 663.6v4M774.5 678.8h4M776.5 676.8v4M899.5 678.8h4M901.5 676.8v4M885.5 678.8h4M887.5 676.8v4M774.5 692.4h4M776.5 690.4v4M899.5 692.4h4M901.5 690.4v4M885.5 692.4h4M887.5 690.4v4M774.5 706.4h4M776.5 704.4v4M899.5 706.4h4M901.5 704.4v4M885.5 706.4h4M887.5 704.4v4M774.5 720.6h4M776.5 718.6v4M899.5 720.6h4M901.5 718.6v4M774.5 734.4h4M776.5 732.4v4M899.5 734.4h4M901.5 732.4v4M774.5 748.2h4M776.5 746.2v4M899.5 748.2h4M901.5 746.2v4M774.5 762.5h4M776.5 760.5v4M899.5 762.5h4M901.5 760.5v4M774.5 776.4h4M776.5 774.4v4M899.5 776.4h4M901.5 774.4v4M788.2 651.6h4M790.2 649.6v4M801.3 651.6h4M803.3 649.6v4M754.3 769h4M756.3 767v4M754.3 783h4M756.3 781v4M754.3 796.3h4M756.3 794.3v4M754.3 810h4M756.3 808v4M754.3 824.4h4M756.3 822.4v4M754.3 838h4M756.3 836v4M740.5 824.4h4M742.5 822.4v4M740.5 838h4M742.5 836v4M691.8 824.4h4M693.8 822.4v4M691.8 838h4M693.8 836v4M678 838h4M680 836v4M681 790h4M683 788v4M695 790h4M697 788v4M774.9 823.8h4M776.9 821.8v4M788.6 823.8h4M790.6 821.8v4M816.1 859.4h4M818.1 857.4v4M816.1 873.1h4M818.1 871.1v4M802.4 873.1h4M804.4 871.1v4M760.5 886.3h4M762.5 884.3v4M774.3 886.3h4M776.3 884.3v4M788.6 886.3h4M790.6 884.3v4M802.4 886.3h4M804.4 884.3v4M816.1 886.3h4M818.1 884.3v4M849 889h4M851 887v4M862.9 889h4M864.9 887v4M876.7 889h4M878.7 887v4M890.5 889h4M892.5 887v4M904.4 889h4M906.4 887v4M918.2 889h4M920.2 887v4M545.3 838.3h4M547.3 836.3v4M545.3 852.3h4M547.3 850.3v4M545.3 866.4h4M547.3 864.4v4M545.3 880h4M547.3 878v4" stroke="#f08a30" stroke-width="1" fill="none" opacity="0.9"/>
<path d="M554.2 366.4h1.200M554.2 380.3h1.200M554.2 394.1h1.200M554.2 408h1.200M568.1 366.4h1.200M568.1 380.3h1.200M568.1 394.1h1.200M568.1 408h1.200M581.9 366.4h1.200M581.9 380.3h1.200M581.9 394.1h1.200M581.9 408h1.200M623.9 394.5h1.200M623.9 408.4h1.200M623.9 422.2h1.200M623.9 436.1h1.200M623.9 450h1.200M623.9 463.9h1.200M623.9 477.7h1.200M637.8 394.5h1.200M637.8 408.4h1.200M637.8 422.2h1.200M637.8 436.1h1.200M637.8 450h1.200M637.8 463.9h1.200M637.8 477.7h1.200M637.7 498.3h1.200M651.6 498.3h1.200M665.5 498.3h1.200M679.3 498.3h1.200M693.2 498.3h1.200M707.1 498.3h1.200M721 498.3h1.200M734.9 498.3h1.200M748.7 498.3h1.200M762.6 498.3h1.200M776.5 498.3h1.200M790.4 498.3h1.200M804.3 498.3h1.200M818.1 498.3h1.200M832 498.3h1.200M845.9 498.3h1.200M859.8 498.3h1.200M901.4 498.3h1.200M915.3 498.3h1.200M929.2 498.3h1.200M943.1 498.3h1.200M935.9 366.4h1.200M935.9 380.3h1.200M935.9 394.1h1.200M935.9 408h1.200M935.9 421.9h1.200M935.9 435.8h1.200M935.9 449.6h1.200M935.9 463.5h1.200M935.9 477.4h1.200M949.8 366.4h1.200M949.8 380.3h1.200M949.8 394.1h1.200M949.8 408h1.200M949.8 421.9h1.200M949.8 435.8h1.200M949.8 449.6h1.200M949.8 463.5h1.200M949.8 477.4h1.200M976.7 366.4h1.200M976.7 380.3h1.200M976.7 394.1h1.200M976.7 408h1.200M990.6 366.4h1.200M990.6 380.3h1.200M990.6 394.1h1.200M990.6 408h1.200M1004.4 366.4h1.200M1004.4 380.3h1.200M1004.4 394.1h1.200M1004.4 408h1.200M1101.7 484.3h1.200M1101.7 498.3h1.200M1101.7 512.3h1.200M1115.7 484.3h1.200M1115.7 498.3h1.200M1115.7 512.3h1.200M1129.7 484.3h1.200M1129.7 498.3h1.200M1129.7 512.3h1.200M520 547.5h1.200M520 554.4h1.200M533.8 547.5h1.200M533.8 554.4h1.200M547.6 547.5h1.200M547.6 554.4h1.200M561.3 547.5h1.200M561.3 554.4h1.200M575.1 547.5h1.200M575.1 554.4h1.200M588.9 547.5h1.200M588.9 554.4h1.200M602.7 547.5h1.200M602.7 554.4h1.200M520 561.4h1.200M520 568.3h1.200M520 575.2h1.200M533.8 561.4h1.200M533.8 568.3h1.200M533.8 575.2h1.200M520 671.5h1.200M520 678.5h1.200M520 685.4h1.200M520 692.4h1.200M520 699.4h1.200M533.8 671.5h1.200M533.8 678.5h1.200M533.8 685.4h1.200M533.8 692.4h1.200M533.8 699.4h1.200M547.6 671.5h1.200M547.6 678.5h1.200M547.6 685.4h1.200M547.6 692.4h1.200M547.6 699.4h1.200M561.3 671.5h1.200M561.3 678.5h1.200M561.3 685.4h1.200M561.3 692.4h1.200M561.3 699.4h1.200M575.1 671.5h1.200M575.1 678.5h1.200M575.1 685.4h1.200M575.1 692.4h1.200M575.1 699.4h1.200M588.9 671.5h1.200M588.9 678.5h1.200M588.9 685.4h1.200M588.9 692.4h1.200M588.9 699.4h1.200M429.9 734.5h1.200M429.9 748.3h1.200M429.9 762.1h1.200M443.7 734.5h1.200M443.7 748.3h1.200M443.7 762.1h1.200M457.5 734.5h1.200M457.5 748.3h1.200M457.5 762.1h1.200M471.3 734.5h1.200M471.3 748.3h1.200M471.3 762.1h1.200M644.4 569h1.200M658.4 583h1.200M671.4 597h1.200M789.4 569h1.200M789.4 583h1.200M775.4 611h1.200M789.4 611h1.200M922.4 555h1.200M936.4 541h1.200M936.4 555h1.200M922.4 569h1.200M894.4 597h1.200M880.4 611h1.200M894.4 611h1.200M936.4 500h1.200M761.4 541h1.200M935.4 651.5h1.200M949.4 651.5h1.200M963.4 651.5h1.200M901.1 598.6h1.200M914.5 598.6h1.200M1143.4 609.8h1.200M1143.4 623.7h1.200M1143.4 637.6h1.200M1143.4 651.5h1.200M1143.4 665.4h1.200M1143.4 679.3h1.200M1143.4 693.2h1.200M1143.4 707.1h1.200M1143.4 721h1.200M1143.4 734.9h1.200M1143.4 748.8h1.200M935.9 824.5h1.200M935.9 831.5h1.200M949.8 824.5h1.200M949.8 831.5h1.200M963.6 824.5h1.200M963.6 831.5h1.200M977.4 824.5h1.200M977.4 831.5h1.200M991.3 824.5h1.200M991.3 831.5h1.200M1005.1 824.5h1.200M1005.1 831.5h1.200M1019 824.5h1.200M1019 831.5h1.200M1039.4 748h1.200M1053.4 748h1.200M1067.4 748h1.200M1122.4 748h1.200M1136.4 748h1.200M1039.6 713.5h1.200M1053.6 713.5h1.200M1067.8 713.5h1.200M1081.1 713.5h1.200M775.9 651.6h1.200M900.9 651.6h1.200M886.9 651.6h1.200M873 651.6h1.200M775.9 665.6h1.200M900.9 665.6h1.200M886.9 665.6h1.200M873 665.6h1.200M775.9 678.8h1.200M900.9 678.8h1.200M886.9 678.8h1.200M775.9 692.4h1.200M900.9 692.4h1.200M886.9 692.4h1.200M775.9 706.4h1.200M900.9 706.4h1.200M886.9 706.4h1.200M775.9 720.6h1.200M900.9 720.6h1.200M775.9 734.4h1.200M900.9 734.4h1.200M775.9 748.2h1.200M900.9 748.2h1.200M775.9 762.5h1.200M900.9 762.5h1.200M775.9 776.4h1.200M900.9 776.4h1.200M789.6 651.6h1.200M802.7 651.6h1.200M755.7 769h1.200M755.7 783h1.200M755.7 796.3h1.200M755.7 810h1.200M755.7 824.4h1.200M755.7 838h1.200M741.9 824.4h1.200M741.9 838h1.200M693.2 824.4h1.200M693.2 838h1.200M679.4 838h1.200M682.4 790h1.200M696.4 790h1.200M776.3 823.8h1.200M790 823.8h1.200M817.5 859.4h1.200M817.5 873.1h1.200M803.8 873.1h1.200M761.9 886.3h1.200M775.7 886.3h1.200M790 886.3h1.200M803.8 886.3h1.200M817.5 886.3h1.200M850.4 889h1.200M864.2 889h1.200M878.1 889h1.200M891.9 889h1.200M905.8 889h1.200M919.6 889h1.200M546.7 838.3h1.200M546.7 852.3h1.200M546.7 866.4h1.200M546.7 880h1.200" stroke="#ffd070" stroke-width="1.300" fill="none"/>
</svg></div>
</body></html>
